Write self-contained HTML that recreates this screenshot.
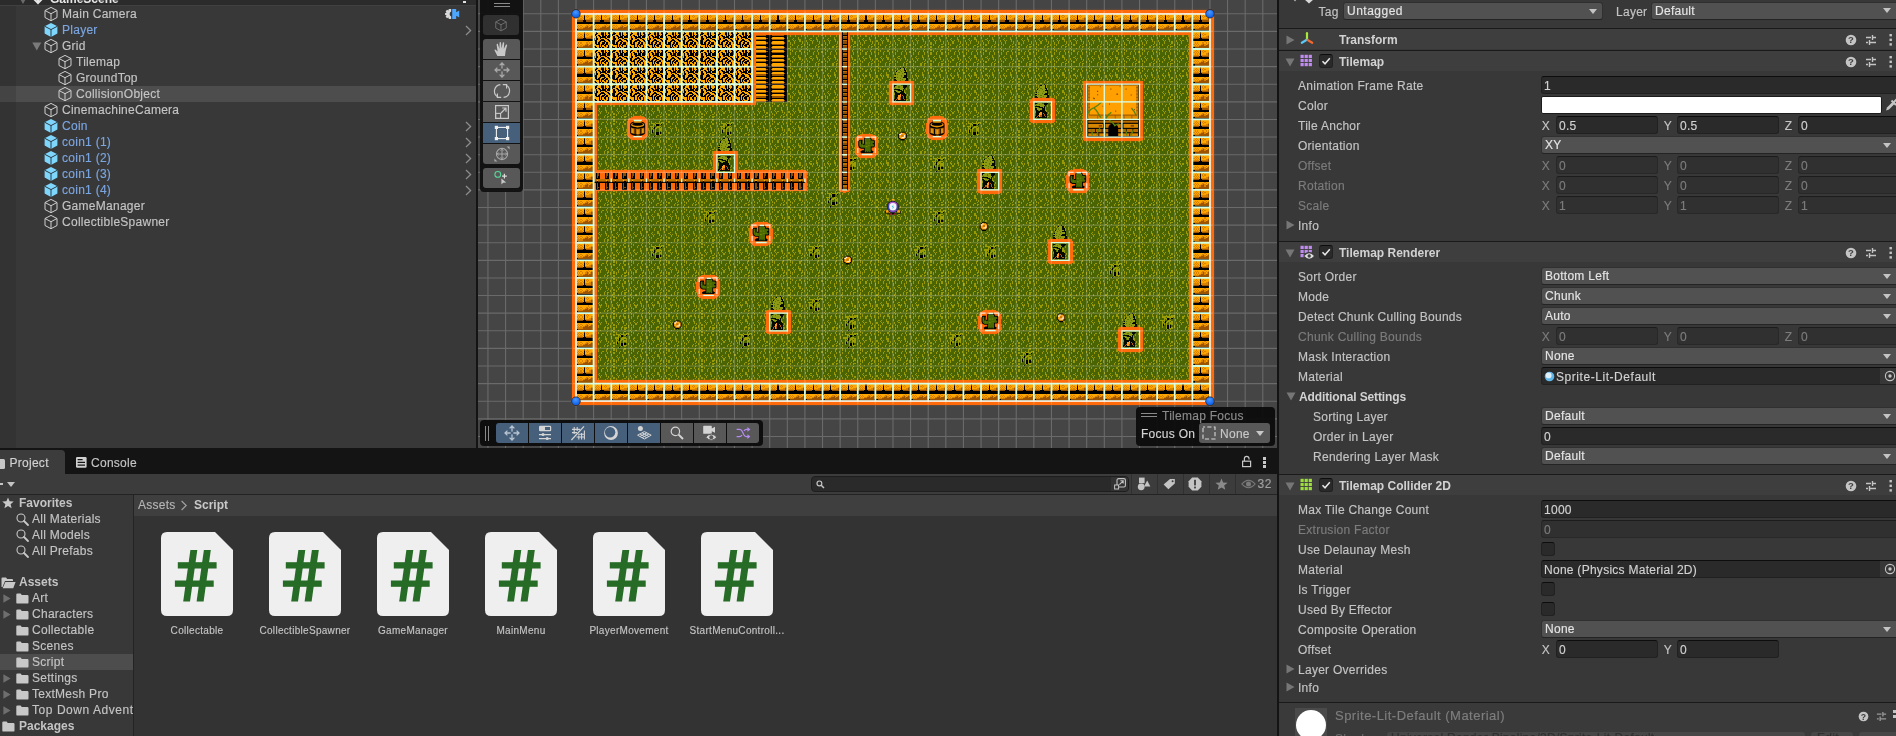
<!DOCTYPE html>
<html lang="en"><head><meta charset="utf-8"><title>Unity Editor</title>
<style>
*{box-sizing:border-box;margin:0;padding:0}
html,body{width:1896px;height:736px;overflow:hidden;background:#141414}
body{position:relative;font-family:"Liberation Sans",sans-serif;font-size:12px;color:#c4c4c4;line-height:16px;-webkit-font-smoothing:antialiased}
.abs{position:absolute}
.t{position:absolute;white-space:nowrap;letter-spacing:.27px}
.b{font-weight:bold;letter-spacing:0}
svg{position:absolute;overflow:visible}
/* hierarchy */
#hier{position:absolute;left:0;top:0;width:476px;height:448px;background:#383838;overflow:hidden}
#hier .gut{position:absolute;left:0;top:5px;width:16px;height:443px;background:#333}
#hier .hdr{position:absolute;left:0;top:-11px;width:476px;height:16px;background:#2b2b2b}
#hier .row{position:absolute;left:0;width:476px;height:16px}
#hier .sel{background:#4d4d4d}
#hier .row .t{top:0;line-height:16px;color:#c4c4c4}
#hier .row .pf{color:#7ba5e0}
/* inspector */
#insp{position:absolute;left:1279px;top:0;width:617px;height:736px;background:#383838;overflow:hidden}
#insp .hd{position:absolute;left:0;width:617px;height:21px;background:#3e3e3e;border-top:1px solid #1a1a1a}
#insp .hd .t{top:.5px;line-height:21px;color:#d2d2d2}
#insp .lab{position:absolute;white-space:nowrap;height:20px;line-height:20px;color:#c4c4c4;letter-spacing:.27px;margin-top:.5px}
#insp .dis{color:#7c7c7c}
.fld{position:absolute;height:18px;background:#2a2a2a;border:1px solid #212121;border-top-color:#0d0d0d;border-radius:3px;color:#d2d2d2;line-height:19.2px;padding-left:2px;white-space:nowrap;letter-spacing:.27px;overflow:hidden}
.fld.dis{color:#7c7c7c;background:#303030;border-color:#282828;border-top-color:#1c1c1c}
.dd{position:absolute;height:18px;background:#515151;border:1px solid #303030;border-bottom-color:#242424;border-radius:3px;color:#e4e4e4;line-height:17.6px;padding-left:3px;white-space:nowrap;letter-spacing:.27px;overflow:hidden}
.dd:after{content:"";position:absolute;right:5px;top:6px;border-left:4px solid transparent;border-right:4px solid transparent;border-top:5px solid #c4c4c4}
.cb{position:absolute;width:14px;height:14px;background:#2a2a2a;border:1px solid #212121;border-top-color:#0d0d0d;border-radius:3px}
.ax{position:absolute;height:20px;line-height:20px;color:#c4c4c4;margin-top:.6px;margin-left:.8px}
/* project */
#proj{position:absolute;left:0;top:448px;width:1277px;height:288px;background:#141414;overflow:hidden}
#insp .lab.b{letter-spacing:-.12px;color:#d2d2d2}
#root{position:absolute;left:0;top:0;width:1896px;height:736px;will-change:transform}
body{-webkit-text-stroke:.15px currentColor}
.b{-webkit-text-stroke:0}

</style></head>
<body>
<div id="root">
<div id="hier">
<div class="gut"></div>
<div class="hdr"><span class="t b" style="left:50px;top:1.8px;font-size:12px;color:#e6e6e6">GameScene</span><svg style="left:31px;top:2px" width="14" height="14" viewBox="0 0 14 14"><path d="M7 3 L7 11 M3 8 L7 12 L11 8" fill="none" stroke="#e6e6e6" stroke-width="2"/></svg><svg style="left:18px;top:7px" width="10" height="8" viewBox="0 0 10 8"><path d="M0.5 0 L9.5 0 L5 8 Z" fill="#6a6a6a"/></svg><div class="abs" style="left:463px;top:11.5px;width:2.6px;height:2.4px;background:#e0e0e0"></div></div>
<div class="abs" style="left:0;top:5px;width:476px;height:1px;background:#404040"></div>
<div class="row" style="top:6px">
<svg style="left:43.3px;top:0px" width="16" height="16" viewBox="0 0 16 16"><path d="M8 1.4 L14 4.5 L14 11.5 L8 14.7 L2 11.5 L2 4.5 Z M2 4.5 L8 7.7 L14 4.5 M8 7.7 L8 14.7" fill="none" stroke="#cfcfcf" stroke-width="1" stroke-linejoin="round"/></svg>
<span class="t" style="left:62px">Main Camera</span>
<svg style="left:444px;top:1px" width="16" height="14" viewBox="0 0 16 14"><path d="M7.2 2 L4.8 2 L4.4 3.4 L3 2.8 L1.6 4.4 L2.6 5.6 L1 6.2 L1 7.8 L2.6 8.4 L1.6 9.6 L3 11.2 L4.4 10.6 L4.8 12 L7.2 12 L7.2 9.4 A2.6 2.6 0 0 1 7.2 4.6 Z" fill="#d8d8d8"/><path d="M8.2 2 L12.2 2 L12.2 5.2 L15.2 3.6 L15.2 10.4 L12.2 8.8 L12.2 12 L8.2 12 Z" fill="#4da6ff"/></svg>
</div>
<div class="row" style="top:22px">
<svg style="left:43.3px;top:0px" width="16" height="16" viewBox="0 0 16 16"><path d="M8 1 L14.4 4.2 L14.4 11.6 L8 15 L1.6 11.6 L1.6 4.2 Z" fill="#7fd6fd"/><path d="M1.6 4.2 L8 7.6 L14.4 4.2 M8 7.6 L8 15" fill="none" stroke="#2c3a44" stroke-width="1"/></svg>
<span class="t pf" style="left:62px">Player</span>
<svg style="left:464px;top:3px" width="8" height="11" viewBox="0 0 8 11"><path d="M2 1 L6.6 5.5 L2 10" fill="none" stroke="#8c8c8c" stroke-width="1.3"/></svg>
</div>
<div class="row" style="top:38px">
<svg style="left:32px;top:4px" width="10" height="9" viewBox="0 0 10 9"><path d="M0.3 0.5 L9.3 0.5 L4.8 8.6 Z" fill="#7a7a7a"/></svg>
<svg style="left:43.3px;top:0px" width="16" height="16" viewBox="0 0 16 16"><path d="M8 1.4 L14 4.5 L14 11.5 L8 14.7 L2 11.5 L2 4.5 Z M2 4.5 L8 7.7 L14 4.5 M8 7.7 L8 14.7" fill="none" stroke="#cfcfcf" stroke-width="1" stroke-linejoin="round"/></svg>
<span class="t" style="left:62px">Grid</span>
</div>
<div class="row" style="top:54px">
<svg style="left:57.3px;top:0px" width="16" height="16" viewBox="0 0 16 16"><path d="M8 1.4 L14 4.5 L14 11.5 L8 14.7 L2 11.5 L2 4.5 Z M2 4.5 L8 7.7 L14 4.5 M8 7.7 L8 14.7" fill="none" stroke="#cfcfcf" stroke-width="1" stroke-linejoin="round"/></svg>
<span class="t" style="left:76px">Tilemap</span>
</div>
<div class="row" style="top:70px">
<svg style="left:57.3px;top:0px" width="16" height="16" viewBox="0 0 16 16"><path d="M8 1.4 L14 4.5 L14 11.5 L8 14.7 L2 11.5 L2 4.5 Z M2 4.5 L8 7.7 L14 4.5 M8 7.7 L8 14.7" fill="none" stroke="#cfcfcf" stroke-width="1" stroke-linejoin="round"/></svg>
<span class="t" style="left:76px">GroundTop</span>
</div>
<div class="row sel" style="top:86px">
<div class="abs" style="left:0;top:0;width:16px;height:16px;background:#444"></div>
<svg style="left:57.3px;top:0px" width="16" height="16" viewBox="0 0 16 16"><path d="M8 1.4 L14 4.5 L14 11.5 L8 14.7 L2 11.5 L2 4.5 Z M2 4.5 L8 7.7 L14 4.5 M8 7.7 L8 14.7" fill="none" stroke="#cfcfcf" stroke-width="1" stroke-linejoin="round"/></svg>
<span class="t" style="left:76px">CollisionObject</span>
</div>
<div class="row" style="top:102px">
<svg style="left:43.3px;top:0px" width="16" height="16" viewBox="0 0 16 16"><path d="M8 1.4 L14 4.5 L14 11.5 L8 14.7 L2 11.5 L2 4.5 Z M2 4.5 L8 7.7 L14 4.5 M8 7.7 L8 14.7" fill="none" stroke="#cfcfcf" stroke-width="1" stroke-linejoin="round"/></svg>
<span class="t" style="left:62px">CinemachineCamera</span>
</div>
<div class="row" style="top:118px">
<svg style="left:43.3px;top:0px" width="16" height="16" viewBox="0 0 16 16"><path d="M8 1 L14.4 4.2 L14.4 11.6 L8 15 L1.6 11.6 L1.6 4.2 Z" fill="#7fd6fd"/><path d="M1.6 4.2 L8 7.6 L14.4 4.2 M8 7.6 L8 15" fill="none" stroke="#2c3a44" stroke-width="1"/></svg>
<span class="t pf" style="left:62px">Coin</span>
<svg style="left:464px;top:3px" width="8" height="11" viewBox="0 0 8 11"><path d="M2 1 L6.6 5.5 L2 10" fill="none" stroke="#8c8c8c" stroke-width="1.3"/></svg>
</div>
<div class="row" style="top:134px">
<svg style="left:43.3px;top:0px" width="16" height="16" viewBox="0 0 16 16"><path d="M8 1 L14.4 4.2 L14.4 11.6 L8 15 L1.6 11.6 L1.6 4.2 Z" fill="#7fd6fd"/><path d="M1.6 4.2 L8 7.6 L14.4 4.2 M8 7.6 L8 15" fill="none" stroke="#2c3a44" stroke-width="1"/></svg>
<span class="t pf" style="left:62px">coin1 (1)</span>
<svg style="left:464px;top:3px" width="8" height="11" viewBox="0 0 8 11"><path d="M2 1 L6.6 5.5 L2 10" fill="none" stroke="#8c8c8c" stroke-width="1.3"/></svg>
</div>
<div class="row" style="top:150px">
<svg style="left:43.3px;top:0px" width="16" height="16" viewBox="0 0 16 16"><path d="M8 1 L14.4 4.2 L14.4 11.6 L8 15 L1.6 11.6 L1.6 4.2 Z" fill="#7fd6fd"/><path d="M1.6 4.2 L8 7.6 L14.4 4.2 M8 7.6 L8 15" fill="none" stroke="#2c3a44" stroke-width="1"/></svg>
<span class="t pf" style="left:62px">coin1 (2)</span>
<svg style="left:464px;top:3px" width="8" height="11" viewBox="0 0 8 11"><path d="M2 1 L6.6 5.5 L2 10" fill="none" stroke="#8c8c8c" stroke-width="1.3"/></svg>
</div>
<div class="row" style="top:166px">
<svg style="left:43.3px;top:0px" width="16" height="16" viewBox="0 0 16 16"><path d="M8 1 L14.4 4.2 L14.4 11.6 L8 15 L1.6 11.6 L1.6 4.2 Z" fill="#7fd6fd"/><path d="M1.6 4.2 L8 7.6 L14.4 4.2 M8 7.6 L8 15" fill="none" stroke="#2c3a44" stroke-width="1"/></svg>
<span class="t pf" style="left:62px">coin1 (3)</span>
<svg style="left:464px;top:3px" width="8" height="11" viewBox="0 0 8 11"><path d="M2 1 L6.6 5.5 L2 10" fill="none" stroke="#8c8c8c" stroke-width="1.3"/></svg>
</div>
<div class="row" style="top:182px">
<svg style="left:43.3px;top:0px" width="16" height="16" viewBox="0 0 16 16"><path d="M8 1 L14.4 4.2 L14.4 11.6 L8 15 L1.6 11.6 L1.6 4.2 Z" fill="#7fd6fd"/><path d="M1.6 4.2 L8 7.6 L14.4 4.2 M8 7.6 L8 15" fill="none" stroke="#2c3a44" stroke-width="1"/></svg>
<span class="t pf" style="left:62px">coin1 (4)</span>
<svg style="left:464px;top:3px" width="8" height="11" viewBox="0 0 8 11"><path d="M2 1 L6.6 5.5 L2 10" fill="none" stroke="#8c8c8c" stroke-width="1.3"/></svg>
</div>
<div class="row" style="top:198px">
<svg style="left:43.3px;top:0px" width="16" height="16" viewBox="0 0 16 16"><path d="M8 1.4 L14 4.5 L14 11.5 L8 14.7 L2 11.5 L2 4.5 Z M2 4.5 L8 7.7 L14 4.5 M8 7.7 L8 14.7" fill="none" stroke="#cfcfcf" stroke-width="1" stroke-linejoin="round"/></svg>
<span class="t" style="left:62px">GameManager</span>
</div>
<div class="row" style="top:214px">
<svg style="left:43.3px;top:0px" width="16" height="16" viewBox="0 0 16 16"><path d="M8 1.4 L14 4.5 L14 11.5 L8 14.7 L2 11.5 L2 4.5 Z M2 4.5 L8 7.7 L14 4.5 M8 7.7 L8 14.7" fill="none" stroke="#cfcfcf" stroke-width="1" stroke-linejoin="round"/></svg>
<span class="t" style="left:62px">CollectibleSpawner</span>
</div>
</div>
<div id="scene" class="abs" style="left:478px;top:0;width:799px;height:448px;background:#454545;overflow:hidden">
<svg style="left:0;top:0" width="799" height="448" viewBox="478 0 799 448">
<defs><radialGradient id="hgrad" cx="0.45" cy="0.3" r="0.8"><stop offset="0" stop-color="#4a98ff"/><stop offset="0.6" stop-color="#1c6ef0"/><stop offset="1" stop-color="#0a50c8"/></radialGradient><filter id="oblur" x="-5%" y="-5%" width="110%" height="110%"><feGaussianBlur stdDeviation="1"/></filter><g id="t-grass"><rect width="16" height="16" fill="#4b6403"/><rect x="2" y="0" width="1" height="1.06" fill="#989a06"/><rect x="12" y="0" width="1" height="1.06" fill="#989a06"/><rect x="2" y="1" width="1" height="1.06" fill="#989a06"/><rect x="4" y="1" width="1" height="1.06" fill="#989a06"/><rect x="11" y="1" width="1" height="1.06" fill="#989a06"/><rect x="4" y="2" width="1" height="1.06" fill="#989a06"/><rect x="8" y="2" width="1" height="1.06" fill="#989a06"/><rect x="11" y="2" width="1" height="1.06" fill="#989a06"/><rect x="15" y="2" width="1" height="1.06" fill="#989a06"/><rect x="2" y="3" width="1" height="1.06" fill="#989a06"/><rect x="7" y="3" width="1" height="1.06" fill="#989a06"/><rect x="12" y="3" width="1" height="1.06" fill="#989a06"/><rect x="15" y="3" width="1" height="1.06" fill="#989a06"/><rect x="2" y="4" width="1" height="1.06" fill="#989a06"/><rect x="7" y="4" width="1" height="1.06" fill="#989a06"/><rect x="12" y="4" width="1" height="1.06" fill="#989a06"/><rect x="0" y="5" width="1" height="1.06" fill="#989a06"/><rect x="10" y="5" width="1" height="1.06" fill="#989a06"/><rect x="0" y="6" width="1" height="1.06" fill="#989a06"/><rect x="5" y="6" width="1" height="1.06" fill="#989a06"/><rect x="10" y="6" width="1" height="1.06" fill="#989a06"/><rect x="4" y="7" width="1" height="1.06" fill="#989a06"/><rect x="10" y="7" width="2" height="1.06" fill="#989a06"/><rect x="1" y="8" width="1" height="1.06" fill="#989a06"/><rect x="5" y="8" width="1" height="1.06" fill="#989a06"/><rect x="7" y="8" width="1" height="1.06" fill="#989a06"/><rect x="11" y="8" width="1" height="1.06" fill="#989a06"/><rect x="1" y="9" width="1" height="1.06" fill="#989a06"/><rect x="6" y="9" width="1" height="1.06" fill="#989a06"/><rect x="11" y="9" width="1" height="1.06" fill="#989a06"/><rect x="13" y="9" width="1" height="1.06" fill="#989a06"/><rect x="2" y="10" width="1" height="1.06" fill="#989a06"/><rect x="6" y="10" width="1" height="1.06" fill="#989a06"/><rect x="13" y="10" width="1" height="1.06" fill="#989a06"/><rect x="2" y="11" width="1" height="1.06" fill="#989a06"/><rect x="4" y="11" width="1" height="1.06" fill="#989a06"/><rect x="12" y="11" width="1" height="1.06" fill="#989a06"/><rect x="15" y="11" width="1" height="1.06" fill="#989a06"/><rect x="4" y="12" width="1" height="1.06" fill="#989a06"/><rect x="10" y="12" width="1" height="1.06" fill="#989a06"/><rect x="15" y="12" width="1" height="1.06" fill="#989a06"/><rect x="2" y="13" width="1" height="1.06" fill="#989a06"/><rect x="9" y="13" width="1" height="1.06" fill="#989a06"/><rect x="12" y="13" width="2" height="1.06" fill="#989a06"/><rect x="2" y="14" width="1" height="1.06" fill="#989a06"/><rect x="9" y="14" width="1" height="1.06" fill="#989a06"/><rect x="12" y="14" width="1" height="1.06" fill="#989a06"/><rect x="1" y="15" width="1" height="1.06" fill="#989a06"/><rect x="6" y="15" width="1" height="1.06" fill="#989a06"/></g><g id="t-brick"><rect x="0" y="0" width="1" height="1.06" fill="#d88200"/><rect x="1" y="0" width="6" height="1.06" fill="#ffa600"/><rect x="7" y="0" width="1" height="1.06" fill="#6a3800"/><rect x="8" y="0" width="7" height="1.06" fill="#ffa600"/><rect x="15" y="0" width="1" height="1.06" fill="#d88200"/><rect x="0" y="1" width="3" height="1.06" fill="#ffa600"/><rect x="3" y="1" width="1" height="1.06" fill="#d88200"/><rect x="4" y="1" width="3" height="1.06" fill="#ffa600"/><rect x="7" y="1" width="1" height="1.06" fill="#6a3800"/><rect x="8" y="1" width="2" height="1.06" fill="#ffa600"/><rect x="10" y="1" width="1" height="1.06" fill="#d88200"/><rect x="11" y="1" width="4" height="1.06" fill="#ffa600"/><rect x="15" y="1" width="1" height="1.06" fill="#d88200"/><rect x="0" y="2" width="2" height="1.06" fill="#ffa600"/><rect x="2" y="2" width="1" height="1.06" fill="#d88200"/><rect x="3" y="2" width="1" height="1.06" fill="#ffa600"/><rect x="4" y="2" width="1" height="1.06" fill="#d88200"/><rect x="5" y="2" width="2" height="1.06" fill="#ffa600"/><rect x="7" y="2" width="1" height="1.06" fill="#000"/><rect x="8" y="2" width="1" height="1.06" fill="#ffa600"/><rect x="9" y="2" width="1" height="1.06" fill="#d88200"/><rect x="10" y="2" width="1" height="1.06" fill="#ffa600"/><rect x="11" y="2" width="1" height="1.06" fill="#d88200"/><rect x="12" y="2" width="3" height="1.06" fill="#ffa600"/><rect x="15" y="2" width="1" height="1.06" fill="#d88200"/><rect x="0" y="3" width="1" height="1.06" fill="#ffa600"/><rect x="1" y="3" width="1" height="1.06" fill="#d88200"/><rect x="2" y="3" width="1" height="1.06" fill="#ffa600"/><rect x="3" y="3" width="1" height="1.06" fill="#d88200"/><rect x="4" y="3" width="1" height="1.06" fill="#ffa600"/><rect x="5" y="3" width="1" height="1.06" fill="#d88200"/><rect x="6" y="3" width="1" height="1.06" fill="#ffa600"/><rect x="7" y="3" width="1" height="1.06" fill="#000"/><rect x="8" y="3" width="2" height="1.06" fill="#ffa600"/><rect x="10" y="3" width="1" height="1.06" fill="#d88200"/><rect x="11" y="3" width="3" height="1.06" fill="#ffa600"/><rect x="14" y="3" width="1" height="1.06" fill="#d88200"/><rect x="15" y="3" width="1" height="1.06" fill="#9c5400"/><rect x="0" y="4" width="2" height="1.06" fill="#ffa600"/><rect x="2" y="4" width="1" height="1.06" fill="#d88200"/><rect x="3" y="4" width="1" height="1.06" fill="#ffa600"/><rect x="4" y="4" width="1" height="1.06" fill="#d88200"/><rect x="5" y="4" width="1" height="1.06" fill="#ffa600"/><rect x="6" y="4" width="1" height="1.06" fill="#d88200"/><rect x="7" y="4" width="1" height="1.06" fill="#000"/><rect x="8" y="4" width="4" height="1.06" fill="#ffa600"/><rect x="12" y="4" width="2" height="1.06" fill="#d88200"/><rect x="14" y="4" width="2" height="1.06" fill="#9c5400"/><rect x="0" y="5" width="1" height="1.06" fill="#ffa600"/><rect x="1" y="5" width="5" height="1.06" fill="#d88200"/><rect x="6" y="5" width="1" height="1.06" fill="#ffa600"/><rect x="7" y="5" width="1" height="1.06" fill="#000"/><rect x="8" y="5" width="6" height="1.06" fill="#d88200"/><rect x="14" y="5" width="2" height="1.06" fill="#9c5400"/><rect x="0" y="6" width="6" height="1.06" fill="#9c5400"/><rect x="6" y="6" width="3" height="1.06" fill="#000"/><rect x="9" y="6" width="7" height="1.06" fill="#9c5400"/><rect x="0" y="7" width="16" height="1.06" fill="#000"/><rect x="0" y="8" width="16" height="1.06" fill="#000"/><rect x="0" y="9" width="1" height="1.06" fill="#000"/><rect x="1" y="9" width="10" height="1.06" fill="#ffa600"/><rect x="11" y="9" width="1" height="1.06" fill="#d88200"/><rect x="12" y="9" width="3" height="1.06" fill="#ffa600"/><rect x="15" y="9" width="1" height="1.06" fill="#d88200"/><rect x="0" y="10" width="2" height="1.06" fill="#ffa600"/><rect x="2" y="10" width="1" height="1.06" fill="#d88200"/><rect x="3" y="10" width="1" height="1.06" fill="#ffa600"/><rect x="4" y="10" width="1" height="1.06" fill="#d88200"/><rect x="5" y="10" width="4" height="1.06" fill="#ffa600"/><rect x="9" y="10" width="2" height="1.06" fill="#d88200"/><rect x="11" y="10" width="1" height="1.06" fill="#ffa600"/><rect x="12" y="10" width="1" height="1.06" fill="#d88200"/><rect x="13" y="10" width="1" height="1.06" fill="#ffa600"/><rect x="14" y="10" width="2" height="1.06" fill="#d88200"/><rect x="0" y="11" width="1" height="1.06" fill="#ffa600"/><rect x="1" y="11" width="1" height="1.06" fill="#d88200"/><rect x="2" y="11" width="1" height="1.06" fill="#ffa600"/><rect x="3" y="11" width="1" height="1.06" fill="#d88200"/><rect x="4" y="11" width="1" height="1.06" fill="#ffa600"/><rect x="5" y="11" width="1" height="1.06" fill="#d88200"/><rect x="6" y="11" width="2" height="1.06" fill="#ffa600"/><rect x="8" y="11" width="2" height="1.06" fill="#d88200"/><rect x="10" y="11" width="1" height="1.06" fill="#9c5400"/><rect x="11" y="11" width="1" height="1.06" fill="#d88200"/><rect x="12" y="11" width="1" height="1.06" fill="#ffa600"/><rect x="13" y="11" width="1" height="1.06" fill="#d88200"/><rect x="14" y="11" width="2" height="1.06" fill="#9c5400"/><rect x="0" y="12" width="2" height="1.06" fill="#ffa600"/><rect x="2" y="12" width="1" height="1.06" fill="#d88200"/><rect x="3" y="12" width="1" height="1.06" fill="#ffa600"/><rect x="4" y="12" width="1" height="1.06" fill="#d88200"/><rect x="5" y="12" width="1" height="1.06" fill="#ffa600"/><rect x="6" y="12" width="2" height="1.06" fill="#d88200"/><rect x="8" y="12" width="3" height="1.06" fill="#9c5400"/><rect x="11" y="12" width="1" height="1.06" fill="#d88200"/><rect x="12" y="12" width="4" height="1.06" fill="#9c5400"/><rect x="0" y="13" width="1" height="1.06" fill="#ffa600"/><rect x="1" y="13" width="5" height="1.06" fill="#d88200"/><rect x="6" y="13" width="10" height="1.06" fill="#9c5400"/><rect x="0" y="14" width="2" height="1.06" fill="#000"/><rect x="2" y="14" width="13" height="1.06" fill="#9c5400"/><rect x="15" y="14" width="1" height="1.06" fill="#000"/><rect x="0" y="15" width="16" height="1.06" fill="#000"/></g><g id="t-wheat"><rect x="0" y="0" width="2" height="1.06" fill="#ffa800"/><rect x="2" y="0" width="1" height="1.06" fill="#000"/><rect x="3" y="0" width="4" height="1.06" fill="#ffa800"/><rect x="7" y="0" width="2" height="1.06" fill="#000"/><rect x="9" y="0" width="1" height="1.06" fill="#ffa800"/><rect x="10" y="0" width="1" height="1.06" fill="#000"/><rect x="11" y="0" width="2" height="1.06" fill="#ffa800"/><rect x="13" y="0" width="2" height="1.06" fill="#000"/><rect x="15" y="0" width="1" height="1.06" fill="#ffa800"/><rect x="0" y="1" width="2" height="1.06" fill="#ffa800"/><rect x="2" y="1" width="2" height="1.06" fill="#000"/><rect x="4" y="1" width="3" height="1.06" fill="#ffa800"/><rect x="7" y="1" width="2" height="1.06" fill="#000"/><rect x="9" y="1" width="1" height="1.06" fill="#ffa800"/><rect x="10" y="1" width="1" height="1.06" fill="#000"/><rect x="11" y="1" width="2" height="1.06" fill="#ffa800"/><rect x="13" y="1" width="2" height="1.06" fill="#000"/><rect x="15" y="1" width="1" height="1.06" fill="#ffa800"/><rect x="0" y="2" width="1" height="1.06" fill="#ffa800"/><rect x="1" y="2" width="2" height="1.06" fill="#000"/><rect x="3" y="2" width="4" height="1.06" fill="#ffa800"/><rect x="7" y="2" width="2" height="1.06" fill="#000"/><rect x="9" y="2" width="1" height="1.06" fill="#ffa800"/><rect x="10" y="2" width="1" height="1.06" fill="#000"/><rect x="11" y="2" width="3" height="1.06" fill="#ffa800"/><rect x="14" y="2" width="2" height="1.06" fill="#000"/><rect x="0" y="3" width="1" height="1.06" fill="#ffa800"/><rect x="1" y="3" width="1" height="1.06" fill="#000"/><rect x="2" y="3" width="2" height="1.06" fill="#ffa800"/><rect x="4" y="3" width="2" height="1.06" fill="#000"/><rect x="6" y="3" width="2" height="1.06" fill="#ffa800"/><rect x="8" y="3" width="1" height="1.06" fill="#000"/><rect x="9" y="3" width="1" height="1.06" fill="#ffa800"/><rect x="10" y="3" width="2" height="1.06" fill="#000"/><rect x="12" y="3" width="1" height="1.06" fill="#ffa800"/><rect x="13" y="3" width="3" height="1.06" fill="#000"/><rect x="0" y="4" width="2" height="1.06" fill="#ffa800"/><rect x="2" y="4" width="1" height="1.06" fill="#000"/><rect x="3" y="4" width="2" height="1.06" fill="#ffa800"/><rect x="5" y="4" width="2" height="1.06" fill="#000"/><rect x="7" y="4" width="1" height="1.06" fill="#ffa800"/><rect x="8" y="4" width="3" height="1.06" fill="#000"/><rect x="11" y="4" width="1" height="1.06" fill="#ffa800"/><rect x="12" y="4" width="4" height="1.06" fill="#000"/><rect x="0" y="5" width="2" height="1.06" fill="#ffa800"/><rect x="2" y="5" width="1" height="1.06" fill="#000"/><rect x="3" y="5" width="3" height="1.06" fill="#ffa800"/><rect x="6" y="5" width="5" height="1.06" fill="#000"/><rect x="11" y="5" width="1" height="1.06" fill="#ffa800"/><rect x="12" y="5" width="3" height="1.06" fill="#000"/><rect x="15" y="5" width="1" height="1.06" fill="#ffa800"/><rect x="0" y="6" width="1" height="1.06" fill="#000"/><rect x="1" y="6" width="1" height="1.06" fill="#ffa800"/><rect x="2" y="6" width="2" height="1.06" fill="#000"/><rect x="4" y="6" width="2" height="1.06" fill="#ffa800"/><rect x="6" y="6" width="1" height="1.06" fill="#000"/><rect x="7" y="6" width="3" height="1.06" fill="#ffa800"/><rect x="10" y="6" width="2" height="1.06" fill="#000"/><rect x="12" y="6" width="4" height="1.06" fill="#ffa800"/><rect x="0" y="7" width="1" height="1.06" fill="#000"/><rect x="1" y="7" width="1" height="1.06" fill="#ffa800"/><rect x="2" y="7" width="2" height="1.06" fill="#000"/><rect x="4" y="7" width="3" height="1.06" fill="#ffa800"/><rect x="7" y="7" width="2" height="1.06" fill="#000"/><rect x="9" y="7" width="3" height="1.06" fill="#ffa800"/><rect x="12" y="7" width="2" height="1.06" fill="#000"/><rect x="14" y="7" width="2" height="1.06" fill="#ffa800"/><rect x="0" y="8" width="3" height="1.06" fill="#000"/><rect x="3" y="8" width="3" height="1.06" fill="#ffa800"/><rect x="6" y="8" width="4" height="1.06" fill="#000"/><rect x="10" y="8" width="3" height="1.06" fill="#ffa800"/><rect x="13" y="8" width="2" height="1.06" fill="#000"/><rect x="15" y="8" width="1" height="1.06" fill="#ffa800"/><rect x="0" y="9" width="1" height="1.06" fill="#ffa800"/><rect x="1" y="9" width="2" height="1.06" fill="#000"/><rect x="3" y="9" width="2" height="1.06" fill="#ffa800"/><rect x="5" y="9" width="2" height="1.06" fill="#000"/><rect x="7" y="9" width="2" height="1.06" fill="#ffa800"/><rect x="9" y="9" width="2" height="1.06" fill="#000"/><rect x="11" y="9" width="3" height="1.06" fill="#ffa800"/><rect x="14" y="9" width="2" height="1.06" fill="#000"/><rect x="0" y="10" width="1" height="1.06" fill="#ffa800"/><rect x="1" y="10" width="2" height="1.06" fill="#000"/><rect x="3" y="10" width="1" height="1.06" fill="#ffa800"/><rect x="4" y="10" width="2" height="1.06" fill="#000"/><rect x="6" y="10" width="2" height="1.06" fill="#ffa800"/><rect x="8" y="10" width="2" height="1.06" fill="#000"/><rect x="10" y="10" width="1" height="1.06" fill="#ffa800"/><rect x="11" y="10" width="2" height="1.06" fill="#000"/><rect x="13" y="10" width="2" height="1.06" fill="#ffa800"/><rect x="15" y="10" width="1" height="1.06" fill="#000"/><rect x="0" y="11" width="2" height="1.06" fill="#ffa800"/><rect x="2" y="11" width="4" height="1.06" fill="#000"/><rect x="6" y="11" width="1" height="1.06" fill="#ffa800"/><rect x="7" y="11" width="2" height="1.06" fill="#000"/><rect x="9" y="11" width="1" height="1.06" fill="#ffa800"/><rect x="10" y="11" width="3" height="1.06" fill="#000"/><rect x="13" y="11" width="3" height="1.06" fill="#ffa800"/><rect x="0" y="12" width="5" height="1.06" fill="#ffa800"/><rect x="5" y="12" width="1" height="1.06" fill="#000"/><rect x="6" y="12" width="1" height="1.06" fill="#ffa800"/><rect x="7" y="12" width="1" height="1.06" fill="#000"/><rect x="8" y="12" width="1" height="1.06" fill="#ffa800"/><rect x="9" y="12" width="2" height="1.06" fill="#000"/><rect x="11" y="12" width="2" height="1.06" fill="#ffa800"/><rect x="13" y="12" width="1" height="1.06" fill="#000"/><rect x="14" y="12" width="1" height="1.06" fill="#ffa800"/><rect x="15" y="12" width="1" height="1.06" fill="#e08c00"/><rect x="0" y="13" width="2" height="1.06" fill="#000"/><rect x="2" y="13" width="3" height="1.06" fill="#ffa800"/><rect x="5" y="13" width="1" height="1.06" fill="#000"/><rect x="6" y="13" width="1" height="1.06" fill="#ffa800"/><rect x="7" y="13" width="1" height="1.06" fill="#000"/><rect x="8" y="13" width="2" height="1.06" fill="#ffa800"/><rect x="10" y="13" width="1" height="1.06" fill="#000"/><rect x="11" y="13" width="2" height="1.06" fill="#ffa800"/><rect x="13" y="13" width="1" height="1.06" fill="#000"/><rect x="14" y="13" width="2" height="1.06" fill="#ffa800"/><rect x="0" y="14" width="1" height="1.06" fill="#ffa800"/><rect x="1" y="14" width="2" height="1.06" fill="#000"/><rect x="3" y="14" width="2" height="1.06" fill="#ffa800"/><rect x="5" y="14" width="2" height="1.06" fill="#000"/><rect x="7" y="14" width="1" height="1.06" fill="#ffa800"/><rect x="8" y="14" width="1" height="1.06" fill="#000"/><rect x="9" y="14" width="3" height="1.06" fill="#ffa800"/><rect x="12" y="14" width="2" height="1.06" fill="#000"/><rect x="14" y="14" width="2" height="1.06" fill="#ffa800"/><rect x="0" y="15" width="2" height="1.06" fill="#ffa800"/><rect x="2" y="15" width="2" height="1.06" fill="#000"/><rect x="4" y="15" width="1" height="1.06" fill="#ffa800"/><rect x="5" y="15" width="1" height="1.06" fill="#000"/><rect x="6" y="15" width="2" height="1.06" fill="#ffa800"/><rect x="8" y="15" width="1" height="1.06" fill="#000"/><rect x="9" y="15" width="3" height="1.06" fill="#ffa800"/><rect x="12" y="15" width="1" height="1.06" fill="#000"/><rect x="13" y="15" width="3" height="1.06" fill="#ffa800"/></g><g id="t-tuft"><rect x="13" y="2" width="2" height="1.06" fill="#9c9e06"/><rect x="4" y="3" width="3" height="1.06" fill="#9c9e06"/><rect x="9" y="3" width="3" height="1.06" fill="#9c9e06"/><rect x="13" y="3" width="1" height="1.06" fill="#9c9e06"/><rect x="6" y="4" width="1" height="1.06" fill="#9c9e06"/><rect x="8" y="4" width="1" height="1.06" fill="#9c9e06"/><rect x="9" y="4" width="2" height="1.06" fill="#000"/><rect x="12" y="4" width="1" height="1.06" fill="#9c9e06"/><rect x="13" y="4" width="1" height="1.06" fill="#000"/><rect x="6" y="5" width="1" height="1.06" fill="#9c9e06"/><rect x="8" y="5" width="1" height="1.06" fill="#9c9e06"/><rect x="9" y="5" width="2" height="1.06" fill="#000"/><rect x="3" y="6" width="2" height="1.06" fill="#9c9e06"/><rect x="6" y="6" width="1" height="1.06" fill="#9c9e06"/><rect x="11" y="6" width="2" height="1.06" fill="#9c9e06"/><rect x="4" y="7" width="1" height="1.06" fill="#9c9e06"/><rect x="6" y="7" width="1" height="1.06" fill="#9c9e06"/><rect x="7" y="7" width="1" height="1.06" fill="#000"/><rect x="9" y="7" width="2" height="1.06" fill="#9c9e06"/><rect x="13" y="7" width="1" height="1.06" fill="#9c9e06"/><rect x="4" y="8" width="1" height="1.06" fill="#9c9e06"/><rect x="7" y="8" width="1" height="1.06" fill="#000"/><rect x="8" y="8" width="2" height="1.06" fill="#9c9e06"/><rect x="12" y="8" width="2" height="1.06" fill="#9c9e06"/><rect x="4" y="9" width="1" height="1.06" fill="#9c9e06"/><rect x="8" y="9" width="1" height="1.06" fill="#9c9e06"/><rect x="11" y="9" width="2" height="1.06" fill="#9c9e06"/><rect x="4" y="10" width="1" height="1.06" fill="#9c9e06"/><rect x="5" y="10" width="1" height="1.06" fill="#000"/><rect x="8" y="10" width="1" height="1.06" fill="#9c9e06"/><rect x="11" y="10" width="1" height="1.06" fill="#9c9e06"/><rect x="4" y="11" width="1" height="1.06" fill="#9c9e06"/><rect x="5" y="11" width="1" height="1.06" fill="#000"/><rect x="8" y="11" width="1" height="1.06" fill="#9c9e06"/><rect x="9" y="11" width="2" height="1.06" fill="#000"/><rect x="11" y="11" width="1" height="1.06" fill="#9c9e06"/><rect x="12" y="11" width="1" height="1.06" fill="#000"/><rect x="8" y="12" width="1" height="1.06" fill="#9c9e06"/><rect x="9" y="12" width="2" height="1.06" fill="#000"/><rect x="11" y="12" width="1" height="1.06" fill="#9c9e06"/><rect x="12" y="12" width="1" height="1.06" fill="#000"/><rect x="8" y="13" width="1" height="1.06" fill="#9c9e06"/><rect x="9" y="13" width="2" height="1.06" fill="#000"/><rect x="11" y="13" width="1" height="1.06" fill="#9c9e06"/><rect x="7" y="15" width="1" height="1.06" fill="#000"/></g><g id="t-stair"><rect width="16" height="16" fill="#000"/><rect x="2" y="1" width="1" height="1.06" fill="#d88400"/><rect x="3" y="1" width="9" height="1.06" fill="#ffa600"/><rect x="12" y="1" width="1" height="1.06" fill="#d88400"/><rect x="1" y="2" width="1" height="1.06" fill="#9a5400"/><rect x="2" y="2" width="11" height="1.06" fill="#ffa600"/><rect x="13" y="2" width="1" height="1.06" fill="#9a5400"/><rect x="2" y="3" width="11" height="1.06" fill="#9a5400"/><rect x="2" y="5" width="1" height="1.06" fill="#d88400"/><rect x="3" y="5" width="9" height="1.06" fill="#ffa600"/><rect x="12" y="5" width="1" height="1.06" fill="#d88400"/><rect x="1" y="6" width="1" height="1.06" fill="#9a5400"/><rect x="2" y="6" width="11" height="1.06" fill="#ffa600"/><rect x="13" y="6" width="1" height="1.06" fill="#9a5400"/><rect x="2" y="7" width="11" height="1.06" fill="#9a5400"/><rect x="2" y="9" width="1" height="1.06" fill="#d88400"/><rect x="3" y="9" width="9" height="1.06" fill="#ffa600"/><rect x="12" y="9" width="1" height="1.06" fill="#d88400"/><rect x="1" y="10" width="1" height="1.06" fill="#9a5400"/><rect x="2" y="10" width="11" height="1.06" fill="#ffa600"/><rect x="13" y="10" width="1" height="1.06" fill="#9a5400"/><rect x="2" y="11" width="11" height="1.06" fill="#9a5400"/><rect x="2" y="13" width="1" height="1.06" fill="#d88400"/><rect x="3" y="13" width="9" height="1.06" fill="#ffa600"/><rect x="12" y="13" width="1" height="1.06" fill="#d88400"/><rect x="1" y="14" width="1" height="1.06" fill="#9a5400"/><rect x="2" y="14" width="11" height="1.06" fill="#ffa600"/><rect x="13" y="14" width="1" height="1.06" fill="#9a5400"/><rect x="2" y="15" width="11" height="1.06" fill="#9a5400"/></g><g id="t-fh"><rect x="2" y="1" width="1" height="1.06" fill="#000"/><rect x="3" y="1" width="2" height="1.06" fill="#8a4a00"/><rect x="5" y="1" width="1" height="1.06" fill="#000"/><rect x="10" y="1" width="1" height="1.06" fill="#000"/><rect x="11" y="1" width="2" height="1.06" fill="#8a4a00"/><rect x="13" y="1" width="1" height="1.06" fill="#000"/><rect x="2" y="2" width="1" height="1.06" fill="#000"/><rect x="3" y="2" width="2" height="1.06" fill="#8a4a00"/><rect x="5" y="2" width="1" height="1.06" fill="#000"/><rect x="10" y="2" width="1" height="1.06" fill="#000"/><rect x="11" y="2" width="2" height="1.06" fill="#8a4a00"/><rect x="13" y="2" width="1" height="1.06" fill="#000"/><rect x="2" y="3" width="1" height="1.06" fill="#000"/><rect x="3" y="3" width="1" height="1.06" fill="#8a4a00"/><rect x="4" y="3" width="2" height="1.06" fill="#000"/><rect x="10" y="3" width="1" height="1.06" fill="#000"/><rect x="11" y="3" width="1" height="1.06" fill="#8a4a00"/><rect x="12" y="3" width="2" height="1.06" fill="#000"/><rect x="2" y="4" width="1" height="1.06" fill="#000"/><rect x="3" y="4" width="1" height="1.06" fill="#8a4a00"/><rect x="4" y="4" width="2" height="1.06" fill="#000"/><rect x="10" y="4" width="1" height="1.06" fill="#000"/><rect x="11" y="4" width="1" height="1.06" fill="#8a4a00"/><rect x="12" y="4" width="2" height="1.06" fill="#000"/><rect x="2" y="5" width="4" height="1.06" fill="#000"/><rect x="10" y="5" width="4" height="1.06" fill="#000"/><rect x="0" y="6" width="16" height="1.06" fill="#c07000"/><rect x="0" y="7" width="3" height="1.06" fill="#c07000"/><rect x="3" y="7" width="1" height="1.06" fill="#ffb400"/><rect x="4" y="7" width="7" height="1.06" fill="#c07000"/><rect x="11" y="7" width="1" height="1.06" fill="#ffb400"/><rect x="12" y="7" width="4" height="1.06" fill="#c07000"/><rect x="0" y="8" width="3" height="1.06" fill="#7a4000"/><rect x="3" y="8" width="1" height="1.06" fill="#000"/><rect x="4" y="8" width="8" height="1.06" fill="#7a4000"/><rect x="12" y="8" width="1" height="1.06" fill="#000"/><rect x="13" y="8" width="3" height="1.06" fill="#7a4000"/><rect x="0" y="9" width="16" height="1.06" fill="#000"/><rect x="2" y="10" width="1" height="1.06" fill="#000"/><rect x="3" y="10" width="1" height="1.06" fill="#8a4a00"/><rect x="4" y="10" width="2" height="1.06" fill="#000"/><rect x="10" y="10" width="1" height="1.06" fill="#000"/><rect x="11" y="10" width="1" height="1.06" fill="#8a4a00"/><rect x="12" y="10" width="2" height="1.06" fill="#000"/><rect x="2" y="11" width="1" height="1.06" fill="#000"/><rect x="3" y="11" width="1" height="1.06" fill="#8a4a00"/><rect x="4" y="11" width="2" height="1.06" fill="#000"/><rect x="10" y="11" width="1" height="1.06" fill="#000"/><rect x="11" y="11" width="1" height="1.06" fill="#8a4a00"/><rect x="12" y="11" width="2" height="1.06" fill="#000"/><rect x="2" y="12" width="1" height="1.06" fill="#000"/><rect x="3" y="12" width="1" height="1.06" fill="#8a4a00"/><rect x="4" y="12" width="2" height="1.06" fill="#000"/><rect x="10" y="12" width="1" height="1.06" fill="#000"/><rect x="11" y="12" width="1" height="1.06" fill="#8a4a00"/><rect x="12" y="12" width="2" height="1.06" fill="#000"/><rect x="2" y="13" width="1" height="1.06" fill="#000"/><rect x="3" y="13" width="2" height="1.06" fill="#8a4a00"/><rect x="5" y="13" width="1" height="1.06" fill="#000"/><rect x="10" y="13" width="1" height="1.06" fill="#000"/><rect x="11" y="13" width="2" height="1.06" fill="#8a4a00"/><rect x="13" y="13" width="1" height="1.06" fill="#000"/><rect x="2" y="14" width="1" height="1.06" fill="#000"/><rect x="3" y="14" width="1" height="1.06" fill="#8a4a00"/><rect x="4" y="14" width="2" height="1.06" fill="#000"/><rect x="10" y="14" width="1" height="1.06" fill="#000"/><rect x="11" y="14" width="1" height="1.06" fill="#8a4a00"/><rect x="12" y="14" width="2" height="1.06" fill="#000"/><rect x="2" y="15" width="4" height="1.06" fill="#000"/><rect x="10" y="15" width="4" height="1.06" fill="#000"/></g><g id="t-fv"><rect x="2" y="0" width="1" height="1.06" fill="#000"/><rect x="3" y="0" width="3" height="1.06" fill="#c07000"/><rect x="6" y="0" width="1" height="1.06" fill="#000"/><rect x="2" y="1" width="1" height="1.06" fill="#000"/><rect x="3" y="1" width="3" height="1.06" fill="#8a4a00"/><rect x="6" y="1" width="1" height="1.06" fill="#000"/><rect x="2" y="2" width="1" height="1.06" fill="#000"/><rect x="3" y="2" width="3" height="1.06" fill="#8a4a00"/><rect x="6" y="2" width="1" height="1.06" fill="#000"/><rect x="2" y="3" width="5" height="1.06" fill="#000"/><rect x="2" y="4" width="1" height="1.06" fill="#000"/><rect x="3" y="4" width="3" height="1.06" fill="#c07000"/><rect x="6" y="4" width="1" height="1.06" fill="#000"/><rect x="2" y="5" width="1" height="1.06" fill="#000"/><rect x="3" y="5" width="3" height="1.06" fill="#8a4a00"/><rect x="6" y="5" width="1" height="1.06" fill="#000"/><rect x="2" y="6" width="1" height="1.06" fill="#000"/><rect x="3" y="6" width="3" height="1.06" fill="#8a4a00"/><rect x="6" y="6" width="1" height="1.06" fill="#000"/><rect x="2" y="7" width="5" height="1.06" fill="#000"/><rect x="2" y="8" width="1" height="1.06" fill="#000"/><rect x="3" y="8" width="3" height="1.06" fill="#c07000"/><rect x="6" y="8" width="1" height="1.06" fill="#000"/><rect x="2" y="9" width="1" height="1.06" fill="#000"/><rect x="3" y="9" width="3" height="1.06" fill="#8a4a00"/><rect x="6" y="9" width="1" height="1.06" fill="#000"/><rect x="2" y="10" width="1" height="1.06" fill="#000"/><rect x="3" y="10" width="3" height="1.06" fill="#8a4a00"/><rect x="6" y="10" width="1" height="1.06" fill="#000"/><rect x="2" y="11" width="5" height="1.06" fill="#000"/><rect x="2" y="12" width="1" height="1.06" fill="#000"/><rect x="3" y="12" width="3" height="1.06" fill="#c07000"/><rect x="6" y="12" width="1" height="1.06" fill="#000"/><rect x="2" y="13" width="1" height="1.06" fill="#000"/><rect x="3" y="13" width="3" height="1.06" fill="#8a4a00"/><rect x="6" y="13" width="1" height="1.06" fill="#000"/><rect x="2" y="14" width="1" height="1.06" fill="#000"/><rect x="3" y="14" width="3" height="1.06" fill="#8a4a00"/><rect x="6" y="14" width="1" height="1.06" fill="#000"/><rect x="2" y="15" width="5" height="1.06" fill="#000"/></g><g id="t-top"><rect x="9" y="0" width="1" height="1.06" fill="#050a00"/><rect x="6" y="1" width="1" height="1.06" fill="#050a00"/><rect x="7" y="1" width="3" height="1.06" fill="#8e9a14"/><rect x="10" y="1" width="1" height="1.06" fill="#050a00"/><rect x="6" y="2" width="4" height="1.06" fill="#8e9a14"/><rect x="10" y="2" width="1" height="1.06" fill="#050a00"/><rect x="5" y="3" width="1" height="1.06" fill="#8e9a14"/><rect x="6" y="3" width="1" height="1.06" fill="#587600"/><rect x="7" y="3" width="3" height="1.06" fill="#8e9a14"/><rect x="10" y="3" width="2" height="1.06" fill="#050a00"/><rect x="3" y="4" width="1" height="1.06" fill="#050a00"/><rect x="4" y="4" width="3" height="1.06" fill="#8e9a14"/><rect x="7" y="4" width="1" height="1.06" fill="#587600"/><rect x="8" y="4" width="3" height="1.06" fill="#8e9a14"/><rect x="11" y="4" width="1" height="1.06" fill="#050a00"/><rect x="3" y="5" width="2" height="1.06" fill="#8e9a14"/><rect x="5" y="5" width="1" height="1.06" fill="#587600"/><rect x="6" y="5" width="4" height="1.06" fill="#8e9a14"/><rect x="10" y="5" width="3" height="1.06" fill="#050a00"/><rect x="3" y="6" width="5" height="1.06" fill="#8e9a14"/><rect x="8" y="6" width="1" height="1.06" fill="#587600"/><rect x="9" y="6" width="3" height="1.06" fill="#8e9a14"/><rect x="12" y="6" width="1" height="1.06" fill="#050a00"/><rect x="2" y="7" width="1" height="1.06" fill="#050a00"/><rect x="3" y="7" width="1" height="1.06" fill="#8e9a14"/><rect x="4" y="7" width="1" height="1.06" fill="#587600"/><rect x="5" y="7" width="7" height="1.06" fill="#8e9a14"/><rect x="12" y="7" width="1" height="1.06" fill="#050a00"/><rect x="2" y="8" width="5" height="1.06" fill="#8e9a14"/><rect x="7" y="8" width="1" height="1.06" fill="#587600"/><rect x="8" y="8" width="2" height="1.06" fill="#8e9a14"/><rect x="10" y="8" width="3" height="1.06" fill="#050a00"/><rect x="1" y="9" width="2" height="1.06" fill="#050a00"/><rect x="3" y="9" width="1" height="1.06" fill="#8e9a14"/><rect x="4" y="9" width="1" height="1.06" fill="#587600"/><rect x="5" y="9" width="4" height="1.06" fill="#8e9a14"/><rect x="9" y="9" width="4" height="1.06" fill="#050a00"/><rect x="2" y="10" width="4" height="1.06" fill="#8e9a14"/><rect x="6" y="10" width="1" height="1.06" fill="#587600"/><rect x="7" y="10" width="5" height="1.06" fill="#8e9a14"/><rect x="12" y="10" width="2" height="1.06" fill="#050a00"/><rect x="1" y="11" width="2" height="1.06" fill="#050a00"/><rect x="3" y="11" width="5" height="1.06" fill="#8e9a14"/><rect x="8" y="11" width="1" height="1.06" fill="#587600"/><rect x="9" y="11" width="3" height="1.06" fill="#8e9a14"/><rect x="12" y="11" width="2" height="1.06" fill="#050a00"/><rect x="1" y="12" width="3" height="1.06" fill="#050a00"/><rect x="4" y="12" width="2" height="1.06" fill="#8e9a14"/><rect x="6" y="12" width="1" height="1.06" fill="#587600"/><rect x="7" y="12" width="4" height="1.06" fill="#8e9a14"/><rect x="11" y="12" width="3" height="1.06" fill="#050a00"/><rect x="2" y="13" width="1" height="1.06" fill="#050a00"/><rect x="3" y="13" width="4" height="1.06" fill="#8e9a14"/><rect x="7" y="13" width="1" height="1.06" fill="#587600"/><rect x="8" y="13" width="3" height="1.06" fill="#8e9a14"/><rect x="11" y="13" width="1" height="1.06" fill="#050a00"/><rect x="2" y="14" width="2" height="1.06" fill="#8e9a14"/><rect x="4" y="14" width="1" height="1.06" fill="#587600"/><rect x="5" y="14" width="5" height="1.06" fill="#8e9a14"/><rect x="10" y="14" width="2" height="1.06" fill="#050a00"/><rect x="2" y="15" width="1" height="1.06" fill="#050a00"/><rect x="3" y="15" width="4" height="1.06" fill="#8e9a14"/><rect x="7" y="15" width="1" height="1.06" fill="#587600"/><rect x="8" y="15" width="1" height="1.06" fill="#8e9a14"/><rect x="9" y="15" width="2" height="1.06" fill="#050a00"/></g><g id="t-trunk"><use href="#t-grass"/><rect x="1" y="1" width="2" height="1.06" fill="#050a00"/><rect x="4" y="1" width="3" height="1.06" fill="#8e9a14"/><rect x="9" y="1" width="4" height="1.06" fill="#050a00"/><rect x="2" y="2" width="3" height="1.06" fill="#8e9a14"/><rect x="5" y="2" width="1" height="1.06" fill="#587600"/><rect x="6" y="2" width="2" height="1.06" fill="#8e9a14"/><rect x="9" y="2" width="3" height="1.06" fill="#050a00"/><rect x="1" y="3" width="1" height="1.06" fill="#8e9a14"/><rect x="2" y="3" width="1" height="1.06" fill="#587600"/><rect x="3" y="3" width="7" height="1.06" fill="#8e9a14"/><rect x="10" y="3" width="1" height="1.06" fill="#050a00"/><rect x="1" y="4" width="5" height="1.06" fill="#050a00"/><rect x="6" y="4" width="3" height="1.06" fill="#8e9a14"/><rect x="9" y="4" width="1" height="1.06" fill="#050a00"/><rect x="2" y="5" width="2" height="1.06" fill="#8e9a14"/><rect x="4" y="5" width="1" height="1.06" fill="#587600"/><rect x="5" y="5" width="3" height="1.06" fill="#050a00"/><rect x="8" y="5" width="1" height="1.06" fill="#8e9a14"/><rect x="9" y="5" width="1" height="1.06" fill="#050a00"/><rect x="1" y="6" width="2" height="1.06" fill="#050a00"/><rect x="3" y="6" width="4" height="1.06" fill="#8e9a14"/><rect x="7" y="6" width="3" height="1.06" fill="#050a00"/><rect x="2" y="7" width="2" height="1.06" fill="#050a00"/><rect x="4" y="7" width="1" height="1.06" fill="#587600"/><rect x="5" y="7" width="1" height="1.06" fill="#8e9a14"/><rect x="6" y="7" width="4" height="1.06" fill="#050a00"/><rect x="2" y="8" width="9" height="1.06" fill="#050a00"/><rect x="2" y="9" width="4" height="1.06" fill="#050a00"/><rect x="6" y="9" width="1" height="1.06" fill="#ff9a20"/><rect x="7" y="9" width="5" height="1.06" fill="#050a00"/><rect x="2" y="10" width="3" height="1.06" fill="#050a00"/><rect x="5" y="10" width="2" height="1.06" fill="#ff9a20"/><rect x="7" y="10" width="1" height="1.06" fill="#050a00"/><rect x="8" y="10" width="1" height="1.06" fill="#b45a10"/><rect x="9" y="10" width="3" height="1.06" fill="#050a00"/><rect x="2" y="11" width="3" height="1.06" fill="#050a00"/><rect x="5" y="11" width="2" height="1.06" fill="#ff9a20"/><rect x="7" y="11" width="2" height="1.06" fill="#050a00"/><rect x="9" y="11" width="1" height="1.06" fill="#b45a10"/><rect x="10" y="11" width="2" height="1.06" fill="#050a00"/><rect x="2" y="12" width="2" height="1.06" fill="#050a00"/><rect x="4" y="12" width="1" height="1.06" fill="#b45a10"/><rect x="5" y="12" width="1" height="1.06" fill="#ff9a20"/><rect x="6" y="12" width="1" height="1.06" fill="#b45a10"/><rect x="7" y="12" width="2" height="1.06" fill="#050a00"/><rect x="9" y="12" width="1" height="1.06" fill="#b45a10"/><rect x="10" y="12" width="2" height="1.06" fill="#050a00"/><rect x="1" y="13" width="2" height="1.06" fill="#050a00"/><rect x="3" y="13" width="1" height="1.06" fill="#b45a10"/><rect x="4" y="13" width="1" height="1.06" fill="#050a00"/><rect x="5" y="13" width="1" height="1.06" fill="#ff9a20"/><rect x="6" y="13" width="1" height="1.06" fill="#b45a10"/><rect x="7" y="13" width="3" height="1.06" fill="#050a00"/><rect x="10" y="13" width="1" height="1.06" fill="#b45a10"/><rect x="11" y="13" width="1" height="1.06" fill="#050a00"/><rect x="1" y="14" width="1" height="1.06" fill="#050a00"/><rect x="2" y="14" width="1" height="1.06" fill="#b45a10"/><rect x="3" y="14" width="9" height="1.06" fill="#050a00"/></g><g id="t-barrel" shape-rendering="auto"><path d="M1.2 5 Q1.2 2.4 4 2.2 L4 0.4 L12 0.4 L12 2.2 Q14.8 2.4 14.8 5 L14.8 12.6 Q13 15 8 15 Q3 15 1.2 12.6 Z" fill="#000"/><rect x="4.3" y="0.7" width="7.4" height="1.9" fill="#d88400"/><ellipse cx="8" cy="4.8" rx="6" ry="2.4" fill="#e89400"/><ellipse cx="8" cy="4.4" rx="4.8" ry="1.35" fill="#000"/><path d="M2 7.4 Q8 9.6 14 7.4 L14.1 12.3 Q8 14.6 1.9 12.3 Z" fill="#c07200"/><path d="M3.4 8.6 V12.2 M8.2 9.4 V13.4 M12.6 8.6 V12.2" stroke="#e8960c" stroke-width="1.5"/><path d="M5.7 8.4 V13.6 M10.9 8.4 V13.6" stroke="#000" stroke-width="1"/><rect x="6.8" y="13.9" width="3" height="0.8" fill="#b86a00"/></g><g id="t-cactus" shape-rendering="auto"><path d="M2.4 13.2 L4 12 L12.6 12 L14.4 13.2 L13.4 14.6 L3 14.6 Z" fill="#000"/><path d="M5.6 1.6 Q5.6 0.6 7 0.6 L11 0.6 Q12.6 0.6 12.6 2 L12.6 14 L5.6 14 Z" fill="#000"/><path d="M0.4 4.2 Q0.4 2.4 2 2.4 L4.4 2.4 L4.4 6 L6 6 L6 10.6 L3 10.6 Q0.4 9.6 0.4 7.6 Z" fill="#000"/><path d="M12 2.4 L14.4 2.4 Q15.6 2.4 15.6 4 L15.6 8 Q15.6 9.4 14 9.4 L12 9.4 Z" fill="#000"/><rect x="6.4" y="1.4" width="5.4" height="12.4" fill="#4a6a00"/><path d="M1.3 4 Q1.3 3.2 2.2 3.2 L3 3.2 L3 6.6 L4 6.6 L4 3.6 L4.6 3.6 L4.6 7 L6.6 7 L6.6 9.8 L3.2 9.8 Q1.3 9 1.3 7.4 Z" fill="#4a6a00"/><path d="M11.6 3.2 L13.8 3.2 Q14.8 3.2 14.8 4.2 L14.8 5.4 L13.6 5.4 L13.6 6.6 L14.8 6.6 L14.8 7.8 Q14.8 8.6 13.8 8.6 L11.6 8.6 Z" fill="#4a6a00"/><path d="M7.2 5.4 H8.8 M10 5.4 H11 M7.2 8.6 H8.8 M9.6 7.6 H10.4 M11 7.6 H11.4 M7 2.6 H7.6 M10.6 2 H11.2 M2 6 H2.6 M3.8 8 H4.6" stroke="#8a9610" stroke-width="0.7"/><path d="M8 13.9 V13 M10 13.9 V13" stroke="#000" stroke-width="0.8"/></g></defs>
<path d="M487.95 0V448M505.56 0V448M523.17 0V448M540.78 0V448M558.39 0V448M576.00 0V448M593.61 0V448M611.22 0V448M628.83 0V448M646.44 0V448M664.05 0V448M681.66 0V448M699.27 0V448M716.88 0V448M734.49 0V448M752.10 0V448M769.71 0V448M787.32 0V448M804.93 0V448M822.54 0V448M840.15 0V448M857.76 0V448M875.37 0V448M892.98 0V448M910.59 0V448M928.20 0V448M945.81 0V448M963.42 0V448M981.03 0V448M998.64 0V448M1016.25 0V448M1033.86 0V448M1051.47 0V448M1069.08 0V448M1086.69 0V448M1104.30 0V448M1121.91 0V448M1139.52 0V448M1157.13 0V448M1174.74 0V448M1192.35 0V448M1209.96 0V448M1227.57 0V448M1245.18 0V448M1262.79 0V448M478 13.80H1277M478 31.41H1277M478 49.02H1277M478 66.63H1277M478 84.24H1277M478 101.85H1277M478 119.46H1277M478 137.07H1277M478 154.68H1277M478 172.29H1277M478 189.90H1277M478 207.51H1277M478 225.12H1277M478 242.73H1277M478 260.34H1277M478 277.95H1277M478 295.56H1277M478 313.17H1277M478 330.78H1277M478 348.39H1277M478 366.00H1277M478 383.61H1277M478 401.22H1277M478 418.83H1277M478 436.44H1277" stroke="#6a6a6a" stroke-width="1.1" fill="none"/>
<g shape-rendering="crispEdges"><use href="#t-stair" transform="translate(752.10,31.41) scale(1.10062)"/><use href="#t-stair" transform="translate(769.71,31.41) scale(1.10062)"/><use href="#t-grass" transform="translate(787.32,31.41) scale(1.10062)"/><use href="#t-grass" transform="translate(804.93,31.41) scale(1.10062)"/><use href="#t-grass" transform="translate(822.54,31.41) scale(1.10062)"/><use href="#t-grass" transform="translate(840.15,31.41) scale(1.10062)"/><use href="#t-grass" transform="translate(857.76,31.41) scale(1.10062)"/><use href="#t-grass" transform="translate(875.37,31.41) scale(1.10062)"/><use href="#t-grass" transform="translate(892.98,31.41) scale(1.10062)"/><use href="#t-grass" transform="translate(910.59,31.41) scale(1.10062)"/><use href="#t-grass" transform="translate(928.20,31.41) scale(1.10062)"/><use href="#t-grass" transform="translate(945.81,31.41) scale(1.10062)"/><use href="#t-grass" transform="translate(963.42,31.41) scale(1.10062)"/><use href="#t-grass" transform="translate(981.03,31.41) scale(1.10062)"/><use href="#t-grass" transform="translate(998.64,31.41) scale(1.10062)"/><use href="#t-grass" transform="translate(1016.25,31.41) scale(1.10062)"/><use href="#t-grass" transform="translate(1033.86,31.41) scale(1.10062)"/><use href="#t-grass" transform="translate(1051.47,31.41) scale(1.10062)"/><use href="#t-grass" transform="translate(1069.08,31.41) scale(1.10062)"/><use href="#t-grass" transform="translate(1086.69,31.41) scale(1.10062)"/><use href="#t-grass" transform="translate(1104.30,31.41) scale(1.10062)"/><use href="#t-grass" transform="translate(1121.91,31.41) scale(1.10062)"/><use href="#t-grass" transform="translate(1139.52,31.41) scale(1.10062)"/><use href="#t-grass" transform="translate(1157.13,31.41) scale(1.10062)"/><use href="#t-grass" transform="translate(1174.74,31.41) scale(1.10062)"/><use href="#t-stair" transform="translate(752.10,49.02) scale(1.10062)"/><use href="#t-stair" transform="translate(769.71,49.02) scale(1.10062)"/><use href="#t-grass" transform="translate(787.32,49.02) scale(1.10062)"/><use href="#t-grass" transform="translate(804.93,49.02) scale(1.10062)"/><use href="#t-grass" transform="translate(822.54,49.02) scale(1.10062)"/><use href="#t-grass" transform="translate(840.15,49.02) scale(1.10062)"/><use href="#t-grass" transform="translate(857.76,49.02) scale(1.10062)"/><use href="#t-grass" transform="translate(875.37,49.02) scale(1.10062)"/><use href="#t-grass" transform="translate(892.98,49.02) scale(1.10062)"/><use href="#t-grass" transform="translate(910.59,49.02) scale(1.10062)"/><use href="#t-grass" transform="translate(928.20,49.02) scale(1.10062)"/><use href="#t-grass" transform="translate(945.81,49.02) scale(1.10062)"/><use href="#t-grass" transform="translate(963.42,49.02) scale(1.10062)"/><use href="#t-grass" transform="translate(981.03,49.02) scale(1.10062)"/><use href="#t-grass" transform="translate(998.64,49.02) scale(1.10062)"/><use href="#t-grass" transform="translate(1016.25,49.02) scale(1.10062)"/><use href="#t-grass" transform="translate(1033.86,49.02) scale(1.10062)"/><use href="#t-grass" transform="translate(1051.47,49.02) scale(1.10062)"/><use href="#t-grass" transform="translate(1069.08,49.02) scale(1.10062)"/><use href="#t-grass" transform="translate(1086.69,49.02) scale(1.10062)"/><use href="#t-grass" transform="translate(1104.30,49.02) scale(1.10062)"/><use href="#t-grass" transform="translate(1121.91,49.02) scale(1.10062)"/><use href="#t-grass" transform="translate(1139.52,49.02) scale(1.10062)"/><use href="#t-grass" transform="translate(1157.13,49.02) scale(1.10062)"/><use href="#t-grass" transform="translate(1174.74,49.02) scale(1.10062)"/><use href="#t-stair" transform="translate(752.10,66.63) scale(1.10062)"/><use href="#t-stair" transform="translate(769.71,66.63) scale(1.10062)"/><use href="#t-grass" transform="translate(787.32,66.63) scale(1.10062)"/><use href="#t-grass" transform="translate(804.93,66.63) scale(1.10062)"/><use href="#t-grass" transform="translate(822.54,66.63) scale(1.10062)"/><use href="#t-grass" transform="translate(840.15,66.63) scale(1.10062)"/><use href="#t-grass" transform="translate(857.76,66.63) scale(1.10062)"/><use href="#t-grass" transform="translate(875.37,66.63) scale(1.10062)"/><use href="#t-grass" transform="translate(892.98,66.63) scale(1.10062)"/><use href="#t-grass" transform="translate(910.59,66.63) scale(1.10062)"/><use href="#t-grass" transform="translate(928.20,66.63) scale(1.10062)"/><use href="#t-grass" transform="translate(945.81,66.63) scale(1.10062)"/><use href="#t-grass" transform="translate(963.42,66.63) scale(1.10062)"/><use href="#t-grass" transform="translate(981.03,66.63) scale(1.10062)"/><use href="#t-grass" transform="translate(998.64,66.63) scale(1.10062)"/><use href="#t-grass" transform="translate(1016.25,66.63) scale(1.10062)"/><use href="#t-grass" transform="translate(1033.86,66.63) scale(1.10062)"/><use href="#t-grass" transform="translate(1051.47,66.63) scale(1.10062)"/><use href="#t-grass" transform="translate(1069.08,66.63) scale(1.10062)"/><use href="#t-grass" transform="translate(1086.69,66.63) scale(1.10062)"/><use href="#t-grass" transform="translate(1104.30,66.63) scale(1.10062)"/><use href="#t-grass" transform="translate(1121.91,66.63) scale(1.10062)"/><use href="#t-grass" transform="translate(1139.52,66.63) scale(1.10062)"/><use href="#t-grass" transform="translate(1157.13,66.63) scale(1.10062)"/><use href="#t-grass" transform="translate(1174.74,66.63) scale(1.10062)"/><use href="#t-stair" transform="translate(752.10,84.24) scale(1.10062)"/><use href="#t-stair" transform="translate(769.71,84.24) scale(1.10062)"/><use href="#t-grass" transform="translate(787.32,84.24) scale(1.10062)"/><use href="#t-grass" transform="translate(804.93,84.24) scale(1.10062)"/><use href="#t-grass" transform="translate(822.54,84.24) scale(1.10062)"/><use href="#t-grass" transform="translate(840.15,84.24) scale(1.10062)"/><use href="#t-grass" transform="translate(857.76,84.24) scale(1.10062)"/><use href="#t-grass" transform="translate(875.37,84.24) scale(1.10062)"/><use href="#t-grass" transform="translate(892.98,84.24) scale(1.10062)"/><use href="#t-grass" transform="translate(910.59,84.24) scale(1.10062)"/><use href="#t-grass" transform="translate(928.20,84.24) scale(1.10062)"/><use href="#t-grass" transform="translate(945.81,84.24) scale(1.10062)"/><use href="#t-grass" transform="translate(963.42,84.24) scale(1.10062)"/><use href="#t-grass" transform="translate(981.03,84.24) scale(1.10062)"/><use href="#t-grass" transform="translate(998.64,84.24) scale(1.10062)"/><use href="#t-grass" transform="translate(1016.25,84.24) scale(1.10062)"/><use href="#t-grass" transform="translate(1033.86,84.24) scale(1.10062)"/><use href="#t-grass" transform="translate(1051.47,84.24) scale(1.10062)"/><use href="#t-grass" transform="translate(1069.08,84.24) scale(1.10062)"/><use href="#t-grass" transform="translate(1086.69,84.24) scale(1.10062)"/><use href="#t-grass" transform="translate(1104.30,84.24) scale(1.10062)"/><use href="#t-grass" transform="translate(1121.91,84.24) scale(1.10062)"/><use href="#t-grass" transform="translate(1139.52,84.24) scale(1.10062)"/><use href="#t-grass" transform="translate(1157.13,84.24) scale(1.10062)"/><use href="#t-grass" transform="translate(1174.74,84.24) scale(1.10062)"/><use href="#t-grass" transform="translate(593.61,101.85) scale(1.10062)"/><use href="#t-grass" transform="translate(611.22,101.85) scale(1.10062)"/><use href="#t-grass" transform="translate(628.83,101.85) scale(1.10062)"/><use href="#t-grass" transform="translate(646.44,101.85) scale(1.10062)"/><use href="#t-grass" transform="translate(664.05,101.85) scale(1.10062)"/><use href="#t-grass" transform="translate(681.66,101.85) scale(1.10062)"/><use href="#t-grass" transform="translate(699.27,101.85) scale(1.10062)"/><use href="#t-grass" transform="translate(716.88,101.85) scale(1.10062)"/><use href="#t-grass" transform="translate(734.49,101.85) scale(1.10062)"/><use href="#t-grass" transform="translate(752.10,101.85) scale(1.10062)"/><use href="#t-grass" transform="translate(769.71,101.85) scale(1.10062)"/><use href="#t-grass" transform="translate(787.32,101.85) scale(1.10062)"/><use href="#t-grass" transform="translate(804.93,101.85) scale(1.10062)"/><use href="#t-grass" transform="translate(822.54,101.85) scale(1.10062)"/><use href="#t-grass" transform="translate(840.15,101.85) scale(1.10062)"/><use href="#t-grass" transform="translate(857.76,101.85) scale(1.10062)"/><use href="#t-grass" transform="translate(875.37,101.85) scale(1.10062)"/><use href="#t-grass" transform="translate(892.98,101.85) scale(1.10062)"/><use href="#t-grass" transform="translate(910.59,101.85) scale(1.10062)"/><use href="#t-grass" transform="translate(928.20,101.85) scale(1.10062)"/><use href="#t-grass" transform="translate(945.81,101.85) scale(1.10062)"/><use href="#t-grass" transform="translate(963.42,101.85) scale(1.10062)"/><use href="#t-grass" transform="translate(981.03,101.85) scale(1.10062)"/><use href="#t-grass" transform="translate(998.64,101.85) scale(1.10062)"/><use href="#t-grass" transform="translate(1016.25,101.85) scale(1.10062)"/><use href="#t-grass" transform="translate(1033.86,101.85) scale(1.10062)"/><use href="#t-grass" transform="translate(1051.47,101.85) scale(1.10062)"/><use href="#t-grass" transform="translate(1069.08,101.85) scale(1.10062)"/><use href="#t-grass" transform="translate(1086.69,101.85) scale(1.10062)"/><use href="#t-grass" transform="translate(1104.30,101.85) scale(1.10062)"/><use href="#t-grass" transform="translate(1121.91,101.85) scale(1.10062)"/><use href="#t-grass" transform="translate(1139.52,101.85) scale(1.10062)"/><use href="#t-grass" transform="translate(1157.13,101.85) scale(1.10062)"/><use href="#t-grass" transform="translate(1174.74,101.85) scale(1.10062)"/><use href="#t-grass" transform="translate(593.61,119.46) scale(1.10062)"/><use href="#t-grass" transform="translate(611.22,119.46) scale(1.10062)"/><use href="#t-grass" transform="translate(628.83,119.46) scale(1.10062)"/><use href="#t-grass" transform="translate(646.44,119.46) scale(1.10062)"/><use href="#t-grass" transform="translate(664.05,119.46) scale(1.10062)"/><use href="#t-grass" transform="translate(681.66,119.46) scale(1.10062)"/><use href="#t-grass" transform="translate(699.27,119.46) scale(1.10062)"/><use href="#t-grass" transform="translate(716.88,119.46) scale(1.10062)"/><use href="#t-grass" transform="translate(734.49,119.46) scale(1.10062)"/><use href="#t-grass" transform="translate(752.10,119.46) scale(1.10062)"/><use href="#t-grass" transform="translate(769.71,119.46) scale(1.10062)"/><use href="#t-grass" transform="translate(787.32,119.46) scale(1.10062)"/><use href="#t-grass" transform="translate(804.93,119.46) scale(1.10062)"/><use href="#t-grass" transform="translate(822.54,119.46) scale(1.10062)"/><use href="#t-grass" transform="translate(840.15,119.46) scale(1.10062)"/><use href="#t-grass" transform="translate(857.76,119.46) scale(1.10062)"/><use href="#t-grass" transform="translate(875.37,119.46) scale(1.10062)"/><use href="#t-grass" transform="translate(892.98,119.46) scale(1.10062)"/><use href="#t-grass" transform="translate(910.59,119.46) scale(1.10062)"/><use href="#t-grass" transform="translate(928.20,119.46) scale(1.10062)"/><use href="#t-grass" transform="translate(945.81,119.46) scale(1.10062)"/><use href="#t-grass" transform="translate(963.42,119.46) scale(1.10062)"/><use href="#t-grass" transform="translate(981.03,119.46) scale(1.10062)"/><use href="#t-grass" transform="translate(998.64,119.46) scale(1.10062)"/><use href="#t-grass" transform="translate(1016.25,119.46) scale(1.10062)"/><use href="#t-grass" transform="translate(1033.86,119.46) scale(1.10062)"/><use href="#t-grass" transform="translate(1051.47,119.46) scale(1.10062)"/><use href="#t-grass" transform="translate(1069.08,119.46) scale(1.10062)"/><use href="#t-grass" transform="translate(1086.69,119.46) scale(1.10062)"/><use href="#t-grass" transform="translate(1104.30,119.46) scale(1.10062)"/><use href="#t-grass" transform="translate(1121.91,119.46) scale(1.10062)"/><use href="#t-grass" transform="translate(1139.52,119.46) scale(1.10062)"/><use href="#t-grass" transform="translate(1157.13,119.46) scale(1.10062)"/><use href="#t-grass" transform="translate(1174.74,119.46) scale(1.10062)"/><use href="#t-grass" transform="translate(593.61,137.07) scale(1.10062)"/><use href="#t-grass" transform="translate(611.22,137.07) scale(1.10062)"/><use href="#t-grass" transform="translate(628.83,137.07) scale(1.10062)"/><use href="#t-grass" transform="translate(646.44,137.07) scale(1.10062)"/><use href="#t-grass" transform="translate(664.05,137.07) scale(1.10062)"/><use href="#t-grass" transform="translate(681.66,137.07) scale(1.10062)"/><use href="#t-grass" transform="translate(699.27,137.07) scale(1.10062)"/><use href="#t-grass" transform="translate(716.88,137.07) scale(1.10062)"/><use href="#t-grass" transform="translate(734.49,137.07) scale(1.10062)"/><use href="#t-grass" transform="translate(752.10,137.07) scale(1.10062)"/><use href="#t-grass" transform="translate(769.71,137.07) scale(1.10062)"/><use href="#t-grass" transform="translate(787.32,137.07) scale(1.10062)"/><use href="#t-grass" transform="translate(804.93,137.07) scale(1.10062)"/><use href="#t-grass" transform="translate(822.54,137.07) scale(1.10062)"/><use href="#t-grass" transform="translate(840.15,137.07) scale(1.10062)"/><use href="#t-grass" transform="translate(857.76,137.07) scale(1.10062)"/><use href="#t-grass" transform="translate(875.37,137.07) scale(1.10062)"/><use href="#t-grass" transform="translate(892.98,137.07) scale(1.10062)"/><use href="#t-grass" transform="translate(910.59,137.07) scale(1.10062)"/><use href="#t-grass" transform="translate(928.20,137.07) scale(1.10062)"/><use href="#t-grass" transform="translate(945.81,137.07) scale(1.10062)"/><use href="#t-grass" transform="translate(963.42,137.07) scale(1.10062)"/><use href="#t-grass" transform="translate(981.03,137.07) scale(1.10062)"/><use href="#t-grass" transform="translate(998.64,137.07) scale(1.10062)"/><use href="#t-grass" transform="translate(1016.25,137.07) scale(1.10062)"/><use href="#t-grass" transform="translate(1033.86,137.07) scale(1.10062)"/><use href="#t-grass" transform="translate(1051.47,137.07) scale(1.10062)"/><use href="#t-grass" transform="translate(1069.08,137.07) scale(1.10062)"/><use href="#t-grass" transform="translate(1086.69,137.07) scale(1.10062)"/><use href="#t-grass" transform="translate(1104.30,137.07) scale(1.10062)"/><use href="#t-grass" transform="translate(1121.91,137.07) scale(1.10062)"/><use href="#t-grass" transform="translate(1139.52,137.07) scale(1.10062)"/><use href="#t-grass" transform="translate(1157.13,137.07) scale(1.10062)"/><use href="#t-grass" transform="translate(1174.74,137.07) scale(1.10062)"/><use href="#t-grass" transform="translate(593.61,154.68) scale(1.10062)"/><use href="#t-grass" transform="translate(611.22,154.68) scale(1.10062)"/><use href="#t-grass" transform="translate(628.83,154.68) scale(1.10062)"/><use href="#t-grass" transform="translate(646.44,154.68) scale(1.10062)"/><use href="#t-grass" transform="translate(664.05,154.68) scale(1.10062)"/><use href="#t-grass" transform="translate(681.66,154.68) scale(1.10062)"/><use href="#t-grass" transform="translate(699.27,154.68) scale(1.10062)"/><use href="#t-grass" transform="translate(716.88,154.68) scale(1.10062)"/><use href="#t-grass" transform="translate(734.49,154.68) scale(1.10062)"/><use href="#t-grass" transform="translate(752.10,154.68) scale(1.10062)"/><use href="#t-grass" transform="translate(769.71,154.68) scale(1.10062)"/><use href="#t-grass" transform="translate(787.32,154.68) scale(1.10062)"/><use href="#t-grass" transform="translate(804.93,154.68) scale(1.10062)"/><use href="#t-grass" transform="translate(822.54,154.68) scale(1.10062)"/><use href="#t-grass" transform="translate(840.15,154.68) scale(1.10062)"/><use href="#t-grass" transform="translate(857.76,154.68) scale(1.10062)"/><use href="#t-grass" transform="translate(875.37,154.68) scale(1.10062)"/><use href="#t-grass" transform="translate(892.98,154.68) scale(1.10062)"/><use href="#t-grass" transform="translate(910.59,154.68) scale(1.10062)"/><use href="#t-grass" transform="translate(928.20,154.68) scale(1.10062)"/><use href="#t-grass" transform="translate(945.81,154.68) scale(1.10062)"/><use href="#t-grass" transform="translate(963.42,154.68) scale(1.10062)"/><use href="#t-grass" transform="translate(981.03,154.68) scale(1.10062)"/><use href="#t-grass" transform="translate(998.64,154.68) scale(1.10062)"/><use href="#t-grass" transform="translate(1016.25,154.68) scale(1.10062)"/><use href="#t-grass" transform="translate(1033.86,154.68) scale(1.10062)"/><use href="#t-grass" transform="translate(1051.47,154.68) scale(1.10062)"/><use href="#t-grass" transform="translate(1069.08,154.68) scale(1.10062)"/><use href="#t-grass" transform="translate(1086.69,154.68) scale(1.10062)"/><use href="#t-grass" transform="translate(1104.30,154.68) scale(1.10062)"/><use href="#t-grass" transform="translate(1121.91,154.68) scale(1.10062)"/><use href="#t-grass" transform="translate(1139.52,154.68) scale(1.10062)"/><use href="#t-grass" transform="translate(1157.13,154.68) scale(1.10062)"/><use href="#t-grass" transform="translate(1174.74,154.68) scale(1.10062)"/><use href="#t-grass" transform="translate(593.61,172.29) scale(1.10062)"/><use href="#t-grass" transform="translate(611.22,172.29) scale(1.10062)"/><use href="#t-grass" transform="translate(628.83,172.29) scale(1.10062)"/><use href="#t-grass" transform="translate(646.44,172.29) scale(1.10062)"/><use href="#t-grass" transform="translate(664.05,172.29) scale(1.10062)"/><use href="#t-grass" transform="translate(681.66,172.29) scale(1.10062)"/><use href="#t-grass" transform="translate(699.27,172.29) scale(1.10062)"/><use href="#t-grass" transform="translate(716.88,172.29) scale(1.10062)"/><use href="#t-grass" transform="translate(734.49,172.29) scale(1.10062)"/><use href="#t-grass" transform="translate(752.10,172.29) scale(1.10062)"/><use href="#t-grass" transform="translate(769.71,172.29) scale(1.10062)"/><use href="#t-grass" transform="translate(787.32,172.29) scale(1.10062)"/><use href="#t-grass" transform="translate(804.93,172.29) scale(1.10062)"/><use href="#t-grass" transform="translate(822.54,172.29) scale(1.10062)"/><use href="#t-grass" transform="translate(840.15,172.29) scale(1.10062)"/><use href="#t-grass" transform="translate(857.76,172.29) scale(1.10062)"/><use href="#t-grass" transform="translate(875.37,172.29) scale(1.10062)"/><use href="#t-grass" transform="translate(892.98,172.29) scale(1.10062)"/><use href="#t-grass" transform="translate(910.59,172.29) scale(1.10062)"/><use href="#t-grass" transform="translate(928.20,172.29) scale(1.10062)"/><use href="#t-grass" transform="translate(945.81,172.29) scale(1.10062)"/><use href="#t-grass" transform="translate(963.42,172.29) scale(1.10062)"/><use href="#t-grass" transform="translate(981.03,172.29) scale(1.10062)"/><use href="#t-grass" transform="translate(998.64,172.29) scale(1.10062)"/><use href="#t-grass" transform="translate(1016.25,172.29) scale(1.10062)"/><use href="#t-grass" transform="translate(1033.86,172.29) scale(1.10062)"/><use href="#t-grass" transform="translate(1051.47,172.29) scale(1.10062)"/><use href="#t-grass" transform="translate(1069.08,172.29) scale(1.10062)"/><use href="#t-grass" transform="translate(1086.69,172.29) scale(1.10062)"/><use href="#t-grass" transform="translate(1104.30,172.29) scale(1.10062)"/><use href="#t-grass" transform="translate(1121.91,172.29) scale(1.10062)"/><use href="#t-grass" transform="translate(1139.52,172.29) scale(1.10062)"/><use href="#t-grass" transform="translate(1157.13,172.29) scale(1.10062)"/><use href="#t-grass" transform="translate(1174.74,172.29) scale(1.10062)"/><use href="#t-grass" transform="translate(593.61,189.90) scale(1.10062)"/><use href="#t-grass" transform="translate(611.22,189.90) scale(1.10062)"/><use href="#t-grass" transform="translate(628.83,189.90) scale(1.10062)"/><use href="#t-grass" transform="translate(646.44,189.90) scale(1.10062)"/><use href="#t-grass" transform="translate(664.05,189.90) scale(1.10062)"/><use href="#t-grass" transform="translate(681.66,189.90) scale(1.10062)"/><use href="#t-grass" transform="translate(699.27,189.90) scale(1.10062)"/><use href="#t-grass" transform="translate(716.88,189.90) scale(1.10062)"/><use href="#t-grass" transform="translate(734.49,189.90) scale(1.10062)"/><use href="#t-grass" transform="translate(752.10,189.90) scale(1.10062)"/><use href="#t-grass" transform="translate(769.71,189.90) scale(1.10062)"/><use href="#t-grass" transform="translate(787.32,189.90) scale(1.10062)"/><use href="#t-grass" transform="translate(804.93,189.90) scale(1.10062)"/><use href="#t-grass" transform="translate(822.54,189.90) scale(1.10062)"/><use href="#t-grass" transform="translate(840.15,189.90) scale(1.10062)"/><use href="#t-grass" transform="translate(857.76,189.90) scale(1.10062)"/><use href="#t-grass" transform="translate(875.37,189.90) scale(1.10062)"/><use href="#t-grass" transform="translate(892.98,189.90) scale(1.10062)"/><use href="#t-grass" transform="translate(910.59,189.90) scale(1.10062)"/><use href="#t-grass" transform="translate(928.20,189.90) scale(1.10062)"/><use href="#t-grass" transform="translate(945.81,189.90) scale(1.10062)"/><use href="#t-grass" transform="translate(963.42,189.90) scale(1.10062)"/><use href="#t-grass" transform="translate(981.03,189.90) scale(1.10062)"/><use href="#t-grass" transform="translate(998.64,189.90) scale(1.10062)"/><use href="#t-grass" transform="translate(1016.25,189.90) scale(1.10062)"/><use href="#t-grass" transform="translate(1033.86,189.90) scale(1.10062)"/><use href="#t-grass" transform="translate(1051.47,189.90) scale(1.10062)"/><use href="#t-grass" transform="translate(1069.08,189.90) scale(1.10062)"/><use href="#t-grass" transform="translate(1086.69,189.90) scale(1.10062)"/><use href="#t-grass" transform="translate(1104.30,189.90) scale(1.10062)"/><use href="#t-grass" transform="translate(1121.91,189.90) scale(1.10062)"/><use href="#t-grass" transform="translate(1139.52,189.90) scale(1.10062)"/><use href="#t-grass" transform="translate(1157.13,189.90) scale(1.10062)"/><use href="#t-grass" transform="translate(1174.74,189.90) scale(1.10062)"/><use href="#t-grass" transform="translate(593.61,207.51) scale(1.10062)"/><use href="#t-grass" transform="translate(611.22,207.51) scale(1.10062)"/><use href="#t-grass" transform="translate(628.83,207.51) scale(1.10062)"/><use href="#t-grass" transform="translate(646.44,207.51) scale(1.10062)"/><use href="#t-grass" transform="translate(664.05,207.51) scale(1.10062)"/><use href="#t-grass" transform="translate(681.66,207.51) scale(1.10062)"/><use href="#t-grass" transform="translate(699.27,207.51) scale(1.10062)"/><use href="#t-grass" transform="translate(716.88,207.51) scale(1.10062)"/><use href="#t-grass" transform="translate(734.49,207.51) scale(1.10062)"/><use href="#t-grass" transform="translate(752.10,207.51) scale(1.10062)"/><use href="#t-grass" transform="translate(769.71,207.51) scale(1.10062)"/><use href="#t-grass" transform="translate(787.32,207.51) scale(1.10062)"/><use href="#t-grass" transform="translate(804.93,207.51) scale(1.10062)"/><use href="#t-grass" transform="translate(822.54,207.51) scale(1.10062)"/><use href="#t-grass" transform="translate(840.15,207.51) scale(1.10062)"/><use href="#t-grass" transform="translate(857.76,207.51) scale(1.10062)"/><use href="#t-grass" transform="translate(875.37,207.51) scale(1.10062)"/><use href="#t-grass" transform="translate(892.98,207.51) scale(1.10062)"/><use href="#t-grass" transform="translate(910.59,207.51) scale(1.10062)"/><use href="#t-grass" transform="translate(928.20,207.51) scale(1.10062)"/><use href="#t-grass" transform="translate(945.81,207.51) scale(1.10062)"/><use href="#t-grass" transform="translate(963.42,207.51) scale(1.10062)"/><use href="#t-grass" transform="translate(981.03,207.51) scale(1.10062)"/><use href="#t-grass" transform="translate(998.64,207.51) scale(1.10062)"/><use href="#t-grass" transform="translate(1016.25,207.51) scale(1.10062)"/><use href="#t-grass" transform="translate(1033.86,207.51) scale(1.10062)"/><use href="#t-grass" transform="translate(1051.47,207.51) scale(1.10062)"/><use href="#t-grass" transform="translate(1069.08,207.51) scale(1.10062)"/><use href="#t-grass" transform="translate(1086.69,207.51) scale(1.10062)"/><use href="#t-grass" transform="translate(1104.30,207.51) scale(1.10062)"/><use href="#t-grass" transform="translate(1121.91,207.51) scale(1.10062)"/><use href="#t-grass" transform="translate(1139.52,207.51) scale(1.10062)"/><use href="#t-grass" transform="translate(1157.13,207.51) scale(1.10062)"/><use href="#t-grass" transform="translate(1174.74,207.51) scale(1.10062)"/><use href="#t-grass" transform="translate(593.61,225.12) scale(1.10062)"/><use href="#t-grass" transform="translate(611.22,225.12) scale(1.10062)"/><use href="#t-grass" transform="translate(628.83,225.12) scale(1.10062)"/><use href="#t-grass" transform="translate(646.44,225.12) scale(1.10062)"/><use href="#t-grass" transform="translate(664.05,225.12) scale(1.10062)"/><use href="#t-grass" transform="translate(681.66,225.12) scale(1.10062)"/><use href="#t-grass" transform="translate(699.27,225.12) scale(1.10062)"/><use href="#t-grass" transform="translate(716.88,225.12) scale(1.10062)"/><use href="#t-grass" transform="translate(734.49,225.12) scale(1.10062)"/><use href="#t-grass" transform="translate(752.10,225.12) scale(1.10062)"/><use href="#t-grass" transform="translate(769.71,225.12) scale(1.10062)"/><use href="#t-grass" transform="translate(787.32,225.12) scale(1.10062)"/><use href="#t-grass" transform="translate(804.93,225.12) scale(1.10062)"/><use href="#t-grass" transform="translate(822.54,225.12) scale(1.10062)"/><use href="#t-grass" transform="translate(840.15,225.12) scale(1.10062)"/><use href="#t-grass" transform="translate(857.76,225.12) scale(1.10062)"/><use href="#t-grass" transform="translate(875.37,225.12) scale(1.10062)"/><use href="#t-grass" transform="translate(892.98,225.12) scale(1.10062)"/><use href="#t-grass" transform="translate(910.59,225.12) scale(1.10062)"/><use href="#t-grass" transform="translate(928.20,225.12) scale(1.10062)"/><use href="#t-grass" transform="translate(945.81,225.12) scale(1.10062)"/><use href="#t-grass" transform="translate(963.42,225.12) scale(1.10062)"/><use href="#t-grass" transform="translate(981.03,225.12) scale(1.10062)"/><use href="#t-grass" transform="translate(998.64,225.12) scale(1.10062)"/><use href="#t-grass" transform="translate(1016.25,225.12) scale(1.10062)"/><use href="#t-grass" transform="translate(1033.86,225.12) scale(1.10062)"/><use href="#t-grass" transform="translate(1051.47,225.12) scale(1.10062)"/><use href="#t-grass" transform="translate(1069.08,225.12) scale(1.10062)"/><use href="#t-grass" transform="translate(1086.69,225.12) scale(1.10062)"/><use href="#t-grass" transform="translate(1104.30,225.12) scale(1.10062)"/><use href="#t-grass" transform="translate(1121.91,225.12) scale(1.10062)"/><use href="#t-grass" transform="translate(1139.52,225.12) scale(1.10062)"/><use href="#t-grass" transform="translate(1157.13,225.12) scale(1.10062)"/><use href="#t-grass" transform="translate(1174.74,225.12) scale(1.10062)"/><use href="#t-grass" transform="translate(593.61,242.73) scale(1.10062)"/><use href="#t-grass" transform="translate(611.22,242.73) scale(1.10062)"/><use href="#t-grass" transform="translate(628.83,242.73) scale(1.10062)"/><use href="#t-grass" transform="translate(646.44,242.73) scale(1.10062)"/><use href="#t-grass" transform="translate(664.05,242.73) scale(1.10062)"/><use href="#t-grass" transform="translate(681.66,242.73) scale(1.10062)"/><use href="#t-grass" transform="translate(699.27,242.73) scale(1.10062)"/><use href="#t-grass" transform="translate(716.88,242.73) scale(1.10062)"/><use href="#t-grass" transform="translate(734.49,242.73) scale(1.10062)"/><use href="#t-grass" transform="translate(752.10,242.73) scale(1.10062)"/><use href="#t-grass" transform="translate(769.71,242.73) scale(1.10062)"/><use href="#t-grass" transform="translate(787.32,242.73) scale(1.10062)"/><use href="#t-grass" transform="translate(804.93,242.73) scale(1.10062)"/><use href="#t-grass" transform="translate(822.54,242.73) scale(1.10062)"/><use href="#t-grass" transform="translate(840.15,242.73) scale(1.10062)"/><use href="#t-grass" transform="translate(857.76,242.73) scale(1.10062)"/><use href="#t-grass" transform="translate(875.37,242.73) scale(1.10062)"/><use href="#t-grass" transform="translate(892.98,242.73) scale(1.10062)"/><use href="#t-grass" transform="translate(910.59,242.73) scale(1.10062)"/><use href="#t-grass" transform="translate(928.20,242.73) scale(1.10062)"/><use href="#t-grass" transform="translate(945.81,242.73) scale(1.10062)"/><use href="#t-grass" transform="translate(963.42,242.73) scale(1.10062)"/><use href="#t-grass" transform="translate(981.03,242.73) scale(1.10062)"/><use href="#t-grass" transform="translate(998.64,242.73) scale(1.10062)"/><use href="#t-grass" transform="translate(1016.25,242.73) scale(1.10062)"/><use href="#t-grass" transform="translate(1033.86,242.73) scale(1.10062)"/><use href="#t-grass" transform="translate(1051.47,242.73) scale(1.10062)"/><use href="#t-grass" transform="translate(1069.08,242.73) scale(1.10062)"/><use href="#t-grass" transform="translate(1086.69,242.73) scale(1.10062)"/><use href="#t-grass" transform="translate(1104.30,242.73) scale(1.10062)"/><use href="#t-grass" transform="translate(1121.91,242.73) scale(1.10062)"/><use href="#t-grass" transform="translate(1139.52,242.73) scale(1.10062)"/><use href="#t-grass" transform="translate(1157.13,242.73) scale(1.10062)"/><use href="#t-grass" transform="translate(1174.74,242.73) scale(1.10062)"/><use href="#t-grass" transform="translate(593.61,260.34) scale(1.10062)"/><use href="#t-grass" transform="translate(611.22,260.34) scale(1.10062)"/><use href="#t-grass" transform="translate(628.83,260.34) scale(1.10062)"/><use href="#t-grass" transform="translate(646.44,260.34) scale(1.10062)"/><use href="#t-grass" transform="translate(664.05,260.34) scale(1.10062)"/><use href="#t-grass" transform="translate(681.66,260.34) scale(1.10062)"/><use href="#t-grass" transform="translate(699.27,260.34) scale(1.10062)"/><use href="#t-grass" transform="translate(716.88,260.34) scale(1.10062)"/><use href="#t-grass" transform="translate(734.49,260.34) scale(1.10062)"/><use href="#t-grass" transform="translate(752.10,260.34) scale(1.10062)"/><use href="#t-grass" transform="translate(769.71,260.34) scale(1.10062)"/><use href="#t-grass" transform="translate(787.32,260.34) scale(1.10062)"/><use href="#t-grass" transform="translate(804.93,260.34) scale(1.10062)"/><use href="#t-grass" transform="translate(822.54,260.34) scale(1.10062)"/><use href="#t-grass" transform="translate(840.15,260.34) scale(1.10062)"/><use href="#t-grass" transform="translate(857.76,260.34) scale(1.10062)"/><use href="#t-grass" transform="translate(875.37,260.34) scale(1.10062)"/><use href="#t-grass" transform="translate(892.98,260.34) scale(1.10062)"/><use href="#t-grass" transform="translate(910.59,260.34) scale(1.10062)"/><use href="#t-grass" transform="translate(928.20,260.34) scale(1.10062)"/><use href="#t-grass" transform="translate(945.81,260.34) scale(1.10062)"/><use href="#t-grass" transform="translate(963.42,260.34) scale(1.10062)"/><use href="#t-grass" transform="translate(981.03,260.34) scale(1.10062)"/><use href="#t-grass" transform="translate(998.64,260.34) scale(1.10062)"/><use href="#t-grass" transform="translate(1016.25,260.34) scale(1.10062)"/><use href="#t-grass" transform="translate(1033.86,260.34) scale(1.10062)"/><use href="#t-grass" transform="translate(1051.47,260.34) scale(1.10062)"/><use href="#t-grass" transform="translate(1069.08,260.34) scale(1.10062)"/><use href="#t-grass" transform="translate(1086.69,260.34) scale(1.10062)"/><use href="#t-grass" transform="translate(1104.30,260.34) scale(1.10062)"/><use href="#t-grass" transform="translate(1121.91,260.34) scale(1.10062)"/><use href="#t-grass" transform="translate(1139.52,260.34) scale(1.10062)"/><use href="#t-grass" transform="translate(1157.13,260.34) scale(1.10062)"/><use href="#t-grass" transform="translate(1174.74,260.34) scale(1.10062)"/><use href="#t-grass" transform="translate(593.61,277.95) scale(1.10062)"/><use href="#t-grass" transform="translate(611.22,277.95) scale(1.10062)"/><use href="#t-grass" transform="translate(628.83,277.95) scale(1.10062)"/><use href="#t-grass" transform="translate(646.44,277.95) scale(1.10062)"/><use href="#t-grass" transform="translate(664.05,277.95) scale(1.10062)"/><use href="#t-grass" transform="translate(681.66,277.95) scale(1.10062)"/><use href="#t-grass" transform="translate(699.27,277.95) scale(1.10062)"/><use href="#t-grass" transform="translate(716.88,277.95) scale(1.10062)"/><use href="#t-grass" transform="translate(734.49,277.95) scale(1.10062)"/><use href="#t-grass" transform="translate(752.10,277.95) scale(1.10062)"/><use href="#t-grass" transform="translate(769.71,277.95) scale(1.10062)"/><use href="#t-grass" transform="translate(787.32,277.95) scale(1.10062)"/><use href="#t-grass" transform="translate(804.93,277.95) scale(1.10062)"/><use href="#t-grass" transform="translate(822.54,277.95) scale(1.10062)"/><use href="#t-grass" transform="translate(840.15,277.95) scale(1.10062)"/><use href="#t-grass" transform="translate(857.76,277.95) scale(1.10062)"/><use href="#t-grass" transform="translate(875.37,277.95) scale(1.10062)"/><use href="#t-grass" transform="translate(892.98,277.95) scale(1.10062)"/><use href="#t-grass" transform="translate(910.59,277.95) scale(1.10062)"/><use href="#t-grass" transform="translate(928.20,277.95) scale(1.10062)"/><use href="#t-grass" transform="translate(945.81,277.95) scale(1.10062)"/><use href="#t-grass" transform="translate(963.42,277.95) scale(1.10062)"/><use href="#t-grass" transform="translate(981.03,277.95) scale(1.10062)"/><use href="#t-grass" transform="translate(998.64,277.95) scale(1.10062)"/><use href="#t-grass" transform="translate(1016.25,277.95) scale(1.10062)"/><use href="#t-grass" transform="translate(1033.86,277.95) scale(1.10062)"/><use href="#t-grass" transform="translate(1051.47,277.95) scale(1.10062)"/><use href="#t-grass" transform="translate(1069.08,277.95) scale(1.10062)"/><use href="#t-grass" transform="translate(1086.69,277.95) scale(1.10062)"/><use href="#t-grass" transform="translate(1104.30,277.95) scale(1.10062)"/><use href="#t-grass" transform="translate(1121.91,277.95) scale(1.10062)"/><use href="#t-grass" transform="translate(1139.52,277.95) scale(1.10062)"/><use href="#t-grass" transform="translate(1157.13,277.95) scale(1.10062)"/><use href="#t-grass" transform="translate(1174.74,277.95) scale(1.10062)"/><use href="#t-grass" transform="translate(593.61,295.56) scale(1.10062)"/><use href="#t-grass" transform="translate(611.22,295.56) scale(1.10062)"/><use href="#t-grass" transform="translate(628.83,295.56) scale(1.10062)"/><use href="#t-grass" transform="translate(646.44,295.56) scale(1.10062)"/><use href="#t-grass" transform="translate(664.05,295.56) scale(1.10062)"/><use href="#t-grass" transform="translate(681.66,295.56) scale(1.10062)"/><use href="#t-grass" transform="translate(699.27,295.56) scale(1.10062)"/><use href="#t-grass" transform="translate(716.88,295.56) scale(1.10062)"/><use href="#t-grass" transform="translate(734.49,295.56) scale(1.10062)"/><use href="#t-grass" transform="translate(752.10,295.56) scale(1.10062)"/><use href="#t-grass" transform="translate(769.71,295.56) scale(1.10062)"/><use href="#t-grass" transform="translate(787.32,295.56) scale(1.10062)"/><use href="#t-grass" transform="translate(804.93,295.56) scale(1.10062)"/><use href="#t-grass" transform="translate(822.54,295.56) scale(1.10062)"/><use href="#t-grass" transform="translate(840.15,295.56) scale(1.10062)"/><use href="#t-grass" transform="translate(857.76,295.56) scale(1.10062)"/><use href="#t-grass" transform="translate(875.37,295.56) scale(1.10062)"/><use href="#t-grass" transform="translate(892.98,295.56) scale(1.10062)"/><use href="#t-grass" transform="translate(910.59,295.56) scale(1.10062)"/><use href="#t-grass" transform="translate(928.20,295.56) scale(1.10062)"/><use href="#t-grass" transform="translate(945.81,295.56) scale(1.10062)"/><use href="#t-grass" transform="translate(963.42,295.56) scale(1.10062)"/><use href="#t-grass" transform="translate(981.03,295.56) scale(1.10062)"/><use href="#t-grass" transform="translate(998.64,295.56) scale(1.10062)"/><use href="#t-grass" transform="translate(1016.25,295.56) scale(1.10062)"/><use href="#t-grass" transform="translate(1033.86,295.56) scale(1.10062)"/><use href="#t-grass" transform="translate(1051.47,295.56) scale(1.10062)"/><use href="#t-grass" transform="translate(1069.08,295.56) scale(1.10062)"/><use href="#t-grass" transform="translate(1086.69,295.56) scale(1.10062)"/><use href="#t-grass" transform="translate(1104.30,295.56) scale(1.10062)"/><use href="#t-grass" transform="translate(1121.91,295.56) scale(1.10062)"/><use href="#t-grass" transform="translate(1139.52,295.56) scale(1.10062)"/><use href="#t-grass" transform="translate(1157.13,295.56) scale(1.10062)"/><use href="#t-grass" transform="translate(1174.74,295.56) scale(1.10062)"/><use href="#t-grass" transform="translate(593.61,313.17) scale(1.10062)"/><use href="#t-grass" transform="translate(611.22,313.17) scale(1.10062)"/><use href="#t-grass" transform="translate(628.83,313.17) scale(1.10062)"/><use href="#t-grass" transform="translate(646.44,313.17) scale(1.10062)"/><use href="#t-grass" transform="translate(664.05,313.17) scale(1.10062)"/><use href="#t-grass" transform="translate(681.66,313.17) scale(1.10062)"/><use href="#t-grass" transform="translate(699.27,313.17) scale(1.10062)"/><use href="#t-grass" transform="translate(716.88,313.17) scale(1.10062)"/><use href="#t-grass" transform="translate(734.49,313.17) scale(1.10062)"/><use href="#t-grass" transform="translate(752.10,313.17) scale(1.10062)"/><use href="#t-grass" transform="translate(769.71,313.17) scale(1.10062)"/><use href="#t-grass" transform="translate(787.32,313.17) scale(1.10062)"/><use href="#t-grass" transform="translate(804.93,313.17) scale(1.10062)"/><use href="#t-grass" transform="translate(822.54,313.17) scale(1.10062)"/><use href="#t-grass" transform="translate(840.15,313.17) scale(1.10062)"/><use href="#t-grass" transform="translate(857.76,313.17) scale(1.10062)"/><use href="#t-grass" transform="translate(875.37,313.17) scale(1.10062)"/><use href="#t-grass" transform="translate(892.98,313.17) scale(1.10062)"/><use href="#t-grass" transform="translate(910.59,313.17) scale(1.10062)"/><use href="#t-grass" transform="translate(928.20,313.17) scale(1.10062)"/><use href="#t-grass" transform="translate(945.81,313.17) scale(1.10062)"/><use href="#t-grass" transform="translate(963.42,313.17) scale(1.10062)"/><use href="#t-grass" transform="translate(981.03,313.17) scale(1.10062)"/><use href="#t-grass" transform="translate(998.64,313.17) scale(1.10062)"/><use href="#t-grass" transform="translate(1016.25,313.17) scale(1.10062)"/><use href="#t-grass" transform="translate(1033.86,313.17) scale(1.10062)"/><use href="#t-grass" transform="translate(1051.47,313.17) scale(1.10062)"/><use href="#t-grass" transform="translate(1069.08,313.17) scale(1.10062)"/><use href="#t-grass" transform="translate(1086.69,313.17) scale(1.10062)"/><use href="#t-grass" transform="translate(1104.30,313.17) scale(1.10062)"/><use href="#t-grass" transform="translate(1121.91,313.17) scale(1.10062)"/><use href="#t-grass" transform="translate(1139.52,313.17) scale(1.10062)"/><use href="#t-grass" transform="translate(1157.13,313.17) scale(1.10062)"/><use href="#t-grass" transform="translate(1174.74,313.17) scale(1.10062)"/><use href="#t-grass" transform="translate(593.61,330.78) scale(1.10062)"/><use href="#t-grass" transform="translate(611.22,330.78) scale(1.10062)"/><use href="#t-grass" transform="translate(628.83,330.78) scale(1.10062)"/><use href="#t-grass" transform="translate(646.44,330.78) scale(1.10062)"/><use href="#t-grass" transform="translate(664.05,330.78) scale(1.10062)"/><use href="#t-grass" transform="translate(681.66,330.78) scale(1.10062)"/><use href="#t-grass" transform="translate(699.27,330.78) scale(1.10062)"/><use href="#t-grass" transform="translate(716.88,330.78) scale(1.10062)"/><use href="#t-grass" transform="translate(734.49,330.78) scale(1.10062)"/><use href="#t-grass" transform="translate(752.10,330.78) scale(1.10062)"/><use href="#t-grass" transform="translate(769.71,330.78) scale(1.10062)"/><use href="#t-grass" transform="translate(787.32,330.78) scale(1.10062)"/><use href="#t-grass" transform="translate(804.93,330.78) scale(1.10062)"/><use href="#t-grass" transform="translate(822.54,330.78) scale(1.10062)"/><use href="#t-grass" transform="translate(840.15,330.78) scale(1.10062)"/><use href="#t-grass" transform="translate(857.76,330.78) scale(1.10062)"/><use href="#t-grass" transform="translate(875.37,330.78) scale(1.10062)"/><use href="#t-grass" transform="translate(892.98,330.78) scale(1.10062)"/><use href="#t-grass" transform="translate(910.59,330.78) scale(1.10062)"/><use href="#t-grass" transform="translate(928.20,330.78) scale(1.10062)"/><use href="#t-grass" transform="translate(945.81,330.78) scale(1.10062)"/><use href="#t-grass" transform="translate(963.42,330.78) scale(1.10062)"/><use href="#t-grass" transform="translate(981.03,330.78) scale(1.10062)"/><use href="#t-grass" transform="translate(998.64,330.78) scale(1.10062)"/><use href="#t-grass" transform="translate(1016.25,330.78) scale(1.10062)"/><use href="#t-grass" transform="translate(1033.86,330.78) scale(1.10062)"/><use href="#t-grass" transform="translate(1051.47,330.78) scale(1.10062)"/><use href="#t-grass" transform="translate(1069.08,330.78) scale(1.10062)"/><use href="#t-grass" transform="translate(1086.69,330.78) scale(1.10062)"/><use href="#t-grass" transform="translate(1104.30,330.78) scale(1.10062)"/><use href="#t-grass" transform="translate(1121.91,330.78) scale(1.10062)"/><use href="#t-grass" transform="translate(1139.52,330.78) scale(1.10062)"/><use href="#t-grass" transform="translate(1157.13,330.78) scale(1.10062)"/><use href="#t-grass" transform="translate(1174.74,330.78) scale(1.10062)"/><use href="#t-grass" transform="translate(593.61,348.39) scale(1.10062)"/><use href="#t-grass" transform="translate(611.22,348.39) scale(1.10062)"/><use href="#t-grass" transform="translate(628.83,348.39) scale(1.10062)"/><use href="#t-grass" transform="translate(646.44,348.39) scale(1.10062)"/><use href="#t-grass" transform="translate(664.05,348.39) scale(1.10062)"/><use href="#t-grass" transform="translate(681.66,348.39) scale(1.10062)"/><use href="#t-grass" transform="translate(699.27,348.39) scale(1.10062)"/><use href="#t-grass" transform="translate(716.88,348.39) scale(1.10062)"/><use href="#t-grass" transform="translate(734.49,348.39) scale(1.10062)"/><use href="#t-grass" transform="translate(752.10,348.39) scale(1.10062)"/><use href="#t-grass" transform="translate(769.71,348.39) scale(1.10062)"/><use href="#t-grass" transform="translate(787.32,348.39) scale(1.10062)"/><use href="#t-grass" transform="translate(804.93,348.39) scale(1.10062)"/><use href="#t-grass" transform="translate(822.54,348.39) scale(1.10062)"/><use href="#t-grass" transform="translate(840.15,348.39) scale(1.10062)"/><use href="#t-grass" transform="translate(857.76,348.39) scale(1.10062)"/><use href="#t-grass" transform="translate(875.37,348.39) scale(1.10062)"/><use href="#t-grass" transform="translate(892.98,348.39) scale(1.10062)"/><use href="#t-grass" transform="translate(910.59,348.39) scale(1.10062)"/><use href="#t-grass" transform="translate(928.20,348.39) scale(1.10062)"/><use href="#t-grass" transform="translate(945.81,348.39) scale(1.10062)"/><use href="#t-grass" transform="translate(963.42,348.39) scale(1.10062)"/><use href="#t-grass" transform="translate(981.03,348.39) scale(1.10062)"/><use href="#t-grass" transform="translate(998.64,348.39) scale(1.10062)"/><use href="#t-grass" transform="translate(1016.25,348.39) scale(1.10062)"/><use href="#t-grass" transform="translate(1033.86,348.39) scale(1.10062)"/><use href="#t-grass" transform="translate(1051.47,348.39) scale(1.10062)"/><use href="#t-grass" transform="translate(1069.08,348.39) scale(1.10062)"/><use href="#t-grass" transform="translate(1086.69,348.39) scale(1.10062)"/><use href="#t-grass" transform="translate(1104.30,348.39) scale(1.10062)"/><use href="#t-grass" transform="translate(1121.91,348.39) scale(1.10062)"/><use href="#t-grass" transform="translate(1139.52,348.39) scale(1.10062)"/><use href="#t-grass" transform="translate(1157.13,348.39) scale(1.10062)"/><use href="#t-grass" transform="translate(1174.74,348.39) scale(1.10062)"/><use href="#t-grass" transform="translate(593.61,366.00) scale(1.10062)"/><use href="#t-grass" transform="translate(611.22,366.00) scale(1.10062)"/><use href="#t-grass" transform="translate(628.83,366.00) scale(1.10062)"/><use href="#t-grass" transform="translate(646.44,366.00) scale(1.10062)"/><use href="#t-grass" transform="translate(664.05,366.00) scale(1.10062)"/><use href="#t-grass" transform="translate(681.66,366.00) scale(1.10062)"/><use href="#t-grass" transform="translate(699.27,366.00) scale(1.10062)"/><use href="#t-grass" transform="translate(716.88,366.00) scale(1.10062)"/><use href="#t-grass" transform="translate(734.49,366.00) scale(1.10062)"/><use href="#t-grass" transform="translate(752.10,366.00) scale(1.10062)"/><use href="#t-grass" transform="translate(769.71,366.00) scale(1.10062)"/><use href="#t-grass" transform="translate(787.32,366.00) scale(1.10062)"/><use href="#t-grass" transform="translate(804.93,366.00) scale(1.10062)"/><use href="#t-grass" transform="translate(822.54,366.00) scale(1.10062)"/><use href="#t-grass" transform="translate(840.15,366.00) scale(1.10062)"/><use href="#t-grass" transform="translate(857.76,366.00) scale(1.10062)"/><use href="#t-grass" transform="translate(875.37,366.00) scale(1.10062)"/><use href="#t-grass" transform="translate(892.98,366.00) scale(1.10062)"/><use href="#t-grass" transform="translate(910.59,366.00) scale(1.10062)"/><use href="#t-grass" transform="translate(928.20,366.00) scale(1.10062)"/><use href="#t-grass" transform="translate(945.81,366.00) scale(1.10062)"/><use href="#t-grass" transform="translate(963.42,366.00) scale(1.10062)"/><use href="#t-grass" transform="translate(981.03,366.00) scale(1.10062)"/><use href="#t-grass" transform="translate(998.64,366.00) scale(1.10062)"/><use href="#t-grass" transform="translate(1016.25,366.00) scale(1.10062)"/><use href="#t-grass" transform="translate(1033.86,366.00) scale(1.10062)"/><use href="#t-grass" transform="translate(1051.47,366.00) scale(1.10062)"/><use href="#t-grass" transform="translate(1069.08,366.00) scale(1.10062)"/><use href="#t-grass" transform="translate(1086.69,366.00) scale(1.10062)"/><use href="#t-grass" transform="translate(1104.30,366.00) scale(1.10062)"/><use href="#t-grass" transform="translate(1121.91,366.00) scale(1.10062)"/><use href="#t-grass" transform="translate(1139.52,366.00) scale(1.10062)"/><use href="#t-grass" transform="translate(1157.13,366.00) scale(1.10062)"/><use href="#t-grass" transform="translate(1174.74,366.00) scale(1.10062)"/><use href="#t-tuft" transform="translate(646.44,119.46) scale(1.10062)"/><use href="#t-tuft" transform="translate(716.88,119.46) scale(1.10062)"/><use href="#t-tuft" transform="translate(963.42,119.46) scale(1.10062)"/><use href="#t-tuft" transform="translate(840.15,154.68) scale(1.10062)"/><use href="#t-tuft" transform="translate(928.20,154.68) scale(1.10062)"/><use href="#t-tuft" transform="translate(822.54,189.90) scale(1.10062)"/><use href="#t-tuft" transform="translate(699.27,207.51) scale(1.10062)"/><use href="#t-tuft" transform="translate(928.20,207.51) scale(1.10062)"/><use href="#t-tuft" transform="translate(646.44,242.73) scale(1.10062)"/><use href="#t-tuft" transform="translate(804.93,242.73) scale(1.10062)"/><use href="#t-tuft" transform="translate(910.59,242.73) scale(1.10062)"/><use href="#t-tuft" transform="translate(981.03,242.73) scale(1.10062)"/><use href="#t-tuft" transform="translate(1104.30,260.34) scale(1.10062)"/><use href="#t-tuft" transform="translate(804.93,295.56) scale(1.10062)"/><use href="#t-tuft" transform="translate(840.15,313.17) scale(1.10062)"/><use href="#t-tuft" transform="translate(1157.13,313.17) scale(1.10062)"/><use href="#t-tuft" transform="translate(611.22,330.78) scale(1.10062)"/><use href="#t-tuft" transform="translate(734.49,330.78) scale(1.10062)"/><use href="#t-tuft" transform="translate(840.15,330.78) scale(1.10062)"/><use href="#t-tuft" transform="translate(945.81,330.78) scale(1.10062)"/><use href="#t-tuft" transform="translate(1016.25,348.39) scale(1.10062)"/><use href="#t-top" transform="translate(716.88,137.07) scale(1.10062)"/><use href="#t-top" transform="translate(892.98,66.63) scale(1.10062)"/><use href="#t-top" transform="translate(1033.86,84.24) scale(1.10062)"/><use href="#t-top" transform="translate(981.03,154.68) scale(1.10062)"/><use href="#t-top" transform="translate(1051.47,225.12) scale(1.10062)"/><use href="#t-top" transform="translate(769.71,295.56) scale(1.10062)"/><use href="#t-top" transform="translate(1121.91,313.17) scale(1.10062)"/><g opacity="0.35" filter="url(#oblur)"><rect x="572.40" y="10.20" width="641.16" height="24.81" rx="1.5" fill="#ff6a0a"/><rect x="572.40" y="380.01" width="641.16" height="24.81" rx="1.5" fill="#ff6a0a"/><rect x="572.40" y="10.20" width="24.81" height="394.62" rx="1.5" fill="#ff6a0a"/><rect x="1188.75" y="10.20" width="24.81" height="394.62" rx="1.5" fill="#ff6a0a"/><rect x="590.01" y="27.81" width="165.69" height="77.64" rx="1.5" fill="#ff6a0a"/><rect x="592.61" y="170.09" width="214.72" height="21.01" rx="2.5" fill="#ff6a0a"/><rect x="838.95" y="30.41" width="11.4" height="162.09" rx="4" fill="#ff6a0a"/><rect x="713.28" y="151.08" width="24.81" height="24.81" rx="2.5" fill="#ff6a0a"/><rect x="889.38" y="80.64" width="24.81" height="24.81" rx="2.5" fill="#ff6a0a"/><rect x="1030.26" y="98.25" width="24.81" height="24.81" rx="2.5" fill="#ff6a0a"/><rect x="977.43" y="168.69" width="24.81" height="24.81" rx="2.5" fill="#ff6a0a"/><rect x="1047.87" y="239.13" width="24.81" height="24.81" rx="2.5" fill="#ff6a0a"/><rect x="766.11" y="309.57" width="24.81" height="24.81" rx="2.5" fill="#ff6a0a"/><rect x="1118.31" y="327.18" width="24.81" height="24.81" rx="2.5" fill="#ff6a0a"/><rect x="626.93" y="116.26" width="21.4" height="24" rx="7.5" fill="#ff6a0a"/><rect x="926.30" y="116.26" width="21.4" height="24" rx="7.5" fill="#ff6a0a"/><rect x="854.96" y="134.27" width="23.2" height="23.8" rx="7" fill="#ff6a0a"/><rect x="1066.28" y="169.49" width="23.2" height="23.8" rx="7" fill="#ff6a0a"/><rect x="749.30" y="222.32" width="23.2" height="23.8" rx="7" fill="#ff6a0a"/><rect x="696.47" y="275.15" width="23.2" height="23.8" rx="7" fill="#ff6a0a"/><rect x="978.23" y="310.37" width="23.2" height="23.8" rx="7" fill="#ff6a0a"/><rect x="1083.09" y="80.64" width="60.03" height="60.03" rx="2.5" fill="#ff6a0a"/></g><g><rect x="572.40" y="10.20" width="641.16" height="24.81" rx="1.5" fill="#ff6a0a"/><rect x="572.40" y="380.01" width="641.16" height="24.81" rx="1.5" fill="#ff6a0a"/><rect x="572.40" y="10.20" width="24.81" height="394.62" rx="1.5" fill="#ff6a0a"/><rect x="1188.75" y="10.20" width="24.81" height="394.62" rx="1.5" fill="#ff6a0a"/><rect x="590.01" y="27.81" width="165.69" height="77.64" rx="1.5" fill="#ff6a0a"/><rect x="592.61" y="170.09" width="214.72" height="21.01" rx="2.5" fill="#ff6a0a"/><rect x="838.95" y="30.41" width="11.4" height="162.09" rx="4" fill="#ff6a0a"/><rect x="713.28" y="151.08" width="24.81" height="24.81" rx="2.5" fill="#ff6a0a"/><rect x="889.38" y="80.64" width="24.81" height="24.81" rx="2.5" fill="#ff6a0a"/><rect x="1030.26" y="98.25" width="24.81" height="24.81" rx="2.5" fill="#ff6a0a"/><rect x="977.43" y="168.69" width="24.81" height="24.81" rx="2.5" fill="#ff6a0a"/><rect x="1047.87" y="239.13" width="24.81" height="24.81" rx="2.5" fill="#ff6a0a"/><rect x="766.11" y="309.57" width="24.81" height="24.81" rx="2.5" fill="#ff6a0a"/><rect x="1118.31" y="327.18" width="24.81" height="24.81" rx="2.5" fill="#ff6a0a"/><rect x="626.93" y="116.26" width="21.4" height="24" rx="7.5" fill="#ff6a0a"/><rect x="926.30" y="116.26" width="21.4" height="24" rx="7.5" fill="#ff6a0a"/><rect x="854.96" y="134.27" width="23.2" height="23.8" rx="7" fill="#ff6a0a"/><rect x="1066.28" y="169.49" width="23.2" height="23.8" rx="7" fill="#ff6a0a"/><rect x="749.30" y="222.32" width="23.2" height="23.8" rx="7" fill="#ff6a0a"/><rect x="696.47" y="275.15" width="23.2" height="23.8" rx="7" fill="#ff6a0a"/><rect x="978.23" y="310.37" width="23.2" height="23.8" rx="7" fill="#ff6a0a"/><rect x="1083.09" y="80.64" width="60.03" height="60.03" rx="2.5" fill="#ff6a0a"/></g><use href="#t-brick" transform="translate(576.00,13.80) scale(1.10062)"/><use href="#t-brick" transform="translate(576.00,383.61) scale(1.10062)"/><use href="#t-brick" transform="translate(593.61,13.80) scale(1.10062)"/><use href="#t-brick" transform="translate(593.61,383.61) scale(1.10062)"/><use href="#t-brick" transform="translate(611.22,13.80) scale(1.10062)"/><use href="#t-brick" transform="translate(611.22,383.61) scale(1.10062)"/><use href="#t-brick" transform="translate(628.83,13.80) scale(1.10062)"/><use href="#t-brick" transform="translate(628.83,383.61) scale(1.10062)"/><use href="#t-brick" transform="translate(646.44,13.80) scale(1.10062)"/><use href="#t-brick" transform="translate(646.44,383.61) scale(1.10062)"/><use href="#t-brick" transform="translate(664.05,13.80) scale(1.10062)"/><use href="#t-brick" transform="translate(664.05,383.61) scale(1.10062)"/><use href="#t-brick" transform="translate(681.66,13.80) scale(1.10062)"/><use href="#t-brick" transform="translate(681.66,383.61) scale(1.10062)"/><use href="#t-brick" transform="translate(699.27,13.80) scale(1.10062)"/><use href="#t-brick" transform="translate(699.27,383.61) scale(1.10062)"/><use href="#t-brick" transform="translate(716.88,13.80) scale(1.10062)"/><use href="#t-brick" transform="translate(716.88,383.61) scale(1.10062)"/><use href="#t-brick" transform="translate(734.49,13.80) scale(1.10062)"/><use href="#t-brick" transform="translate(734.49,383.61) scale(1.10062)"/><use href="#t-brick" transform="translate(752.10,13.80) scale(1.10062)"/><use href="#t-brick" transform="translate(752.10,383.61) scale(1.10062)"/><use href="#t-brick" transform="translate(769.71,13.80) scale(1.10062)"/><use href="#t-brick" transform="translate(769.71,383.61) scale(1.10062)"/><use href="#t-brick" transform="translate(787.32,13.80) scale(1.10062)"/><use href="#t-brick" transform="translate(787.32,383.61) scale(1.10062)"/><use href="#t-brick" transform="translate(804.93,13.80) scale(1.10062)"/><use href="#t-brick" transform="translate(804.93,383.61) scale(1.10062)"/><use href="#t-brick" transform="translate(822.54,13.80) scale(1.10062)"/><use href="#t-brick" transform="translate(822.54,383.61) scale(1.10062)"/><use href="#t-brick" transform="translate(840.15,13.80) scale(1.10062)"/><use href="#t-brick" transform="translate(840.15,383.61) scale(1.10062)"/><use href="#t-brick" transform="translate(857.76,13.80) scale(1.10062)"/><use href="#t-brick" transform="translate(857.76,383.61) scale(1.10062)"/><use href="#t-brick" transform="translate(875.37,13.80) scale(1.10062)"/><use href="#t-brick" transform="translate(875.37,383.61) scale(1.10062)"/><use href="#t-brick" transform="translate(892.98,13.80) scale(1.10062)"/><use href="#t-brick" transform="translate(892.98,383.61) scale(1.10062)"/><use href="#t-brick" transform="translate(910.59,13.80) scale(1.10062)"/><use href="#t-brick" transform="translate(910.59,383.61) scale(1.10062)"/><use href="#t-brick" transform="translate(928.20,13.80) scale(1.10062)"/><use href="#t-brick" transform="translate(928.20,383.61) scale(1.10062)"/><use href="#t-brick" transform="translate(945.81,13.80) scale(1.10062)"/><use href="#t-brick" transform="translate(945.81,383.61) scale(1.10062)"/><use href="#t-brick" transform="translate(963.42,13.80) scale(1.10062)"/><use href="#t-brick" transform="translate(963.42,383.61) scale(1.10062)"/><use href="#t-brick" transform="translate(981.03,13.80) scale(1.10062)"/><use href="#t-brick" transform="translate(981.03,383.61) scale(1.10062)"/><use href="#t-brick" transform="translate(998.64,13.80) scale(1.10062)"/><use href="#t-brick" transform="translate(998.64,383.61) scale(1.10062)"/><use href="#t-brick" transform="translate(1016.25,13.80) scale(1.10062)"/><use href="#t-brick" transform="translate(1016.25,383.61) scale(1.10062)"/><use href="#t-brick" transform="translate(1033.86,13.80) scale(1.10062)"/><use href="#t-brick" transform="translate(1033.86,383.61) scale(1.10062)"/><use href="#t-brick" transform="translate(1051.47,13.80) scale(1.10062)"/><use href="#t-brick" transform="translate(1051.47,383.61) scale(1.10062)"/><use href="#t-brick" transform="translate(1069.08,13.80) scale(1.10062)"/><use href="#t-brick" transform="translate(1069.08,383.61) scale(1.10062)"/><use href="#t-brick" transform="translate(1086.69,13.80) scale(1.10062)"/><use href="#t-brick" transform="translate(1086.69,383.61) scale(1.10062)"/><use href="#t-brick" transform="translate(1104.30,13.80) scale(1.10062)"/><use href="#t-brick" transform="translate(1104.30,383.61) scale(1.10062)"/><use href="#t-brick" transform="translate(1121.91,13.80) scale(1.10062)"/><use href="#t-brick" transform="translate(1121.91,383.61) scale(1.10062)"/><use href="#t-brick" transform="translate(1139.52,13.80) scale(1.10062)"/><use href="#t-brick" transform="translate(1139.52,383.61) scale(1.10062)"/><use href="#t-brick" transform="translate(1157.13,13.80) scale(1.10062)"/><use href="#t-brick" transform="translate(1157.13,383.61) scale(1.10062)"/><use href="#t-brick" transform="translate(1174.74,13.80) scale(1.10062)"/><use href="#t-brick" transform="translate(1174.74,383.61) scale(1.10062)"/><use href="#t-brick" transform="translate(1192.35,13.80) scale(1.10062)"/><use href="#t-brick" transform="translate(1192.35,383.61) scale(1.10062)"/><use href="#t-brick" transform="translate(576.00,31.41) scale(1.10062)"/><use href="#t-brick" transform="translate(1192.35,31.41) scale(1.10062)"/><use href="#t-brick" transform="translate(576.00,49.02) scale(1.10062)"/><use href="#t-brick" transform="translate(1192.35,49.02) scale(1.10062)"/><use href="#t-brick" transform="translate(576.00,66.63) scale(1.10062)"/><use href="#t-brick" transform="translate(1192.35,66.63) scale(1.10062)"/><use href="#t-brick" transform="translate(576.00,84.24) scale(1.10062)"/><use href="#t-brick" transform="translate(1192.35,84.24) scale(1.10062)"/><use href="#t-brick" transform="translate(576.00,101.85) scale(1.10062)"/><use href="#t-brick" transform="translate(1192.35,101.85) scale(1.10062)"/><use href="#t-brick" transform="translate(576.00,119.46) scale(1.10062)"/><use href="#t-brick" transform="translate(1192.35,119.46) scale(1.10062)"/><use href="#t-brick" transform="translate(576.00,137.07) scale(1.10062)"/><use href="#t-brick" transform="translate(1192.35,137.07) scale(1.10062)"/><use href="#t-brick" transform="translate(576.00,154.68) scale(1.10062)"/><use href="#t-brick" transform="translate(1192.35,154.68) scale(1.10062)"/><use href="#t-brick" transform="translate(576.00,172.29) scale(1.10062)"/><use href="#t-brick" transform="translate(1192.35,172.29) scale(1.10062)"/><use href="#t-brick" transform="translate(576.00,189.90) scale(1.10062)"/><use href="#t-brick" transform="translate(1192.35,189.90) scale(1.10062)"/><use href="#t-brick" transform="translate(576.00,207.51) scale(1.10062)"/><use href="#t-brick" transform="translate(1192.35,207.51) scale(1.10062)"/><use href="#t-brick" transform="translate(576.00,225.12) scale(1.10062)"/><use href="#t-brick" transform="translate(1192.35,225.12) scale(1.10062)"/><use href="#t-brick" transform="translate(576.00,242.73) scale(1.10062)"/><use href="#t-brick" transform="translate(1192.35,242.73) scale(1.10062)"/><use href="#t-brick" transform="translate(576.00,260.34) scale(1.10062)"/><use href="#t-brick" transform="translate(1192.35,260.34) scale(1.10062)"/><use href="#t-brick" transform="translate(576.00,277.95) scale(1.10062)"/><use href="#t-brick" transform="translate(1192.35,277.95) scale(1.10062)"/><use href="#t-brick" transform="translate(576.00,295.56) scale(1.10062)"/><use href="#t-brick" transform="translate(1192.35,295.56) scale(1.10062)"/><use href="#t-brick" transform="translate(576.00,313.17) scale(1.10062)"/><use href="#t-brick" transform="translate(1192.35,313.17) scale(1.10062)"/><use href="#t-brick" transform="translate(576.00,330.78) scale(1.10062)"/><use href="#t-brick" transform="translate(1192.35,330.78) scale(1.10062)"/><use href="#t-brick" transform="translate(576.00,348.39) scale(1.10062)"/><use href="#t-brick" transform="translate(1192.35,348.39) scale(1.10062)"/><use href="#t-brick" transform="translate(576.00,366.00) scale(1.10062)"/><use href="#t-brick" transform="translate(1192.35,366.00) scale(1.10062)"/><use href="#t-wheat" transform="translate(593.61,31.41) scale(1.10062)"/><use href="#t-wheat" transform="translate(611.22,31.41) scale(1.10062)"/><use href="#t-wheat" transform="translate(628.83,31.41) scale(1.10062)"/><use href="#t-wheat" transform="translate(646.44,31.41) scale(1.10062)"/><use href="#t-wheat" transform="translate(664.05,31.41) scale(1.10062)"/><use href="#t-wheat" transform="translate(681.66,31.41) scale(1.10062)"/><use href="#t-wheat" transform="translate(699.27,31.41) scale(1.10062)"/><use href="#t-wheat" transform="translate(716.88,31.41) scale(1.10062)"/><use href="#t-wheat" transform="translate(734.49,31.41) scale(1.10062)"/><use href="#t-wheat" transform="translate(593.61,49.02) scale(1.10062)"/><use href="#t-wheat" transform="translate(611.22,49.02) scale(1.10062)"/><use href="#t-wheat" transform="translate(628.83,49.02) scale(1.10062)"/><use href="#t-wheat" transform="translate(646.44,49.02) scale(1.10062)"/><use href="#t-wheat" transform="translate(664.05,49.02) scale(1.10062)"/><use href="#t-wheat" transform="translate(681.66,49.02) scale(1.10062)"/><use href="#t-wheat" transform="translate(699.27,49.02) scale(1.10062)"/><use href="#t-wheat" transform="translate(716.88,49.02) scale(1.10062)"/><use href="#t-wheat" transform="translate(734.49,49.02) scale(1.10062)"/><use href="#t-wheat" transform="translate(593.61,66.63) scale(1.10062)"/><use href="#t-wheat" transform="translate(611.22,66.63) scale(1.10062)"/><use href="#t-wheat" transform="translate(628.83,66.63) scale(1.10062)"/><use href="#t-wheat" transform="translate(646.44,66.63) scale(1.10062)"/><use href="#t-wheat" transform="translate(664.05,66.63) scale(1.10062)"/><use href="#t-wheat" transform="translate(681.66,66.63) scale(1.10062)"/><use href="#t-wheat" transform="translate(699.27,66.63) scale(1.10062)"/><use href="#t-wheat" transform="translate(716.88,66.63) scale(1.10062)"/><use href="#t-wheat" transform="translate(734.49,66.63) scale(1.10062)"/><use href="#t-wheat" transform="translate(593.61,84.24) scale(1.10062)"/><use href="#t-wheat" transform="translate(611.22,84.24) scale(1.10062)"/><use href="#t-wheat" transform="translate(628.83,84.24) scale(1.10062)"/><use href="#t-wheat" transform="translate(646.44,84.24) scale(1.10062)"/><use href="#t-wheat" transform="translate(664.05,84.24) scale(1.10062)"/><use href="#t-wheat" transform="translate(681.66,84.24) scale(1.10062)"/><use href="#t-wheat" transform="translate(699.27,84.24) scale(1.10062)"/><use href="#t-wheat" transform="translate(716.88,84.24) scale(1.10062)"/><use href="#t-wheat" transform="translate(734.49,84.24) scale(1.10062)"/><use href="#t-fh" transform="translate(593.61,172.29) scale(1.10062)"/><use href="#t-fh" transform="translate(611.22,172.29) scale(1.10062)"/><use href="#t-fh" transform="translate(628.83,172.29) scale(1.10062)"/><use href="#t-fh" transform="translate(646.44,172.29) scale(1.10062)"/><use href="#t-fh" transform="translate(664.05,172.29) scale(1.10062)"/><use href="#t-fh" transform="translate(681.66,172.29) scale(1.10062)"/><use href="#t-fh" transform="translate(699.27,172.29) scale(1.10062)"/><use href="#t-fh" transform="translate(716.88,172.29) scale(1.10062)"/><use href="#t-fh" transform="translate(734.49,172.29) scale(1.10062)"/><use href="#t-fh" transform="translate(752.10,172.29) scale(1.10062)"/><use href="#t-fh" transform="translate(769.71,172.29) scale(1.10062)"/><use href="#t-fh" transform="translate(787.32,172.29) scale(1.10062)"/><use href="#t-fv" transform="translate(840.15,31.41) scale(1.10062)"/><use href="#t-fv" transform="translate(840.15,49.02) scale(1.10062)"/><use href="#t-fv" transform="translate(840.15,66.63) scale(1.10062)"/><use href="#t-fv" transform="translate(840.15,84.24) scale(1.10062)"/><use href="#t-fv" transform="translate(840.15,101.85) scale(1.10062)"/><use href="#t-fv" transform="translate(840.15,119.46) scale(1.10062)"/><use href="#t-fv" transform="translate(840.15,137.07) scale(1.10062)"/><use href="#t-fv" transform="translate(840.15,154.68) scale(1.10062)"/><use href="#t-fv" transform="translate(840.15,172.29) scale(1.10062)"/><use href="#t-trunk" transform="translate(716.88,154.68) scale(1.10062)"/><use href="#t-trunk" transform="translate(892.98,84.24) scale(1.10062)"/><use href="#t-trunk" transform="translate(1033.86,101.85) scale(1.10062)"/><use href="#t-trunk" transform="translate(981.03,172.29) scale(1.10062)"/><use href="#t-trunk" transform="translate(1051.47,242.73) scale(1.10062)"/><use href="#t-trunk" transform="translate(769.71,313.17) scale(1.10062)"/><use href="#t-trunk" transform="translate(1121.91,330.78) scale(1.10062)"/><use href="#t-barrel" transform="translate(628.83,119.46) scale(1.10062)"/><use href="#t-barrel" transform="translate(928.20,119.46) scale(1.10062)"/><use href="#t-cactus" transform="translate(857.76,137.07) scale(1.10062)"/><use href="#t-cactus" transform="translate(1069.08,172.29) scale(1.10062)"/><use href="#t-cactus" transform="translate(752.10,225.12) scale(1.10062)"/><use href="#t-cactus" transform="translate(699.27,277.95) scale(1.10062)"/><use href="#t-cactus" transform="translate(981.03,313.17) scale(1.10062)"/><g shape-rendering="auto" transform="translate(1086.69,84.24) scale(1.10062)"><rect width="48" height="48" fill="#000"/><rect x="1" y="0.6" width="46" height="30.4" fill="#c87a00"/><rect x="3" y="1.6" width="42" height="26.4" fill="#ffa000"/><path d="M1 3 H3 M1 6 H3 M1 9 H3 M1 12 H3 M1 15 H3 M1 18 H3 M1 21 H3 M1 24 H3 M45 3 H47 M45 6 H47 M45 9 H47 M45 12 H47 M45 15 H47 M45 18 H47 M45 21 H47 M45 24 H47" stroke="#8a4a00" stroke-width="0.6"/><rect x="1.6" y="28" width="44.8" height="3.6" fill="#e08c00"/><path d="M2 28 H46" stroke="#7a4000" stroke-width="0.7"/><path d="M10 28.4 V31.4 M18 28.4 V31.4 M26 28.4 V31.4 M34 28.4 V31.4 M41 28.4 V31.4" stroke="#8a4a00" stroke-width="0.6"/><rect x="0.8" y="32.6" width="46.4" height="14.6" fill="#000"/><rect x="1.4" y="33" width="45.2" height="2" fill="#b86a00"/><rect x="1.4" y="36" width="13.4" height="3.6" fill="#d88600"/><rect x="33.4" y="36" width="13.2" height="3.6" fill="#d88600"/><rect x="17" y="36" width="14" height="3.6" fill="#c87800"/><rect x="1.4" y="40.6" width="45.2" height="3" fill="#b86a00"/><rect x="1.4" y="44.6" width="45.2" height="2.4" fill="#d88600"/><path d="M8 40.6 V43.6 M14 40.6 V43.6 M36 40.6 V43.6 M42 40.6 V43.6 M11 44.6 V47 M39 44.6 V47" stroke="#000" stroke-width="0.7"/><rect x="11" y="37" width="3" height="1.6" fill="#8a4a00"/><rect x="40" y="37" width="3" height="1.6" fill="#8a4a00"/><path d="M19.6 47.4 L19.6 40.4 Q19.6 36 24 36 Q28.6 36 28.6 40.4 L28.6 47.4 Z" fill="#000"/><path d="M9.4 6.4 h1 M9.6 9.6 h0.8 M6 12.6 h0.8 v1 M21.6 4.4 h0.8 M27 9 h1.4 M35.4 4.4 h0.8 M40 9.8 h0.8 M14.4 20 h0.6 M20.4 18 h0.8 M26 24.4 h0.8 M43 23 h0.6 M12 2.2 h0.6 M30 2.2 h0.6" stroke="#5a2c00" stroke-width="0.9" fill="none"/><path d="M1.4 26.6 Q2.4 22.6 6.4 21.4 Q10.4 19.4 13.6 16 M6.4 21.4 Q9 23.6 10.4 26.4 Q11.6 28.6 13 30.4 M17.4 31 Q19 27.6 22.4 25.6 M20.4 32.6 Q24 34.6 25.6 37.6 Q27 36.4 29.4 36 M40.6 21.6 Q43.4 24.4 45 28.6 M4 41 Q5.4 43.4 5 46.6 M9.4 46.4 Q9.6 42.4 12 40 M16.6 42.6 L17 46.6 M34.6 41.4 Q36.4 43.4 36.6 46.6 M42.6 41.4 Q41 44 40 46.6" stroke="#5a8210" stroke-width="1.25" fill="none"/></g></g>
<path d="M576.00 13.80V31.41M593.61 13.80V31.41M611.22 13.80V31.41M628.83 13.80V31.41M646.44 13.80V31.41M664.05 13.80V31.41M681.66 13.80V31.41M699.27 13.80V31.41M716.88 13.80V31.41M734.49 13.80V31.41M752.10 13.80V31.41M769.71 13.80V31.41M787.32 13.80V31.41M804.93 13.80V31.41M822.54 13.80V31.41M840.15 13.80V31.41M857.76 13.80V31.41M875.37 13.80V31.41M892.98 13.80V31.41M910.59 13.80V31.41M928.20 13.80V31.41M945.81 13.80V31.41M963.42 13.80V31.41M981.03 13.80V31.41M998.64 13.80V31.41M1016.25 13.80V31.41M1033.86 13.80V31.41M1051.47 13.80V31.41M1069.08 13.80V31.41M1086.69 13.80V31.41M1104.30 13.80V31.41M1121.91 13.80V31.41M1139.52 13.80V31.41M1157.13 13.80V31.41M1174.74 13.80V31.41M1192.35 13.80V31.41M1209.96 13.80V31.41M576.00 13.80H1209.96M576.00 31.41H1209.96M576.00 383.61V401.22M593.61 383.61V401.22M611.22 383.61V401.22M628.83 383.61V401.22M646.44 383.61V401.22M664.05 383.61V401.22M681.66 383.61V401.22M699.27 383.61V401.22M716.88 383.61V401.22M734.49 383.61V401.22M752.10 383.61V401.22M769.71 383.61V401.22M787.32 383.61V401.22M804.93 383.61V401.22M822.54 383.61V401.22M840.15 383.61V401.22M857.76 383.61V401.22M875.37 383.61V401.22M892.98 383.61V401.22M910.59 383.61V401.22M928.20 383.61V401.22M945.81 383.61V401.22M963.42 383.61V401.22M981.03 383.61V401.22M998.64 383.61V401.22M1016.25 383.61V401.22M1033.86 383.61V401.22M1051.47 383.61V401.22M1069.08 383.61V401.22M1086.69 383.61V401.22M1104.30 383.61V401.22M1121.91 383.61V401.22M1139.52 383.61V401.22M1157.13 383.61V401.22M1174.74 383.61V401.22M1192.35 383.61V401.22M1209.96 383.61V401.22M576.00 383.61H1209.96M576.00 401.22H1209.96M576.00 31.41V383.61M593.61 31.41V383.61M576.00 31.41H593.61M576.00 49.02H593.61M576.00 66.63H593.61M576.00 84.24H593.61M576.00 101.85H593.61M576.00 119.46H593.61M576.00 137.07H593.61M576.00 154.68H593.61M576.00 172.29H593.61M576.00 189.90H593.61M576.00 207.51H593.61M576.00 225.12H593.61M576.00 242.73H593.61M576.00 260.34H593.61M576.00 277.95H593.61M576.00 295.56H593.61M576.00 313.17H593.61M576.00 330.78H593.61M576.00 348.39H593.61M576.00 366.00H593.61M576.00 383.61H593.61M1192.35 31.41V383.61M1209.96 31.41V383.61M1192.35 31.41H1209.96M1192.35 49.02H1209.96M1192.35 66.63H1209.96M1192.35 84.24H1209.96M1192.35 101.85H1209.96M1192.35 119.46H1209.96M1192.35 137.07H1209.96M1192.35 154.68H1209.96M1192.35 172.29H1209.96M1192.35 189.90H1209.96M1192.35 207.51H1209.96M1192.35 225.12H1209.96M1192.35 242.73H1209.96M1192.35 260.34H1209.96M1192.35 277.95H1209.96M1192.35 295.56H1209.96M1192.35 313.17H1209.96M1192.35 330.78H1209.96M1192.35 348.39H1209.96M1192.35 366.00H1209.96M1192.35 383.61H1209.96M593.61 31.41V101.85M611.22 31.41V101.85M628.83 31.41V101.85M646.44 31.41V101.85M664.05 31.41V101.85M681.66 31.41V101.85M699.27 31.41V101.85M716.88 31.41V101.85M734.49 31.41V101.85M752.10 31.41V101.85M593.61 31.41H752.10M593.61 49.02H752.10M593.61 66.63H752.10M593.61 84.24H752.10M593.61 101.85H752.10" fill="none" stroke="#cdfedc" stroke-width="1.8" stroke-linecap="square"/><path d="M716.88 154.68V172.29M734.49 154.68V172.29M716.88 154.68H734.49M716.88 172.29H734.49M892.98 84.24V101.85M910.59 84.24V101.85M892.98 84.24H910.59M892.98 101.85H910.59M1033.86 101.85V119.46M1051.47 101.85V119.46M1033.86 101.85H1051.47M1033.86 119.46H1051.47M981.03 172.29V189.90M998.64 172.29V189.90M981.03 172.29H998.64M981.03 189.90H998.64M1051.47 242.73V260.34M1069.08 242.73V260.34M1051.47 242.73H1069.08M1051.47 260.34H1069.08M769.71 313.17V330.78M787.32 313.17V330.78M769.71 313.17H787.32M769.71 330.78H787.32M1121.91 330.78V348.39M1139.52 330.78V348.39M1121.91 330.78H1139.52M1121.91 348.39H1139.52M1086.69 84.24V137.07M1104.30 84.24V137.07M1121.91 84.24V137.07M1139.52 84.24V137.07M1086.69 84.24H1139.52M1086.69 101.85H1139.52M1086.69 119.46H1139.52M1086.69 137.07H1139.52" fill="none" stroke="#cdfedc" stroke-width="1.25" stroke-linecap="square"/><rect x="576.00" y="13.80" width="633.96" height="387.42" fill="none" stroke="#ffdcc0" stroke-width="1.4"/><path d="M633.43 120.46H641.83M633.43 136.66H641.83M932.80 120.46H941.20M932.80 136.66H941.20M861.76 154.47H872.36M865.16 137.47H869.76M1073.08 189.69H1083.68M1076.48 172.69H1081.08M756.10 242.52H766.70M759.50 225.52H764.10M703.27 295.35H713.87M706.67 278.35H711.27M985.03 330.57H995.63M988.43 313.57H993.03M593.61 178.49V181.89M611.22 178.49V181.89M628.83 178.49V181.89M646.44 178.49V181.89M664.05 178.49V181.89M681.66 178.49V181.89M699.27 178.49V181.89M716.88 178.49V181.89M734.49 178.49V181.89M752.10 178.49V181.89M769.71 178.49V181.89M787.32 178.49V181.89M804.93 178.49V181.89M842.15 49.02H847.15M842.15 66.63H847.15M842.15 84.24H847.15M842.15 101.85H847.15M842.15 119.46H847.15M842.15 137.07H847.15M842.15 154.68H847.15M842.15 172.29H847.15M842.15 189.90H847.15" fill="none" stroke="#cdfedc" stroke-width="1.4"/><path d="M839.85 34.41V189.90" fill="none" stroke="#ffd2b4" stroke-width="1" opacity="0.85"/><path d="M857.76 141.07V137.07H862.26M870.76 137.07H875.37V140.07M857.76 148.07V153.07M875.37 148.07V153.07M1069.08 176.29V172.29H1073.58M1082.08 172.29H1086.69V175.29M1069.08 183.29V188.29M1086.69 183.29V188.29M752.10 229.12V225.12H756.60M765.10 225.12H769.71V228.12M752.10 236.12V241.12M769.71 236.12V241.12M699.27 281.95V277.95H703.77M712.27 277.95H716.88V280.95M699.27 288.95V293.95M716.88 288.95V293.95M981.03 317.17V313.17H985.53M994.03 313.17H998.64V316.17M981.03 324.17V329.17M998.64 324.17V329.17" fill="none" stroke="#ffe6d2" stroke-width="1.3" opacity="0.9"/>
<clipPath id="mapclip"><rect x="573.00" y="10.80" width="639.96" height="393.42"/></clipPath>
<g clip-path="url(#mapclip)"><path d="M487.95 0V448M505.56 0V448M523.17 0V448M540.78 0V448M558.39 0V448M576.00 0V448M593.61 0V448M611.22 0V448M628.83 0V448M646.44 0V448M664.05 0V448M681.66 0V448M699.27 0V448M716.88 0V448M734.49 0V448M752.10 0V448M769.71 0V448M787.32 0V448M804.93 0V448M822.54 0V448M840.15 0V448M857.76 0V448M875.37 0V448M892.98 0V448M910.59 0V448M928.20 0V448M945.81 0V448M963.42 0V448M981.03 0V448M998.64 0V448M1016.25 0V448M1033.86 0V448M1051.47 0V448M1069.08 0V448M1086.69 0V448M1104.30 0V448M1121.91 0V448M1139.52 0V448M1157.13 0V448M1174.74 0V448M1192.35 0V448M1209.96 0V448M1227.57 0V448M1245.18 0V448M1262.79 0V448" stroke="#fff" stroke-opacity="0.21" stroke-width="1.2" fill="none"/><path d="M478 13.80H1277M478 31.41H1277M478 49.02H1277M478 66.63H1277M478 84.24H1277M478 101.85H1277M478 119.46H1277M478 137.07H1277M478 154.68H1277M478 172.29H1277M478 189.90H1277M478 207.51H1277M478 225.12H1277M478 242.73H1277M478 260.34H1277M478 277.95H1277M478 295.56H1277M478 313.17H1277M478 330.78H1277M478 348.39H1277M478 366.00H1277M478 383.61H1277M478 401.22H1277M478 418.83H1277M478 436.44H1277" stroke="#fff" stroke-opacity="0.23" stroke-width="1.2" fill="none"/></g>
<g transform="translate(902.50,136.00)"><path d="M-2 -4.2 H2.2 V-3.2 H3.4 V-2 H4.3 V2.2 H3.4 V3.2 H2 V4.6 H-2 V3.2 H-3.4 V2.2 H-4.3 V-2 H-3.4 V-3.2 H-2 Z" fill="#000"/><path d="M-2 -3.2 H2.2 V-2.2 H3.3 V2 H2.2 V3.1 H-2 V2 H-3.3 V-2.2 H-2 Z" fill="#ffa412"/><rect x="-3.2" y="-2.2" width="1.8" height="1.2" fill="#fff"/><rect x="-1.6" y="-3.2" width="1.2" height="1" fill="#fff"/><rect x="-1.2" y="-1.4" width="2.4" height="2.4" fill="#c87000"/><path d="M-0.8 1.4 H1.9 V-1" stroke="#fff" stroke-width="0.9" fill="none"/></g>
<g transform="translate(984.00,226.50)"><path d="M-2 -4.2 H2.2 V-3.2 H3.4 V-2 H4.3 V2.2 H3.4 V3.2 H2 V4.6 H-2 V3.2 H-3.4 V2.2 H-4.3 V-2 H-3.4 V-3.2 H-2 Z" fill="#000"/><path d="M-2 -3.2 H2.2 V-2.2 H3.3 V2 H2.2 V3.1 H-2 V2 H-3.3 V-2.2 H-2 Z" fill="#ffa412"/><rect x="-3.2" y="-2.2" width="1.8" height="1.2" fill="#fff"/><rect x="-1.6" y="-3.2" width="1.2" height="1" fill="#fff"/><rect x="-1.2" y="-1.4" width="2.4" height="2.4" fill="#c87000"/><path d="M-0.8 1.4 H1.9 V-1" stroke="#fff" stroke-width="0.9" fill="none"/></g>
<g transform="translate(847.60,260.00)"><path d="M-2 -4.2 H2.2 V-3.2 H3.4 V-2 H4.3 V2.2 H3.4 V3.2 H2 V4.6 H-2 V3.2 H-3.4 V2.2 H-4.3 V-2 H-3.4 V-3.2 H-2 Z" fill="#000"/><path d="M-2 -3.2 H2.2 V-2.2 H3.3 V2 H2.2 V3.1 H-2 V2 H-3.3 V-2.2 H-2 Z" fill="#ffa412"/><rect x="-3.2" y="-2.2" width="1.8" height="1.2" fill="#fff"/><rect x="-1.6" y="-3.2" width="1.2" height="1" fill="#fff"/><rect x="-1.2" y="-1.4" width="2.4" height="2.4" fill="#c87000"/><path d="M-0.8 1.4 H1.9 V-1" stroke="#fff" stroke-width="0.9" fill="none"/></g>
<g transform="translate(677.40,324.60)"><path d="M-2 -4.2 H2.2 V-3.2 H3.4 V-2 H4.3 V2.2 H3.4 V3.2 H2 V4.6 H-2 V3.2 H-3.4 V2.2 H-4.3 V-2 H-3.4 V-3.2 H-2 Z" fill="#000"/><path d="M-2 -3.2 H2.2 V-2.2 H3.3 V2 H2.2 V3.1 H-2 V2 H-3.3 V-2.2 H-2 Z" fill="#ffa412"/><rect x="-3.2" y="-2.2" width="1.8" height="1.2" fill="#fff"/><rect x="-1.6" y="-3.2" width="1.2" height="1" fill="#fff"/><rect x="-1.2" y="-1.4" width="2.4" height="2.4" fill="#c87000"/><path d="M-0.8 1.4 H1.9 V-1" stroke="#fff" stroke-width="0.9" fill="none"/></g>
<g transform="translate(1061.10,317.60)"><path d="M-2 -4.2 H2.2 V-3.2 H3.4 V-2 H4.3 V2.2 H3.4 V3.2 H2 V4.6 H-2 V3.2 H-3.4 V2.2 H-4.3 V-2 H-3.4 V-3.2 H-2 Z" fill="#000"/><path d="M-2 -3.2 H2.2 V-2.2 H3.3 V2 H2.2 V3.1 H-2 V2 H-3.3 V-2.2 H-2 Z" fill="#ffa412"/><rect x="-3.2" y="-2.2" width="1.8" height="1.2" fill="#fff"/><rect x="-1.6" y="-3.2" width="1.2" height="1" fill="#fff"/><rect x="-1.2" y="-1.4" width="2.4" height="2.4" fill="#c87000"/><path d="M-0.8 1.4 H1.9 V-1" stroke="#fff" stroke-width="0.9" fill="none"/></g>
<g transform="translate(892.90,206.90)"><rect x="-1.1" y="-8" width="2.2" height="1.8" fill="#ffa820"/><circle cx="0" cy="0" r="6.1" fill="#1a1a30"/><circle cx="0" cy="0" r="5.5" fill="#3a3f9a"/><path d="M-4.4 -2.8 A5.3 5.3 0 0 1 4.4 -2.8 L3.4 -1.6 A4 4 0 0 0 -3.4 -1.6 Z" fill="#b05ac8"/><path d="M-3.8 3.6 A5.3 5.3 0 0 0 3.8 3.6 L2.8 2.6 A4 4 0 0 1 -2.8 2.6 Z" fill="#8a48b8"/><circle cx="0" cy="-0.1" r="3.7" fill="#f4f4f8"/><path d="M0.6 -2.4 L-1.3 0 L0 0 L-0.6 2.4 L1.3 -0.2 L0 -0.2 Z" fill="#38b4e8"/><path d="M-7.6 4.2 H-4 V6.6 H-7.6 Z M4 4.2 H7.8 V6.6 H4 Z" fill="#000"/><path d="M-7 3.6 L-5.6 3 L-4.2 3.8 V5.8 H-7 Z M4.2 3.8 L5.6 3 L7.2 3.6 V5.8 H4.2 Z" fill="#ffa012"/><rect x="-3.4" y="6" width="6.8" height="1.7" fill="#000"/><rect x="-3" y="6.6" width="2.2" height="1.1" fill="#e8285a"/><rect x="0.9" y="6.6" width="2.2" height="1.1" fill="#e8285a"/></g>
<circle cx="576.00" cy="13.80" r="4.6" fill="#1c2434"/><circle cx="576.00" cy="13.80" r="3.9" fill="url(#hgrad)"/>
<circle cx="1209.96" cy="13.80" r="4.6" fill="#1c2434"/><circle cx="1209.96" cy="13.80" r="3.9" fill="url(#hgrad)"/>
<circle cx="576.00" cy="401.22" r="4.6" fill="#1c2434"/><circle cx="576.00" cy="401.22" r="3.9" fill="url(#hgrad)"/>
<circle cx="1209.96" cy="401.22" r="4.6" fill="#1c2434"/><circle cx="1209.96" cy="401.22" r="3.9" fill="url(#hgrad)"/>
</svg>
<div class="abs" style="left:2px;top:-4px;width:43px;height:196px;background:rgba(14,14,14,.93);border-radius:4px"></div><div class="abs" style="left:16px;top:2.5px;width:16px;height:1px;background:#8a8a8a"></div><div class="abs" style="left:16px;top:5.5px;width:16px;height:1px;background:#8a8a8a"></div><div class="abs" style="left:5px;top:15px;width:36px;height:20px;background:#303030;border-radius:3px"></div><svg style="left:16px;top:18px" width="14" height="14" viewBox="0 0 16 16"><path d="M8 1.4 L14 4.5 L14 11.5 L8 14.7 L2 11.5 L2 4.5 Z M2 4.5 L8 7.7 L14 4.5 M8 7.7 L8 14.7" fill="none" stroke="#6e6e6e" stroke-width="1.1"/></svg><div class="abs" style="left:5px;top:39px;width:37px;height:20px;background:#585858;border-radius:3px 3px 0 0"></div><div class="abs" style="left:5px;top:60px;width:37px;height:20px;background:#585858;border-radius:0"></div><div class="abs" style="left:5px;top:81px;width:37px;height:20px;background:#585858;border-radius:0"></div><div class="abs" style="left:5px;top:102px;width:37px;height:20px;background:#585858;border-radius:0"></div><div class="abs" style="left:5px;top:123px;width:37px;height:20px;background:#46607c;border-radius:0"></div><div class="abs" style="left:5px;top:144px;width:37px;height:20px;background:#585858;border-radius:0 0 3px 3px"></div><div class="abs" style="left:5px;top:168px;width:37px;height:20px;background:#585858;border-radius:3px"></div><svg style="left:16px;top:41px" width="16" height="16" viewBox="0 0 16 16"><path d="M3.4 15 L0.6 9.6 Q0.2 8.4 1.4 8.6 L3.6 10.4 L2.6 3.4 Q2.8 2.4 3.8 2.8 L5.4 8 L5.6 1.4 Q6.2 0.4 7 1.4 L7.6 7.6 L8.8 1.6 Q9.6 0.8 10.2 1.8 L9.8 8 L12 3.6 Q12.8 3 13.2 4 L11.6 10 L11 15 Z" fill="#c8c8c8"/></svg><svg style="left:16px;top:62px" width="16" height="16" viewBox="0 0 16 16"><path d="M8 1 V15 M1 8 H15 M5.6 3.4 L8 1 L10.4 3.4 M5.6 12.6 L8 15 L10.4 12.6 M3.4 5.6 L1 8 L3.4 10.4 M12.6 5.6 L15 8 L12.6 10.4" fill="none" stroke="#a8a8a8" stroke-width="1.3"/><rect x="6.6" y="6.6" width="2.8" height="2.8" fill="#585858"/></svg><svg style="left:16px;top:83px" width="16" height="16" viewBox="0 0 16 16"><path d="M6.4 1.6 A6.6 6.6 0 0 0 4 14 M9.6 14.4 A6.6 6.6 0 0 0 12 2" fill="none" stroke="#c8c8c8" stroke-width="1.2"/><path d="M12.6 5.4 V1.6 H8.8 M3.4 10.6 V14.4 H7.2" fill="none" stroke="#c8c8c8" stroke-width="1.2"/></svg><svg style="left:16px;top:104px" width="16" height="16" viewBox="0 0 16 16"><rect x="1.6" y="1.6" width="12.8" height="12.8" fill="none" stroke="#c8c8c8" stroke-width="1.2"/><rect x="1.6" y="9.4" width="5" height="5" fill="none" stroke="#c8c8c8" stroke-width="1.1"/><path d="M7 9 L12 4 M8.2 4 H12 V7.8" fill="none" stroke="#c8c8c8" stroke-width="1.2"/></svg><svg style="left:16px;top:125px" width="16" height="16" viewBox="0 0 16 16"><rect x="2.4" y="2.4" width="11.2" height="11.2" fill="none" stroke="#f0f0f0" stroke-width="1.1"/><rect x="0.8" y="0.8" width="3.2" height="3.2" fill="#f0f0f0"/><rect x="12" y="0.8" width="3.2" height="3.2" fill="#f0f0f0"/><rect x="0.8" y="12" width="3.2" height="3.2" fill="#f0f0f0"/><rect x="12" y="12" width="3.2" height="3.2" fill="#f0f0f0"/></svg><svg style="left:15px;top:145px" width="18" height="18" viewBox="0 0 18 18"><circle cx="9" cy="9" r="5.6" fill="none" stroke="#a8a8a8" stroke-width="1.1"/><path d="M9 4.4 V13.6 M4.4 9 H13.6 M7.6 5.6 L9 4.2 L10.4 5.6 M7.6 12.4 L9 13.8 L10.4 12.4 M5.6 7.6 L4.2 9 L5.6 10.4 M12.4 7.6 L13.8 9 L12.4 10.4" fill="none" stroke="#a8a8a8" stroke-width="1"/><path d="M13.6 1.4 H16.6 V4.4 Z M1.4 13.6 V16.6 H4.4 Z" fill="#a8a8a8"/></svg><svg style="left:15px;top:170px" width="18" height="18" viewBox="0 0 18 18"><circle cx="4.8" cy="4.4" r="2.9" fill="none" stroke="#58d898" stroke-width="1.1"/><path d="M11.4 3.8 V8.6 M9 6.2 H13.8" stroke="#dcdcdc" stroke-width="1.2"/><path d="M8.4 8.4 L8.4 14.6 L10.2 12.8 L13.2 12.6 Z" fill="#c8c8c8"/></svg>
<div class="abs" style="left:2px;top:420px;width:283px;height:26px;background:rgba(12,12,12,.95);border-radius:4px"></div><div class="abs" style="left:7px;top:426px;width:1px;height:15px;background:#8a8a8a"></div><div class="abs" style="left:10px;top:426px;width:1px;height:15px;background:#8a8a8a"></div><div class="abs" style="left:18px;top:423px;width:32px;height:20px;background:#46607c;border-radius:3px 0 0 3px"></div><div class="abs" style="left:51px;top:423px;width:32px;height:20px;background:#46607c;border-radius:0"></div><div class="abs" style="left:84px;top:423px;width:32px;height:20px;background:#46607c;border-radius:0"></div><div class="abs" style="left:117px;top:423px;width:32px;height:20px;background:#46607c;border-radius:0"></div><div class="abs" style="left:150px;top:423px;width:32px;height:20px;background:#46607c;border-radius:0"></div><div class="abs" style="left:183px;top:423px;width:32px;height:20px;background:#585858;border-radius:0"></div><div class="abs" style="left:216px;top:423px;width:32px;height:20px;background:#585858;border-radius:0"></div><div class="abs" style="left:249px;top:423px;width:32px;height:20px;background:#585858;border-radius:0 3px 3px 0"></div><svg style="left:26.0px;top:425px" width="16" height="16" viewBox="0 0 16 16"><path d="M8 1 V15 M1 8 H15 M5.6 3.4 L8 1 L10.4 3.4 M5.6 12.6 L8 15 L10.4 12.6 M3.4 5.6 L1 8 L3.4 10.4 M12.6 5.6 L15 8 L12.6 10.4" fill="none" stroke="#b8c4d0" stroke-width="1.3"/><rect x="6.6" y="6.6" width="2.8" height="2.8" fill="#46607c"/></svg><svg style="left:59.0px;top:425px" width="16" height="16" viewBox="0 0 16 16"><rect x="2.6" y="1.4" width="11" height="4.2" rx="0.6" fill="none" stroke="#d4d4d4" stroke-width="1.2"/><rect x="2.6" y="1.4" width="5.4" height="4.2" fill="#d4d4d4"/><path d="M2 9.6 H14 M2 13.6 H14" stroke="#d4d4d4" stroke-width="1.2"/><circle cx="6" cy="9.6" r="1.5" fill="#d4d4d4"/><circle cx="10.2" cy="13.6" r="1.5" fill="#d4d4d4"/></svg><svg style="left:92.0px;top:425px" width="16" height="16" viewBox="0 0 16 16"><path d="M2 4.4 H10 M2 7.6 H7 M4.2 2 V9 M7.2 2 V6 M14.4 5.6 V14.6 M11.6 8 V14.6 M8.8 10.6 V14.6 M8 9.2 H14.6 M6.6 12 H14.6" stroke="#d4d4d4" stroke-width="1.1" fill="none"/><path d="M1.4 15 L14 1.4" stroke="#d4d4d4" stroke-width="1.2"/></svg><svg style="left:125.0px;top:425px" width="16" height="16" viewBox="0 0 16 16"><circle cx="8" cy="8" r="6.9" fill="#d4d4d4"/><circle cx="7.1" cy="7.2" r="5.2" fill="#46607c"/></svg><svg style="left:158.0px;top:425px" width="16" height="16" viewBox="0 0 16 16"><circle cx="4.4" cy="3.4" r="2.5" fill="#d4d4d4"/><path d="M8.4 6.6 L15.2 10.2 L8.4 14 L1.6 10.2 Z M6.1 7.8 L12.9 11.5 M3.9 9 L10.7 12.7 M10.7 7.8 L3.9 11.5 M12.9 9 L6.1 12.7" fill="none" stroke="#d4d4d4" stroke-width="1"/></svg><svg style="left:191.0px;top:425px" width="16" height="16" viewBox="0 0 16 16"><circle cx="6.4" cy="6.4" r="4.2" fill="none" stroke="#d4d4d4" stroke-width="1.2"/><path d="M9.6 9.6 L14 14" stroke="#d4d4d4" stroke-width="2"/></svg><svg style="left:224.0px;top:425px" width="16" height="16" viewBox="0 0 16 16"><path d="M1.2 1.4 Q1.2 0.8 1.8 0.8 H9.2 Q9.8 0.8 9.8 1.4 V3.6 L13 1.8 V7.8 L9.8 6.2 V8.2 Q9.8 8.8 9.2 8.8 H1.8 Q1.2 8.8 1.2 8.2 Z" fill="#d4d4d4"/><path d="M3.6 12.2 Q9.2 6 15 12.2 Q9.2 18.2 3.6 12.2 Z" fill="#d4d4d4" stroke="#585858" stroke-width="1"/><circle cx="9.3" cy="12.2" r="2" fill="#585858"/></svg><svg style="left:257.0px;top:425px" width="16" height="16" viewBox="0 0 16 16"><path d="M1.6 4.4 H4.4 Q6 4.4 7 6 L9 10 Q10 11.6 11.6 11.6 H13 M1.6 11.6 H4.4 Q6 11.6 7 10 M9 6 Q10 4.4 11.6 4.4 H13" fill="none" stroke="#b48cf0" stroke-width="1.3"/><path d="M12.4 2 L15.4 4.4 L12.4 6.8 Z M12.4 9.2 L15.4 11.6 L12.4 14 Z" fill="#b48cf0"/></svg>
<div class="abs" style="left:658px;top:407px;width:139px;height:39px;background:rgba(12,12,12,.95);border-radius:4px"></div><div class="abs" style="left:663px;top:412.5px;width:16px;height:1px;background:#8a8a8a"></div><div class="abs" style="left:663px;top:415.5px;width:16px;height:1px;background:#8a8a8a"></div><span class="t" style="left:684px;top:408px;color:#8a8a8a">Tilemap Focus</span><span class="t" style="left:663px;top:425.7px;color:#d2d2d2">Focus On</span><div class="abs" style="left:721px;top:423px;width:71px;height:20px;background:#585858;border-radius:3px"></div><svg style="left:724px;top:426px" width="14" height="14" viewBox="0 0 14 14"><rect x="1" y="1" width="12" height="12" fill="none" stroke="#d8d8d8" stroke-width="1.1" stroke-dasharray="4.2 2.2" stroke-dashoffset="2.1"/></svg><span class="t" style="left:742px;top:425.7px;color:#c8c8c8">None</span><div class="abs" style="left:778px;top:431px;border-left:4.5px solid transparent;border-right:4.5px solid transparent;border-top:5px solid #c8c8c8"></div>
</div>
<div id="proj">
<div class="abs" style="left:0;top:2px;width:65px;height:24px;background:#3c3c3c;border-top-right-radius:4px"></div>
<div class="abs" style="left:-8px;top:11px;width:13px;height:10px;background:#c8c8c8;border-radius:1.5px"></div>
<span class="t" style="left:9.5px;top:6.5px;color:#d2d2d2">Project</span>
<svg style="left:76px;top:9px" width="11" height="11" viewBox="0 0 11 11"><rect x="0" y="0" width="10.6" height="10.8" rx="1.2" fill="#d0d0d0"/><path d="M1.6 2.6 H6.6 M1.6 5.4 H9 M1.6 8.2 H9" stroke="#141414" stroke-width="1.2"/></svg>
<span class="t" style="left:91px;top:6.5px;color:#c4c4c4">Console</span>
<svg style="left:1241px;top:7.4px" width="12" height="13" viewBox="0 0 12 13"><rect x="1.6" y="6.2" width="8" height="5.4" fill="none" stroke="#c8c8c8" stroke-width="1.2"/><path d="M3.4 6 V3.6 A2.3 2.3 0 0 1 8 3.6 V4.4" fill="none" stroke="#c8c8c8" stroke-width="1.2"/></svg>
<div class="abs" style="left:1263px;top:9.2px;width:2.6px;height:2.6px;background:#c8c8c8"></div>
<div class="abs" style="left:1263px;top:13.1px;width:2.6px;height:2.6px;background:#c8c8c8"></div>
<div class="abs" style="left:1263px;top:17.0px;width:2.6px;height:2.6px;background:#c8c8c8"></div>
<div class="abs" style="left:0;top:26px;width:1277px;height:20px;background:#3c3c3c"></div>
<div class="abs" style="left:0;top:35px;width:3px;height:2px;background:#c4c4c4"></div>
<div class="abs" style="left:7px;top:34px;border-left:4px solid transparent;border-right:4px solid transparent;border-top:5px solid #c4c4c4"></div>
<div class="abs" style="left:811px;top:28px;width:318px;height:16px;background:#2a2a2a;border:1px solid #1e1e1e;border-radius:4px"></div>
<svg style="left:816px;top:32px" width="9" height="9" viewBox="0 0 9 9"><circle cx="3.4" cy="3.4" r="2.4" fill="none" stroke="#c4c4c4" stroke-width="1.2"/><path d="M5.2 5.2 L8 8" stroke="#c4c4c4" stroke-width="1.5"/></svg>
<div class="abs" style="left:1111px;top:29px;width:17px;height:14px;background:#333;border-radius:0 3px 3px 0"></div>
<svg style="left:1114px;top:30px" width="12" height="12" viewBox="0 0 12 12"><rect x="3" y="0.6" width="8.4" height="8.4" rx="1.5" fill="none" stroke="#c4c4c4" stroke-width="1.1"/><rect x="0.6" y="7" width="4" height="4" fill="#333" stroke="#c4c4c4" stroke-width="1"/><path d="M5.4 6.6 L9.2 2.8 M6.4 2.8 H9.2 V5.6" fill="none" stroke="#c4c4c4" stroke-width="1.1"/></svg>
<div class="abs" style="left:1131px;top:26px;width:1px;height:20px;background:#303030"></div>
<div class="abs" style="left:1157px;top:26px;width:1px;height:20px;background:#303030"></div>
<div class="abs" style="left:1183px;top:26px;width:1px;height:20px;background:#303030"></div>
<div class="abs" style="left:1209px;top:26px;width:1px;height:20px;background:#303030"></div>
<div class="abs" style="left:1235px;top:26px;width:1px;height:20px;background:#303030"></div>
<svg style="left:1137px;top:29px" width="14" height="14" viewBox="0 0 14 14"><rect x="2" y="0.6" width="5.6" height="5.6" fill="#c4c4c4"/><circle cx="4.2" cy="9.8" r="3.4" fill="#c4c4c4"/><path d="M10.2 3.6 L13.4 9.4 L7 9.4 Z" fill="#c4c4c4"/></svg>
<svg style="left:1163px;top:30px" width="13" height="12" viewBox="0 0 13 12"><path d="M0.6 6.6 L7 1 L11.8 1 L11.8 5.6 L5.4 11.2 Z" fill="#c4c4c4"/><circle cx="9.6" cy="3.2" r="1" fill="#3c3c3c"/></svg>
<svg style="left:1188px;top:29px" width="14" height="14" viewBox="0 0 14 14"><path d="M4.2 0.6 H9.8 L13.4 4.2 V9.8 L9.8 13.4 H4.2 L0.6 9.8 V4.2 Z" fill="#c4c4c4"/><rect x="6.1" y="2.8" width="1.8" height="5.6" fill="#3c3c3c"/><rect x="6.1" y="9.6" width="1.8" height="1.8" fill="#3c3c3c"/></svg>
<svg style="left:1215px;top:30px" width="13" height="12" viewBox="0 0 13 12"><path d="M6.5 0.4 L8.1 4.4 L12.6 4.7 L9.2 7.5 L10.3 11.8 L6.5 9.4 L2.7 11.8 L3.8 7.5 L0.4 4.7 L4.9 4.4 Z" fill="#8a8a8a"/></svg>
<svg style="left:1241px;top:31px" width="15" height="10" viewBox="0 0 15 10"><path d="M0.8 5 Q7.5 -2.4 14.2 5 Q7.5 12.4 0.8 5 Z" fill="none" stroke="#7a7a7a" stroke-width="1.1"/><circle cx="7.5" cy="5" r="2.5" fill="#7a7a7a"/></svg>
<span class="t" style="left:1257.5px;top:28px;color:#a0a0a0;letter-spacing:.6px">32</span>
<div class="abs" style="left:0;top:46px;width:1277px;height:1px;background:#232323"></div>
<div class="abs" style="left:0;top:47px;width:133px;height:241px;background:#383838;overflow:hidden">
<svg style="left:2px;top:2px" width="12" height="12" viewBox="0 0 12 12"><path d="M6 0.4 L7.6 4.2 L11.7 4.5 L8.6 7.2 L9.6 11.3 L6 9.1 L2.4 11.3 L3.4 7.2 L0.3 4.5 L4.4 4.2 Z" fill="#c8c8c8"/></svg><span class="t b" style="left:19px;top:0px">Favorites</span>
<svg style="left:16px;top:18px" width="13" height="13" viewBox="0 0 13 13"><circle cx="5" cy="5" r="4" fill="none" stroke="#c8c8c8" stroke-width="1.1"/><path d="M8 8 L12 12" stroke="#c8c8c8" stroke-width="1.8" stroke-linecap="round"/></svg><span class="t" style="left:32px;top:16px">All Materials</span>
<svg style="left:16px;top:34px" width="13" height="13" viewBox="0 0 13 13"><circle cx="5" cy="5" r="4" fill="none" stroke="#c8c8c8" stroke-width="1.1"/><path d="M8 8 L12 12" stroke="#c8c8c8" stroke-width="1.8" stroke-linecap="round"/></svg><span class="t" style="left:32px;top:32px">All Models</span>
<svg style="left:16px;top:50px" width="13" height="13" viewBox="0 0 13 13"><circle cx="5" cy="5" r="4" fill="none" stroke="#c8c8c8" stroke-width="1.1"/><path d="M8 8 L12 12" stroke="#c8c8c8" stroke-width="1.8" stroke-linecap="round"/></svg><span class="t" style="left:32px;top:48px">All Prefabs</span>
<svg style="left:1px;top:82px" width="15" height="12" viewBox="0 0 15 12"><path d="M0.5 1.5 Q0.5 0.5 1.5 0.5 L5 0.5 L6.2 2 L11 2 Q12 2 12 3 L12 4 L4 4 L1.5 10 L0.5 10 Z" fill="#c8c8c8"/><path d="M4.4 5 L14.6 5 L12.2 11.2 L1.6 11.2 Z" fill="#c8c8c8"/></svg><span class="t b" style="left:19px;top:79px">Assets</span>
<svg style="left:3px;top:99px" width="8" height="9" viewBox="0 0 8 9"><path d="M0.4 0.3 L7.6 4.5 L0.4 8.7 Z" fill="#6e6e6e"/></svg><svg style="left:16px;top:98px" width="13" height="11" viewBox="0 0 13 11"><path d="M0.3 1.6 Q0.3 0.4 1.5 0.4 L4.6 0.4 L5.8 1.9 L11.3 1.9 Q12.5 1.9 12.5 3.1 L12.5 9.4 Q12.5 10.6 11.3 10.6 L1.5 10.6 Q0.3 10.6 0.3 9.4 Z" fill="#c8c8c8"/></svg><span class="t" style="left:32px;top:95px">Art</span>
<svg style="left:3px;top:115px" width="8" height="9" viewBox="0 0 8 9"><path d="M0.4 0.3 L7.6 4.5 L0.4 8.7 Z" fill="#6e6e6e"/></svg><svg style="left:16px;top:114px" width="13" height="11" viewBox="0 0 13 11"><path d="M0.3 1.6 Q0.3 0.4 1.5 0.4 L4.6 0.4 L5.8 1.9 L11.3 1.9 Q12.5 1.9 12.5 3.1 L12.5 9.4 Q12.5 10.6 11.3 10.6 L1.5 10.6 Q0.3 10.6 0.3 9.4 Z" fill="#c8c8c8"/></svg><span class="t" style="left:32px;top:111px">Characters</span>
<svg style="left:16px;top:130px" width="13" height="11" viewBox="0 0 13 11"><path d="M0.3 1.6 Q0.3 0.4 1.5 0.4 L4.6 0.4 L5.8 1.9 L11.3 1.9 Q12.5 1.9 12.5 3.1 L12.5 9.4 Q12.5 10.6 11.3 10.6 L1.5 10.6 Q0.3 10.6 0.3 9.4 Z" fill="#c8c8c8"/></svg><span class="t" style="left:32px;top:127px">Collectable</span>
<svg style="left:16px;top:146px" width="13" height="11" viewBox="0 0 13 11"><path d="M0.3 1.6 Q0.3 0.4 1.5 0.4 L4.6 0.4 L5.8 1.9 L11.3 1.9 Q12.5 1.9 12.5 3.1 L12.5 9.4 Q12.5 10.6 11.3 10.6 L1.5 10.6 Q0.3 10.6 0.3 9.4 Z" fill="#c8c8c8"/></svg><span class="t" style="left:32px;top:143px">Scenes</span>
<div class="abs" style="left:0;top:159px;width:133px;height:16px;background:#4d4d4d"></div><svg style="left:16px;top:162px" width="13" height="11" viewBox="0 0 13 11"><path d="M0.3 1.6 Q0.3 0.4 1.5 0.4 L4.6 0.4 L5.8 1.9 L11.3 1.9 Q12.5 1.9 12.5 3.1 L12.5 9.4 Q12.5 10.6 11.3 10.6 L1.5 10.6 Q0.3 10.6 0.3 9.4 Z" fill="#c8c8c8"/></svg><span class="t" style="left:32px;top:159px">Script</span>
<svg style="left:3px;top:179px" width="8" height="9" viewBox="0 0 8 9"><path d="M0.4 0.3 L7.6 4.5 L0.4 8.7 Z" fill="#6e6e6e"/></svg><svg style="left:16px;top:178px" width="13" height="11" viewBox="0 0 13 11"><path d="M0.3 1.6 Q0.3 0.4 1.5 0.4 L4.6 0.4 L5.8 1.9 L11.3 1.9 Q12.5 1.9 12.5 3.1 L12.5 9.4 Q12.5 10.6 11.3 10.6 L1.5 10.6 Q0.3 10.6 0.3 9.4 Z" fill="#c8c8c8"/></svg><span class="t" style="left:32px;top:175px">Settings</span>
<svg style="left:3px;top:195px" width="8" height="9" viewBox="0 0 8 9"><path d="M0.4 0.3 L7.6 4.5 L0.4 8.7 Z" fill="#6e6e6e"/></svg><svg style="left:16px;top:194px" width="13" height="11" viewBox="0 0 13 11"><path d="M0.3 1.6 Q0.3 0.4 1.5 0.4 L4.6 0.4 L5.8 1.9 L11.3 1.9 Q12.5 1.9 12.5 3.1 L12.5 9.4 Q12.5 10.6 11.3 10.6 L1.5 10.6 Q0.3 10.6 0.3 9.4 Z" fill="#c8c8c8"/></svg><span class="t" style="left:32px;top:191px">TextMesh Pro</span>
<svg style="left:3px;top:211px" width="8" height="9" viewBox="0 0 8 9"><path d="M0.4 0.3 L7.6 4.5 L0.4 8.7 Z" fill="#6e6e6e"/></svg><svg style="left:16px;top:210px" width="13" height="11" viewBox="0 0 13 11"><path d="M0.3 1.6 Q0.3 0.4 1.5 0.4 L4.6 0.4 L5.8 1.9 L11.3 1.9 Q12.5 1.9 12.5 3.1 L12.5 9.4 Q12.5 10.6 11.3 10.6 L1.5 10.6 Q0.3 10.6 0.3 9.4 Z" fill="#c8c8c8"/></svg><span class="t" style="left:32px;top:207px;letter-spacing:.55px">Top Down Adventure</span>
<svg style="left:2px;top:226px" width="13" height="11" viewBox="0 0 13 11"><path d="M0.3 1.6 Q0.3 0.4 1.5 0.4 L4.6 0.4 L5.8 1.9 L11.3 1.9 Q12.5 1.9 12.5 3.1 L12.5 9.4 Q12.5 10.6 11.3 10.6 L1.5 10.6 Q0.3 10.6 0.3 9.4 Z" fill="#c8c8c8"/></svg><span class="t b" style="left:19px;top:223px">Packages</span>
</div>
<div class="abs" style="left:133px;top:47px;width:1px;height:241px;background:#242424"></div>
<div class="abs" style="left:134px;top:47px;width:1143px;height:241px;background:#333"></div>
<div class="abs" style="left:134px;top:47px;width:1143px;height:21px;background:#3f3f3f"></div>
<span class="t" style="left:138px;top:49px;color:#b4b4b4">Assets</span>
<svg style="left:180px;top:52px" width="8" height="11" viewBox="0 0 8 11"><path d="M1.6 1 L6.2 5.5 L1.6 10" fill="none" stroke="#a0a0a0" stroke-width="1.2"/></svg>
<span class="t b" style="left:194px;top:49px;color:#c8c8c8">Script</span>
<svg style="left:161px;top:84px" width="72" height="84" viewBox="0 0 72 84"><path d="M6 0 L54 0 L72 18 L72 78 Q72 84 66 84 L6 84 Q0 84 0 78 L0 6 Q0 0 6 0 Z" fill="#efefef"/><g fill="#266b26"><path d="M29.4 18 L36.3 18 L29 69.5 L22.2 69.5 Z"/><path d="M42.9 18 L49.8 18 L42.6 69.5 L35.6 69.5 Z"/><rect x="16.8" y="30.2" width="38.8" height="6.3"/><rect x="13.9" y="48.5" width="38.8" height="6.3"/></g></svg>
<span class="t" style="left:137px;top:175px;width:120px;text-align:center;font-size:10px;color:#c4c4c4;letter-spacing:.3px">Collectable</span>
<svg style="left:269px;top:84px" width="72" height="84" viewBox="0 0 72 84"><path d="M6 0 L54 0 L72 18 L72 78 Q72 84 66 84 L6 84 Q0 84 0 78 L0 6 Q0 0 6 0 Z" fill="#efefef"/><g fill="#266b26"><path d="M29.4 18 L36.3 18 L29 69.5 L22.2 69.5 Z"/><path d="M42.9 18 L49.8 18 L42.6 69.5 L35.6 69.5 Z"/><rect x="16.8" y="30.2" width="38.8" height="6.3"/><rect x="13.9" y="48.5" width="38.8" height="6.3"/></g></svg>
<span class="t" style="left:245px;top:175px;width:120px;text-align:center;font-size:10px;color:#c4c4c4;letter-spacing:.3px">CollectibleSpawner</span>
<svg style="left:377px;top:84px" width="72" height="84" viewBox="0 0 72 84"><path d="M6 0 L54 0 L72 18 L72 78 Q72 84 66 84 L6 84 Q0 84 0 78 L0 6 Q0 0 6 0 Z" fill="#efefef"/><g fill="#266b26"><path d="M29.4 18 L36.3 18 L29 69.5 L22.2 69.5 Z"/><path d="M42.9 18 L49.8 18 L42.6 69.5 L35.6 69.5 Z"/><rect x="16.8" y="30.2" width="38.8" height="6.3"/><rect x="13.9" y="48.5" width="38.8" height="6.3"/></g></svg>
<span class="t" style="left:353px;top:175px;width:120px;text-align:center;font-size:10px;color:#c4c4c4;letter-spacing:.3px">GameManager</span>
<svg style="left:485px;top:84px" width="72" height="84" viewBox="0 0 72 84"><path d="M6 0 L54 0 L72 18 L72 78 Q72 84 66 84 L6 84 Q0 84 0 78 L0 6 Q0 0 6 0 Z" fill="#efefef"/><g fill="#266b26"><path d="M29.4 18 L36.3 18 L29 69.5 L22.2 69.5 Z"/><path d="M42.9 18 L49.8 18 L42.6 69.5 L35.6 69.5 Z"/><rect x="16.8" y="30.2" width="38.8" height="6.3"/><rect x="13.9" y="48.5" width="38.8" height="6.3"/></g></svg>
<span class="t" style="left:461px;top:175px;width:120px;text-align:center;font-size:10px;color:#c4c4c4;letter-spacing:.3px">MainMenu</span>
<svg style="left:593px;top:84px" width="72" height="84" viewBox="0 0 72 84"><path d="M6 0 L54 0 L72 18 L72 78 Q72 84 66 84 L6 84 Q0 84 0 78 L0 6 Q0 0 6 0 Z" fill="#efefef"/><g fill="#266b26"><path d="M29.4 18 L36.3 18 L29 69.5 L22.2 69.5 Z"/><path d="M42.9 18 L49.8 18 L42.6 69.5 L35.6 69.5 Z"/><rect x="16.8" y="30.2" width="38.8" height="6.3"/><rect x="13.9" y="48.5" width="38.8" height="6.3"/></g></svg>
<span class="t" style="left:569px;top:175px;width:120px;text-align:center;font-size:10px;color:#c4c4c4;letter-spacing:.3px">PlayerMovement</span>
<svg style="left:701px;top:84px" width="72" height="84" viewBox="0 0 72 84"><path d="M6 0 L54 0 L72 18 L72 78 Q72 84 66 84 L6 84 Q0 84 0 78 L0 6 Q0 0 6 0 Z" fill="#efefef"/><g fill="#266b26"><path d="M29.4 18 L36.3 18 L29 69.5 L22.2 69.5 Z"/><path d="M42.9 18 L49.8 18 L42.6 69.5 L35.6 69.5 Z"/><rect x="16.8" y="30.2" width="38.8" height="6.3"/><rect x="13.9" y="48.5" width="38.8" height="6.3"/></g></svg>
<span class="t" style="left:677px;top:175px;width:120px;text-align:center;font-size:10px;color:#c4c4c4;letter-spacing:.3px">StartMenuControll...</span>
</div>
<div id="insp">
<svg style="left:24px;top:-6px" width="12" height="10" viewBox="0 0 12 10"><path d="M0 4 L6 9.6 L12 4 L12 0 L0 0 Z" fill="#d8d8d8"/></svg>
<svg style="left:13px;top:-2px" width="6" height="4" viewBox="0 0 6 4"><path d="M0 0 L6 0 L3 3.4 Z" fill="#b0b0b0"/></svg>
<span class="lab" style="left:39.6px;top:1px">Tag</span>
<div class="dd" style="left:64px;top:2px;width:260px;letter-spacing:.5px">Untagged</div>
<span class="lab" style="left:337px;top:1px">Layer</span>
<div class="dd" style="left:372px;top:2px;width:290px">Default</div>
<div class="abs" style="left:604px;top:8px;border-left:4px solid transparent;border-right:4px solid transparent;border-top:5px solid #c4c4c4"></div>
<div class="hd" style="top:28px"><svg style="left:7px;top:6px" width="9" height="10" viewBox="0 0 9 10"><path d="M0.5 0.5 L8.5 5 L0.5 9.5 Z" fill="#767676"/></svg><svg style="left:21px;top:3px" width="14" height="14" viewBox="0 0 14 14"><path d="M7 1.2 V7" stroke="#a8e838" stroke-width="2.2" stroke-linecap="round"/><path d="M6.4 8 L1.8 10.8" stroke="#5ac8f5" stroke-width="2.2" stroke-linecap="round"/><path d="M7.6 8 L12.2 10.8" stroke="#f06a30" stroke-width="2.2" stroke-linecap="round"/></svg><span class="t b" style="left:60px">Transform</span><svg style="left:566px;top:5px" width="12" height="12" viewBox="0 0 12 12"><circle cx="6" cy="6" r="5.3" fill="#c4c4c4"/><text x="6" y="9.4" font-size="9.5" font-weight="bold" text-anchor="middle" fill="#3e3e3e" font-family="Liberation Sans, sans-serif">?</text></svg><svg style="left:586px;top:5px" width="12" height="12" viewBox="0 0 12 12"><path d="M1 3.5 H6 M8 3.5 H11 M7.5 1 V6 M1 8.5 H3 M5 8.5 H11 M4.5 6 V11" fill="none" stroke="#c4c4c4" stroke-width="1.4"/></svg><svg style="left:610px;top:4px" width="4" height="14" viewBox="0 0 4 14"><rect x="0.5" y="1" width="2.4" height="2.4" fill="#c4c4c4"/><rect x="0.5" y="5.6" width="2.4" height="2.4" fill="#c4c4c4"/><rect x="0.5" y="10.2" width="2.4" height="2.4" fill="#c4c4c4"/></svg></div>
<div class="hd" style="top:50px"><svg style="left:5.5px;top:7px" width="10" height="9" viewBox="0 0 10 9"><path d="M0.5 0.5 L9.5 0.5 L5 8.5 Z" fill="#767676"/></svg><svg style="left:21px;top:3px" width="13" height="13" viewBox="0 0 13 13"><rect x="0.5" y="0.8" width="3.2" height="3.2" fill="#c08cf0"/><rect x="4.6" y="0.8" width="3.2" height="3.2" fill="#c08cf0"/><rect x="8.7" y="0.8" width="3.2" height="3.2" fill="#c08cf0"/><rect x="0.5" y="4.9" width="3.2" height="3.2" fill="#c08cf0"/><rect x="4.6" y="4.9" width="3.2" height="3.2" fill="#c08cf0"/><rect x="8.7" y="4.9" width="3.2" height="3.2" fill="#c08cf0"/><rect x="0.5" y="9.0" width="3.2" height="3.2" fill="#c08cf0"/><rect x="4.6" y="9.0" width="3.2" height="3.2" fill="#c08cf0"/><rect x="8.7" y="9.0" width="3.2" height="3.2" fill="#c08cf0"/></svg><div class="cb" style="left:40px;top:3px"><svg style="left:1px;top:1px" width="10" height="10" viewBox="0 0 10 10"><path d="M1.5 5.2 L4 7.8 L8.8 2.2" fill="none" stroke="#e8e8e8" stroke-width="1.5"/></svg></div><span class="t b" style="left:60px">Tilemap</span><svg style="left:566px;top:5px" width="12" height="12" viewBox="0 0 12 12"><circle cx="6" cy="6" r="5.3" fill="#c4c4c4"/><text x="6" y="9.4" font-size="9.5" font-weight="bold" text-anchor="middle" fill="#3e3e3e" font-family="Liberation Sans, sans-serif">?</text></svg><svg style="left:586px;top:5px" width="12" height="12" viewBox="0 0 12 12"><path d="M1 3.5 H6 M8 3.5 H11 M7.5 1 V6 M1 8.5 H3 M5 8.5 H11 M4.5 6 V11" fill="none" stroke="#c4c4c4" stroke-width="1.4"/></svg><svg style="left:610px;top:4px" width="4" height="14" viewBox="0 0 4 14"><rect x="0.5" y="1" width="2.4" height="2.4" fill="#c4c4c4"/><rect x="0.5" y="5.6" width="2.4" height="2.4" fill="#c4c4c4"/><rect x="0.5" y="10.2" width="2.4" height="2.4" fill="#c4c4c4"/></svg></div>
<span class="lab" style="left:19px;top:75px">Animation Frame Rate</span>
<div class="fld" style="left:262px;top:76px;width:360px">1</div>
<span class="lab" style="left:19px;top:95px">Color</span>
<div class="abs" style="left:262px;top:96px;width:341px;height:18px;background:#fff;border:1px solid #1c1c1c;border-radius:2px"></div>
<svg style="left:606px;top:98px" width="12" height="14" viewBox="0 0 12 14"><path d="M1 12.5 L2 9.5 L7.5 4 L9.5 6 L4 11.5 Z" fill="#c4c4c4"/><path d="M6.5 2.5 L11 7 M8.5 4.5 L12 1" stroke="#c4c4c4" stroke-width="2"/></svg>
<span class="lab" style="left:19px;top:115px">Tile Anchor</span>
<span class="ax" style="left:262px;top:115px">X</span><div class="fld" style="left:277px;top:116px;width:102px">0.5</div><span class="ax" style="left:384px;top:115px">Y</span><div class="fld" style="left:398px;top:116px;width:102px">0.5</div><span class="ax" style="left:505px;top:115px">Z</span><div class="fld" style="left:519px;top:116px;width:120px">0</div>
<span class="lab" style="left:19px;top:135px">Orientation</span>
<div class="dd" style="left:262px;top:136px;width:400px">XY</div>
<div class="abs" style="left:604px;top:143px;border-left:4px solid transparent;border-right:4px solid transparent;border-top:5px solid #c4c4c4"></div>
<span class="lab dis" style="left:19px;top:155px">Offset</span>
<span class="ax dis" style="left:262px;top:155px">X</span><div class="fld dis" style="left:277px;top:156px;width:102px">0</div><span class="ax dis" style="left:384px;top:155px">Y</span><div class="fld dis" style="left:398px;top:156px;width:102px">0</div><span class="ax dis" style="left:505px;top:155px">Z</span><div class="fld dis" style="left:519px;top:156px;width:120px">0</div>
<span class="lab dis" style="left:19px;top:175px">Rotation</span>
<span class="ax dis" style="left:262px;top:175px">X</span><div class="fld dis" style="left:277px;top:176px;width:102px">0</div><span class="ax dis" style="left:384px;top:175px">Y</span><div class="fld dis" style="left:398px;top:176px;width:102px">0</div><span class="ax dis" style="left:505px;top:175px">Z</span><div class="fld dis" style="left:519px;top:176px;width:120px">0</div>
<span class="lab dis" style="left:19px;top:195px">Scale</span>
<span class="ax dis" style="left:262px;top:195px">X</span><div class="fld dis" style="left:277px;top:196px;width:102px">1</div><span class="ax dis" style="left:384px;top:195px">Y</span><div class="fld dis" style="left:398px;top:196px;width:102px">1</div><span class="ax dis" style="left:505px;top:195px">Z</span><div class="fld dis" style="left:519px;top:196px;width:120px">1</div>
<svg style="left:7px;top:220px" width="9" height="10" viewBox="0 0 9 10"><path d="M0.5 0.5 L8.5 5 L0.5 9.5 Z" fill="#767676"/></svg>
<span class="lab" style="left:19px;top:215px">Info</span>
<div class="hd" style="top:241px"><svg style="left:5.5px;top:7px" width="10" height="9" viewBox="0 0 10 9"><path d="M0.5 0.5 L9.5 0.5 L5 8.5 Z" fill="#767676"/></svg><svg style="left:21px;top:3px" width="13" height="13" viewBox="0 0 13 13"><rect x="0.5" y="0.8" width="3.2" height="3.2" fill="#c08cf0"/><rect x="4.6" y="0.8" width="3.2" height="3.2" fill="#c08cf0"/><rect x="8.7" y="0.8" width="3.2" height="3.2" fill="#c08cf0"/><rect x="0.5" y="4.9" width="3.2" height="3.2" fill="#c08cf0"/><rect x="4.6" y="4.9" width="3.2" height="3.2" fill="#c08cf0"/><rect x="8.7" y="4.9" width="3.2" height="3.2" fill="#c08cf0"/><rect x="0.5" y="9.0" width="3.2" height="3.2" fill="#c08cf0"/><rect x="4.6" y="9.0" width="3.2" height="3.2" fill="#c08cf0"/><rect x="8.7" y="9.0" width="3.2" height="3.2" fill="#c08cf0"/><ellipse cx="9.2" cy="11" rx="5.6" ry="3.9" fill="#3e3e3e"/><path d="M4.4 11 Q9.2 5.4 14 11 Q9.2 16.6 4.4 11 Z" fill="#e0e0e0"/><circle cx="9.2" cy="11" r="1.7" fill="#3e3e3e"/></svg><div class="cb" style="left:40px;top:3px"><svg style="left:1px;top:1px" width="10" height="10" viewBox="0 0 10 10"><path d="M1.5 5.2 L4 7.8 L8.8 2.2" fill="none" stroke="#e8e8e8" stroke-width="1.5"/></svg></div><span class="t b" style="left:60px">Tilemap Renderer</span><svg style="left:566px;top:5px" width="12" height="12" viewBox="0 0 12 12"><circle cx="6" cy="6" r="5.3" fill="#c4c4c4"/><text x="6" y="9.4" font-size="9.5" font-weight="bold" text-anchor="middle" fill="#3e3e3e" font-family="Liberation Sans, sans-serif">?</text></svg><svg style="left:586px;top:5px" width="12" height="12" viewBox="0 0 12 12"><path d="M1 3.5 H6 M8 3.5 H11 M7.5 1 V6 M1 8.5 H3 M5 8.5 H11 M4.5 6 V11" fill="none" stroke="#c4c4c4" stroke-width="1.4"/></svg><svg style="left:610px;top:4px" width="4" height="14" viewBox="0 0 4 14"><rect x="0.5" y="1" width="2.4" height="2.4" fill="#c4c4c4"/><rect x="0.5" y="5.6" width="2.4" height="2.4" fill="#c4c4c4"/><rect x="0.5" y="10.2" width="2.4" height="2.4" fill="#c4c4c4"/></svg></div>
<span class="lab" style="left:19px;top:266px">Sort Order</span>
<div class="dd" style="left:262px;top:267px;width:400px">Bottom Left</div>
<div class="abs" style="left:604px;top:274px;border-left:4px solid transparent;border-right:4px solid transparent;border-top:5px solid #c4c4c4"></div>
<span class="lab" style="left:19px;top:286px">Mode</span>
<div class="dd" style="left:262px;top:287px;width:400px">Chunk</div>
<div class="abs" style="left:604px;top:294px;border-left:4px solid transparent;border-right:4px solid transparent;border-top:5px solid #c4c4c4"></div>
<span class="lab" style="left:19px;top:306px">Detect Chunk Culling Bounds</span>
<div class="dd" style="left:262px;top:307px;width:400px">Auto</div>
<div class="abs" style="left:604px;top:314px;border-left:4px solid transparent;border-right:4px solid transparent;border-top:5px solid #c4c4c4"></div>
<span class="lab dis" style="left:19px;top:326px">Chunk Culling Bounds</span>
<span class="ax dis" style="left:262px;top:326px">X</span><div class="fld dis" style="left:277px;top:327px;width:102px">0</div><span class="ax dis" style="left:384px;top:326px">Y</span><div class="fld dis" style="left:398px;top:327px;width:102px">0</div><span class="ax dis" style="left:505px;top:326px">Z</span><div class="fld dis" style="left:519px;top:327px;width:120px">0</div>
<span class="lab" style="left:19px;top:346px">Mask Interaction</span>
<div class="dd" style="left:262px;top:347px;width:400px">None</div>
<div class="abs" style="left:604px;top:354px;border-left:4px solid transparent;border-right:4px solid transparent;border-top:5px solid #c4c4c4"></div>
<span class="lab" style="left:19px;top:366px">Material</span>
<div class="fld" style="left:262px;top:367px;width:360px"><span style="margin-left:12px;letter-spacing:.55px">Sprite-Lit-Default</span></div>
<svg style="left:265px;top:371px" width="11" height="11" viewBox="0 0 11 11"><circle cx="5.5" cy="5.5" r="4.8" fill="#5fb7e8"/><circle cx="4.6" cy="4.4" r="2.9" fill="#dff2fc"/></svg>
<div class="abs" style="left:601px;top:368px;width:16px;height:16px;background:#373737"></div><svg style="left:604.9px;top:370px" width="12" height="12" viewBox="0 0 12 12"><circle cx="6" cy="6" r="4.6" fill="none" stroke="#c4c4c4" stroke-width="1.1"/><circle cx="6" cy="6" r="1.7" fill="#c4c4c4"/></svg>
<svg style="left:7px;top:392px" width="10" height="9" viewBox="0 0 10 9"><path d="M0.5 0.5 L9.5 0.5 L5 8.5 Z" fill="#767676"/></svg>
<span class="lab b" style="left:20px;top:386px">Additional Settings</span>
<span class="lab" style="left:34px;top:406px">Sorting Layer</span>
<div class="dd" style="left:262px;top:407px;width:400px">Default</div>
<div class="abs" style="left:604px;top:414px;border-left:4px solid transparent;border-right:4px solid transparent;border-top:5px solid #c4c4c4"></div>
<span class="lab" style="left:34px;top:426px">Order in Layer</span>
<div class="fld" style="left:262px;top:427px;width:360px">0</div>
<span class="lab" style="left:34px;top:446px">Rendering Layer Mask</span>
<div class="dd" style="left:262px;top:447px;width:400px">Default</div>
<div class="abs" style="left:604px;top:454px;border-left:4px solid transparent;border-right:4px solid transparent;border-top:5px solid #c4c4c4"></div>
<div class="hd" style="top:474px"><svg style="left:5.5px;top:7px" width="10" height="9" viewBox="0 0 10 9"><path d="M0.5 0.5 L9.5 0.5 L5 8.5 Z" fill="#767676"/></svg><svg style="left:21px;top:3px" width="13" height="13" viewBox="0 0 13 13"><rect x="0.5" y="0.8" width="3.2" height="3.2" fill="#9ede3c"/><rect x="4.6" y="0.8" width="3.2" height="3.2" fill="#9ede3c"/><rect x="8.7" y="0.8" width="3.2" height="3.2" fill="#9ede3c"/><rect x="0.5" y="4.9" width="3.2" height="3.2" fill="#9ede3c"/><rect x="4.6" y="4.9" width="3.2" height="3.2" fill="#9ede3c"/><rect x="8.7" y="4.9" width="3.2" height="3.2" fill="#9ede3c"/><rect x="0.5" y="9.0" width="3.2" height="3.2" fill="#9ede3c"/><rect x="4.6" y="9.0" width="3.2" height="3.2" fill="#9ede3c"/><rect x="8.7" y="9.0" width="3.2" height="3.2" fill="#9ede3c"/></svg><div class="cb" style="left:40px;top:3px"><svg style="left:1px;top:1px" width="10" height="10" viewBox="0 0 10 10"><path d="M1.5 5.2 L4 7.8 L8.8 2.2" fill="none" stroke="#e8e8e8" stroke-width="1.5"/></svg></div><span class="t b" style="left:60px">Tilemap Collider 2D</span><svg style="left:566px;top:5px" width="12" height="12" viewBox="0 0 12 12"><circle cx="6" cy="6" r="5.3" fill="#c4c4c4"/><text x="6" y="9.4" font-size="9.5" font-weight="bold" text-anchor="middle" fill="#3e3e3e" font-family="Liberation Sans, sans-serif">?</text></svg><svg style="left:586px;top:5px" width="12" height="12" viewBox="0 0 12 12"><path d="M1 3.5 H6 M8 3.5 H11 M7.5 1 V6 M1 8.5 H3 M5 8.5 H11 M4.5 6 V11" fill="none" stroke="#c4c4c4" stroke-width="1.4"/></svg><svg style="left:610px;top:4px" width="4" height="14" viewBox="0 0 4 14"><rect x="0.5" y="1" width="2.4" height="2.4" fill="#c4c4c4"/><rect x="0.5" y="5.6" width="2.4" height="2.4" fill="#c4c4c4"/><rect x="0.5" y="10.2" width="2.4" height="2.4" fill="#c4c4c4"/></svg></div>
<span class="lab" style="left:19px;top:499px">Max Tile Change Count</span>
<div class="fld" style="left:262px;top:500px;width:360px">1000</div>
<span class="lab dis" style="left:19px;top:519px">Extrusion Factor</span>
<div class="fld dis" style="left:262px;top:520px;width:360px">0</div>
<span class="lab" style="left:19px;top:539px">Use Delaunay Mesh</span>
<div class="cb" style="left:262px;top:542px"></div>
<span class="lab" style="left:19px;top:559px">Material</span>
<div class="fld" style="left:262px;top:560px;width:360px">None (Physics Material 2D)</div>
<div class="abs" style="left:601px;top:561px;width:16px;height:16px;background:#373737"></div><svg style="left:604.9px;top:563px" width="12" height="12" viewBox="0 0 12 12"><circle cx="6" cy="6" r="4.6" fill="none" stroke="#c4c4c4" stroke-width="1.1"/><circle cx="6" cy="6" r="1.7" fill="#c4c4c4"/></svg>
<span class="lab" style="left:19px;top:579px">Is Trigger</span>
<div class="cb" style="left:262px;top:582px"></div>
<span class="lab" style="left:19px;top:599px">Used By Effector</span>
<div class="cb" style="left:262px;top:602px"></div>
<span class="lab" style="left:19px;top:619px">Composite Operation</span>
<div class="dd" style="left:262px;top:620px;width:400px">None</div>
<div class="abs" style="left:604px;top:627px;border-left:4px solid transparent;border-right:4px solid transparent;border-top:5px solid #c4c4c4"></div>
<span class="lab" style="left:19px;top:639px">Offset</span>
<span class="ax" style="left:262px;top:639px">X</span><div class="fld" style="left:277px;top:640px;width:102px">0</div>
<span class="ax" style="left:384px;top:639px">Y</span><div class="fld" style="left:398px;top:640px;width:102px">0</div>
<svg style="left:7px;top:664px" width="9" height="10" viewBox="0 0 9 10"><path d="M0.5 0.5 L8.5 5 L0.5 9.5 Z" fill="#767676"/></svg>
<span class="lab" style="left:19px;top:659px">Layer Overrides</span>
<svg style="left:7px;top:682px" width="9" height="10" viewBox="0 0 9 10"><path d="M0.5 0.5 L8.5 5 L0.5 9.5 Z" fill="#767676"/></svg>
<span class="lab" style="left:19px;top:677px">Info</span>
<div class="abs" style="left:0;top:702px;width:617px;height:1px;background:#1a1a1a"></div>
<div class="abs" style="left:0;top:703px;width:617px;height:33px;background:#3a3a3a"></div>
<div class="abs" style="left:16px;top:708px;width:32px;height:32px;background:#4a4a4a"></div>
<div class="abs" style="left:17px;top:710px;width:30px;height:30px;border-radius:50%;background:#fff"></div>
<span class="t" style="left:56px;top:708px;font-size:13px;color:#7e7e7e;letter-spacing:.48px">Sprite-Lit-Default (Material)</span>
<svg style="left:579px;top:711px" width="11" height="11" viewBox="0 0 12 12"><circle cx="6" cy="6" r="5.3" fill="#c4c4c4"/><text x="6" y="9.4" font-size="9.5" font-weight="bold" text-anchor="middle" fill="#3a3a3a" font-family="Liberation Sans, sans-serif">?</text></svg>
<svg style="left:597px;top:711px" width="11" height="11" viewBox="0 0 12 12"><path d="M1 3.5 H6 M8 3.5 H11 M7.5 1 V6 M1 8.5 H3 M5 8.5 H11 M4.5 6 V11" fill="none" stroke="#9a9a9a" stroke-width="1.4"/></svg>
<div class="abs" style="left:614px;top:710px;width:3px;height:3px;background:#c4c4c4"></div><div class="abs" style="left:614px;top:715px;width:3px;height:3px;background:#c4c4c4"></div>
<span class="t" style="left:56px;top:731px;color:#6a6a6a">Shader</span>
<div class="abs" style="left:108px;top:732px;width:418px;height:8px;background:#474747;border-radius:3px"></div>
<span class="t" style="left:112px;top:730px;color:#303030">Universal Render Pipeline/2D/Sprite-Lit-Default</span>
<div class="abs" style="left:532px;top:732px;width:42px;height:8px;background:#474747;border-radius:3px"></div>
<span class="t" style="left:538px;top:730px;color:#303030">Edit...</span>
<div class="abs" style="left:580px;top:732px;width:40px;height:8px;background:#474747;border-radius:3px"></div>
</div>
</div>
</body></html>
